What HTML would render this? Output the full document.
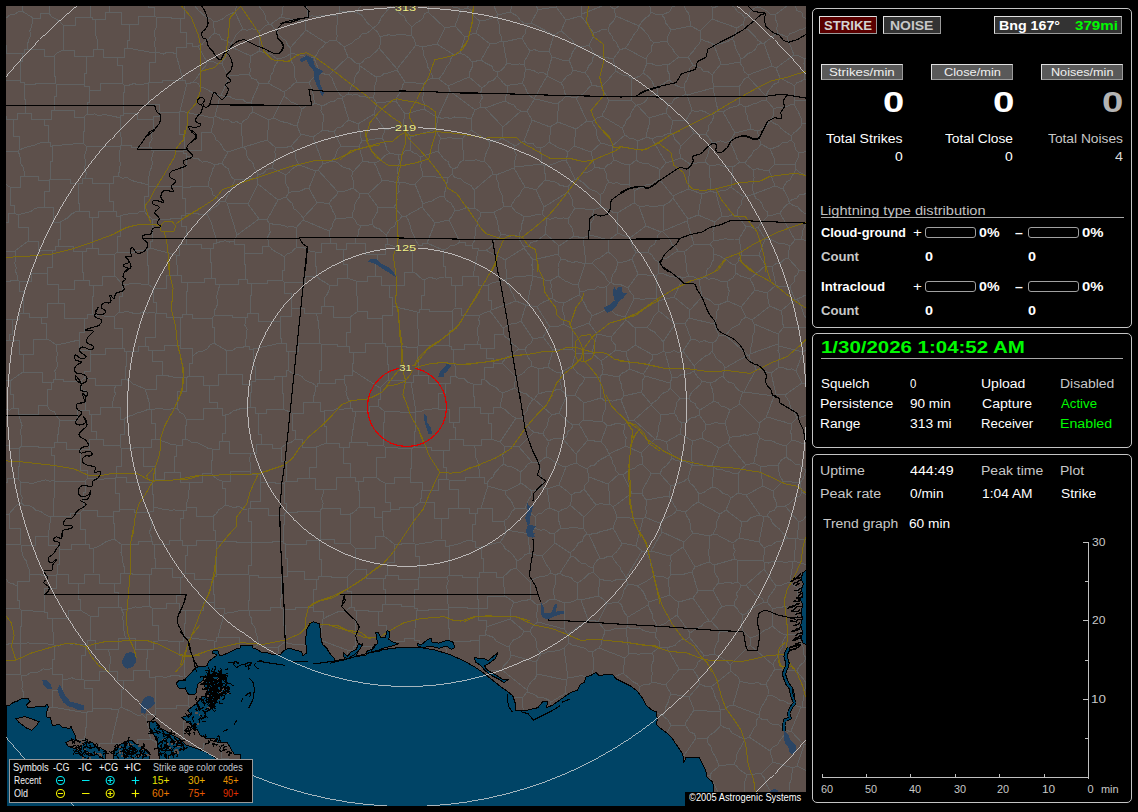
<!DOCTYPE html>
<html>
<head>
<meta charset="utf-8">
<title>Lightning Detector</title>
<style>
html,body{margin:0;padding:0;background:#000;}
body{width:1138px;height:812px;position:relative;overflow:hidden;font-family:"Liberation Sans",sans-serif;color:#fff;}
#map{position:absolute;left:6px;top:6px;width:800px;height:800px;overflow:hidden;background:#5d504b;}
#map svg{position:absolute;left:0;top:0;}
.panel{position:absolute;left:812px;width:318px;border:1px solid #c4c4c4;border-radius:5px;box-sizing:content-box;background:#000;}
.t{position:absolute;white-space:nowrap;line-height:1;font-size:13px;transform-origin:0 0;}
.b{font-weight:bold;}
.g{color:#c8c8c8;}
.gr{color:#00fa00;}
.btn{position:absolute;box-sizing:border-box;border:1px solid;border-color:#e0e0e0 #9a9a9a #9a9a9a #e0e0e0;background:#595959;}
.hr{position:absolute;height:1px;background:#a8a8a8;}
.bar{position:absolute;box-sizing:border-box;border:1px solid #a0a0a0;border-radius:3px;width:51px;height:11px;background:#000;}
#legend{position:absolute;left:3px;top:753px;width:244px;height:44px;box-sizing:border-box;border:1px solid #9a9a9a;background:#000;}
#copy{position:absolute;left:679px;top:786px;width:121px;height:14px;background:#000;}
.s{font-size:11px;}
</style>
</head>
<body>

<div id="map">
<svg width="800" height="800" viewBox="6 6 800 800" shape-rendering="crispEdges">
<rect x="6" y="6" width="800" height="800" fill="#5d504b"/>
<path fill="none" stroke="#616262" stroke-width="1" d="M119 839V828H123V810M151 814H147V806H143M123 810H137V806H143M458 708L450 715M458 708V689H449V676M449 676H437V683H424M424 683V694H424V705M424 705H443V715H450M821 541L817.2 541.5L813.3 540.1L809.3 538.9L805.2 539.3L801.1 540.0L797 538M817 508L814.3 511.0L810.9 514.0L806.3 515.6L803.6 519.7L799 522M797 538L799 522M802 492L806.4 495.0L809.8 498.3L813.8 500.6L818 502M802 492L799.8 496.2L795.5 497.8L792.2 500.8L789.1 503.8L785 506M799 522L785 506M451 739H461V742H481M451 739L450.5 743.6L451.0 747.7L452.3 751.8L452.0 756.1L454.2 760.1L453.4 764.4L455.2 768.5L455 773M481 742L482.4 746.3L482.3 751.2L484.1 755.7L484 761M484 761V769H475V775M455 773H470V775H475M482 709H468V708H458M482 709V719H490V727M490 727V732H481V742M447 736V727H450V715M447 736L451 739M151 814H164V807H183M183 807H187V813H191M26 769V763H29V751M26 769H21V778H11M-6 770L-2.2 773.0L2.7 773.8L6.4 777.1L11 778M29 751H23V736H14M14 736H0V745H-6M52 784H39V769H26M52 784H57V776H63M53 741V757H63V776M53 741H44V751H29M-11 812H-1V804H12M12 804V789H11V778M90 810L94.9 810.2L99.2 807.8L103.8 807.9L108.4 809.0L112.7 807.1L117 807M90 810V785H86V775M117 807V790H114V778M86 775L114 778M143 806V794H147V785M183 807V789H178V779M178 779H170V774H163M163 774H155V785H147M123 810H119V807H117M114 778L125 770M147 785H141V770H125M809 469L806 470M809 469L811.3 464.6L811.4 459.8L813.1 455.5L814.2 451.1L815 447M806 470L802.3 468.4L799.9 464.6L795.3 464.1L792.4 461.1L788.8 459.1L786 457M815 446L810.9 444.4L806.8 443.7L802.6 443.8L798.7 441.9L794.8 440.7L791 441M786 457L786.7 451.1L786 446M786 446L791 441M800 483L802.7 479.3L804.6 474.7L806 470M800 483L802 492M830 476L809 469M821 422L816.7 420.6L814.0 417.2L810 415M813 395L810 415M776 394L774 396M776 394L785 395M774 396L766 418M792 423L787.6 423.4L783.5 421.5L779.2 420.6L775.0 419.5L770.8 417.9L766 418M792 423L797 418M785 395L787.3 398.8L789.7 402.3L790.2 406.9L793.1 410.2L794.9 414.0L797 418M792 423L791.9 427.7L790.5 431.9L792.0 436.4L791 441M797 418L801.5 416.8L805.9 415.6L810 415M776 394L771 373M774 396L744 392M771 373L765.9 371.8L761.2 369.0L756 369M756 369L744 392M740 404L739.9 400.1L741.2 396.1L743 392M740 404L759 423M759 423L766 418M744 392L743 392M828 312L824.8 314.3L821.2 317.0L817.3 319.2L812.3 319.3L809 322M809 322L806.5 318.7L804.0 315.1L802.6 310.9L801.5 306.6L799.4 302.8L797 299M821 290L816.7 291.7L812.3 292.1L808.5 293.9L804.6 295.5L800.8 297.5L797 299M759 423L759.3 427.7L757 433M786 446L781.4 444.8L777.2 443.5L773.2 441.3L768.9 440.3L764.4 440.3L760 438M760 438L757 433M353 813H347V806H344M344 806H335V806H319M319 806V827H317V841M424 743H441V736H447M424 743L423.4 746.8L424.6 750.7L424.8 754.8L425.3 758.8L426.2 762.7L426.3 766.7L428 771M455 773H451V777H446M428 771L432.5 771.4L436.5 775.1L441.2 776.6L446 777M353 813L374 808M374 808H376V814H381M374 808L374.0 804.1L374.0 800.0L374.4 795.9L375.3 791.9L376.1 787.8L376 784M376 784H387V773H393M393 773H404V782H410M410 782V792H413V804M381 814L385.1 812.7L388.9 811.0L392.7 809.3L397.1 809.5L400.8 807.5L404.9 806.9L408.5 804.4L413 804M424 743H420V737H413M393 773L392.4 768.8L392.2 764.4L391.1 760.2L392.0 755.7L391.9 751.3L390 747M410 782H420V771H428M390 747H407V737H413M424 705L421.1 707.8L418.2 710.8L415.4 714.0L412 717M412 717V731H413V737M424 683L413 676M387 703L412 717M387 703V692H393V679M393 679L396.7 678.3L400.9 677.8L404.9 676.4L409.4 678.1L413 676M356 610H368V611H378M356 610V621H355V646M378 611V625H386V641M386 641V644H379V651M379 651H371V646H355M320 640L347 650M320 640L323 619M356 610H354V607H351M323 619L327.2 616.6L331.1 614.9L334.9 613.0L338.9 611.5L343.5 611.5L347.3 609.7L351 607M347 650H353V646H355M482 709L487 699M449 676L450 674M487 699L487.6 695.3L485.5 691.4L485.8 687.4L485.6 683.4L486.6 679.3L485 675M450 674L480 672M485 675H482V672H480M790 582L793 562M790 582L798 589M798 589L801.9 586.6L806.4 584.9L810.7 582.8L816.0 583.0L820 580M794 561L817 568M794 561L793 562M796 539L797 538M796 539L794 561M490 727L494.6 727.0L499.2 727.9L504.0 728.2L508.6 729.6L513 730M484 761L488.5 761.2L492.9 761.3L497.3 761.7L501.6 762.7L506 762M513 730L516.2 733.9L516.1 739.0L519 743M506 762L508.6 758.5L512.1 755.3L513.2 750.5L515.4 746.5L519 743M823 790L793 800M799 819L797.1 815.8L798.0 811.2L795.7 807.5L794.8 803.4L793 800M761 774L756.4 773.8L751.5 774.7L747 775M761 774L773 762M773 762L770 751M770 751L749 737M745 739L749 737M745 739L743.0 743.4L740.8 747.4L738.2 751.3L736.3 755.4L736.0 760.2L734 764M734 764L737.1 766.6L739.8 769.9L743.4 772.3L747 775M793 768L773 762M793 768L792.3 771.6L791.4 775.7L791.0 779.9L789.5 783.9L790.0 788.2L789.4 792.4L789 797M776 798L780.2 798.1L784.4 797.5L789 797M776 798L772.4 794.4L770.1 790.4L767.5 786.6L765.7 782.4L764.2 777.9L761 774M759 717L762.4 719.9L767.1 719.7L770.0 723.3L774.0 724.7L778.6 724.7L782.0 727.3L785.3 730.2L789 731M759 717L756.1 720.8L756.1 725.7L753.3 729.2L751.5 733.2L749 737M789 731L785.8 733.9L782.5 737.2L779.7 740.9L777.2 745.0L772.8 747.2L770 751M733 705L728.3 706.1L724.9 709.3L720 710M733 705L759 715M720 710L720 712M759 715L759 717M721 725L720 712M721 725L724.4 727.7L729.1 728.8L732.1 733.0L736.2 735.1L740.2 737.4L745 739M710 777L693 799M710 777L723 801M723 801L703 819M693 799L700 819M741 805L762 812M741 805L740 805M740 805L729 838M776 798L772.4 801.2L769.0 805.0L766.0 809.0L762 812M747 775L745.4 779.3L744.6 783.6L744.9 788.1L744.1 792.4L743.4 796.7L743.0 801.0L741 805M723 801L727.1 802.5L731.4 803.1L735.9 803.5L740 805M789 797L793 800M671 793L675.2 794.4L679.9 794.6L683.8 797.2L688.5 797.5L693 799M671 793L668.9 796.9L669.0 801.7L666.5 805.6L665.4 809.9L663 814M798 589L797.6 594.5L799 600M799 600L803.0 601.3L807.4 602.6L811.8 603.7L815.3 607.2L820 608M75 -15V-5H90V17M90 17H92V19H95M116 -12V-2H109V12M109 12H105V19H95M383 578V589H385V604M383 578H385V575H387M385 604H401V606H414M414 606V589H418V579M387 575H398V579H418M58 -14V4H49V13M90 17H75V25H63M49 13L51.6 17.0L55.9 18.8L59.6 21.4L63 25M12 804H17V811H23M23 811L23.1 815.8L22.8 820.3L21.7 824.8L20.6 829.3L20.1 833.8L19.3 838.3L20 843M52 784V791H49V807M23 811H38V807H49M625 317L626 320M625 317L634 299M626 320L629.2 322.6L632.3 326.0L636 328M634 299L638.2 298.4L642.7 299.7L647.1 298.5L651.5 298.5L656 299M636 328L647 327M647 327L650.6 323.2L652.5 318.5L655.3 314.5L659 311M659 311L658.6 306.1L658 301M656 299L658 301M656 276L638 274M656 276L656 299M628 288L638 274M628 288L630.0 291.6L632.9 295.0L634 299M663 342L675 324M663 342L660.6 338.3L657.4 335.2L654.4 332.0L650.3 329.9L647 327M675 324L659 311M690 310L689 318M690 310L674 297M675 324L685 323M685 323L689 318M674 297L658 301M809 322L807 327M807 327L807.9 330.6L808.6 334.9L810 339M849 342L844.5 341.0L840.2 340.8L835.8 341.6L831.6 340.5L827.3 341.3L823.1 339.4L818.9 339.2L814.5 340.0L810 339M800 483L783 481M786 457L781.1 460.3L778 465M778 465L778.2 469.4L779.4 473.4L780.5 477.4L783 481M616 350L626 352M616 350L601 361M626 352L626.9 356.4L628.4 360.6L629.3 364.9L629 369M629 369L625.6 371.7L621.7 373.4L619 377M619 377L602 374M601 361L602.3 365.4L603.1 369.5L602 374M611 337L626 320M611 337L612.2 341.2L615.4 345.0L616 350M635 345L626 352M635 345L636 328M656 276L658 274M674 297L683 278M658 274L662.7 273.4L666.7 275.1L670.7 276.5L674.9 277.2L679.3 276.5L683 278M618 263L616.9 266.7L615.6 270.7L613.0 274.3L611.6 278.3L611 282M618 263L615.5 258.4L612.0 254.9L608 252M608 252L603.8 255.0L600.0 257.9L595.5 259.8L592 263M592 263L595.4 266.3L598.3 269.6L601.9 272.3L604.9 275.4L606.9 279.6L610 283M610 283L611 282M628 288L623.7 285.8L619.4 284.3L614.5 284.8L611 282M632 259L638 274M632 259L627.7 260.8L623.1 262.1L618 263M461 10L457.5 7.4L452.9 7.0L450.0 3.1L445.3 2.7L442.0 -0.4L438 -2M461 10L467 8M467 8L469.6 4.2L470.9 0.2L473.3 -3.3L474 -8M438 409V393H445V383M438 409L433.9 408.5L429.6 409.7L425.0 409.5L420.8 411.4L416 412M445 383H428V375H418M418 375H413V382H411M416 412L411 382M585 264L578 285M585 264L580.6 262.7L576.7 261.7L572.4 262.3L568.4 261.6L564.7 259.3L561 259M578 285L573.3 284.6L569.3 282.7L565.3 281.0L561.5 278.6L558 276M558 276L558.0 271.9L558.0 267.5L558.9 263.2L561 259M548 367L553 350M548 367L539 369M525 349L527.4 345.5L531.3 343.0L533 339M525 349L526.6 353.2L528.1 357.4L531.1 361.0L532 366M532 366L539 369M553 350L543 337M533 339L543 337M352 370L380 388M352 370V363H353V352M353 352H365V343H382M388 380L380 388M388 380V364H387V346M387 346H385V343H382M418 375V359H417V347M411 382H404V380H388M387 346H406V347H417M455 376H450V383H445M455 376L455.0 371.1L455.4 366.7L453.3 362.5L453.9 358.1L453.9 353.7L453 349M453 349H451V346H449M449 346L419 345M417 347L419 345M452 311V330H449V346M452 311H429V309H421M421 309H419V312H417M419 345L417 312M452 311L455 308M453 349H464V344H477M477 344L478.2 340.4L478.0 336.1L477.7 331.9L477.8 327.7L479.9 323.7L478.7 319.4L480 315M455 308H461V315H480M475 775V790H486V798M512 788L508.7 790.7L504.8 792.3L501.8 795.3L498.4 797.7L494.2 798.8L491 801M512 788L514 775M506 762L509.4 766.2L511.7 770.8L514 775M486 798H489V801H491M511 655L509.4 659.7L506.6 663.0L503.3 666.1L502 670M511 655L536 662M502 670L527 690M527 690L528.8 685.3L531.5 681.4L535.4 678.2L537 674M536 662L537 674M541 654L544.9 653.1L548.6 651.4L552.7 651.4L556.7 650.6L560.6 649.8L564 648M541 654L536 662M564 648L568 678M568 678L566 680M566 680L537 674M450 674L449.8 670.0L448.8 665.8L448.4 661.6L446.8 657.6L446.6 653.3L446.1 649.1L445 645M413 676L414.6 672.2L415.5 668.1L416.7 664.0L416.7 659.8L416.1 655.4L416.5 651.2L418.6 647.3L419 643M445 645H429V643H419M378 611H382V604H385M386 641H404V638H414M414 606V608H417V610M417 610L414 638M393 679H387V670H383M383 670V664H379V651M414 638V640H419V643M733 705L740 681M768 695L766.3 698.9L764.2 702.8L761.7 706.6L760.0 710.7L759 715M768 695L768.2 689.5L766 684M766 684L761.6 684.7L757.5 682.3L752.9 683.8L748.6 683.1L744.3 682.6L740 681M711 687L713.1 690.4L714.6 694.3L715.4 698.5L718.1 702.0L719.4 706.0L720 710M711 687L731 671M740 681L738.0 676.8L734.4 674.1L731 671M772 626L775.6 628.7L778.9 631.6L782.7 633.9L787 635M772 626L768.5 628.7L764.5 630.1L761.2 632.9L757.7 635.4L753.7 636.6L750 638M750 638L750 645M750 645L773 665M787 635L784.2 638.7L782.5 642.4L782.6 647.0L780.2 650.4L778.5 654.1L777.0 658.0L774.3 661.3L773 665M766 684L775 669M750 645L730 665M731 671L730 665M773 665L775 669M793 768L797 766M797 766L821 778M791 731L804 745M791 731L801 707M814 744L804 745M821 712L802 707M802 707L801 707M789 731L791 731M797 766L804 745M768 695L772.8 695.7L776.6 697.9L780.3 700.6L784.8 701.1L788.5 703.7L793.2 703.7L797.0 706.0L801 707M833 678L828.1 677.8L824.0 680.7L819.5 681.5L814.9 681.6L810.3 681.5L806 683M806 683L802 707M806 683L803.2 678.9L799.9 674.9L797 671M797 671L775 669M671 793L668 784M668 784L687 768M710 777L710 775M687 768L691.7 768.9L695.8 771.8L700.4 772.9L704.8 775.0L710 775M734 764L719 766M719 766L715.6 769.1L712.2 771.7L710 775M721 725L717.6 729.1L713.9 732.4L709.6 735.2L707 739M719 766L717.7 762.1L716.0 758.2L714.1 754.5L711.8 750.9L711.0 746.6L708.1 743.3L707 739M668 784L664.5 782.9L661.5 779.8L657 779M643 782L657 779M643 782L635 803M635 803L639.5 805.0L644.0 806.2L647.6 809.4L652.0 810.9L656.5 812.0L660 815M643 782L639.4 780.8L636.8 777.2L633.2 775.0L630.3 771.9L626.6 769.8L623.8 766.5L620 764M620 764L618.0 768.2L615.1 771.1L612.4 774.2L609.4 777.0L606 779M635 803L628 807M628 807L625.4 802.8L621.0 800.7L618.2 796.9L614.2 794.3L610.7 791.2L607 788M606 779L607 788M323 619V611H313V607M351 607V591H347V577M316 579V589H313V607M316 579H318V576H321M321 576H331V577H347M383 578H366V569H355M355 569L350.6 573.3L347 577M246 -1L257 3M257 3L261.0 0.8L264.8 -1.3L267.5 -4.7L270.5 -7.7L274.5 -9.4L278 -12M223 -10L226.9 -7.8L230.0 -4.1L233.8 -1.1L238 1M238 1L246 -1M95 19L95.2 23.0L95.2 27.4L95.3 31.8L96.1 36.1L97.6 40.5L97.6 44.9L97 49M63 25V40H63V50M63 50H74V56H86M86 56H93V49H97M154 16H138V24H129M154 16L156 17M156 17L156.2 21.5L156.9 26.0L154.8 30.3L154.5 34.7L155.6 39.2L154.1 43.6L155.3 48.0L155 52M129 24V40H127V48M127 48L155 53M155 53L155 52M148 -11V7H154V16M109 12H121V24H129M180 18H171V17H156M180 18H184V5H194M194 5V-3H196V-6M117 57H103V49H97M117 57H124V48H127M194 5L196.7 8.4L199.8 11.5L203.0 14.5L206.3 17.3L210.8 18.7L214 22M238 1L235 12M235 12L230.2 13.9L226.2 16.1L222.5 19.1L218.2 20.9L214 22M180 18V32H186V43M155 52L159.3 52.7L163.4 54.1L167.7 52.0L171.8 52.3L176 54M186 43V47H176V54M214 22L213.9 27.7L215 33M186 43H192V46H198M215 33L211.3 35.8L208.7 39.3L204.8 41.1L202.0 44.4L198 46M22 11L33 18M22 11L18.0 11.8L14.4 14.5L10.1 14.7L6.6 17.7L2.3 18.1L-1.6 19.6L-6 20M33 18L32.6 22.4L31.3 26.8L29.8 31.1L30.6 35.9L28.5 40.1L27.6 44.6L27 49M-5 45H6V53H22M22 53H24V49H27M17 -16V-1H22V11M49 13H40V18H33M63 50L58.1 52.3L54 56M54 56H44V49H27M-11 86H2V80H20M20 80V61H22V53M20 80V82H24V84M54 56V76H55V83M24 84H35V83H55M9 340V334H12V319M9 340L4.0 341.4L-0.1 343.7L-4.6 344.8L-8.7 347.2L-13 348M-10 310H1V319H12M53 811V831H52V846M53 811L88 814M49 807V808H53V811M85 774H73V776H63M85 774L86 775M90 810V813H88V814M635 345L653 355M629 369L643 374M643 374L646.0 370.2L648.1 366.6L649.3 362.5L652.3 359.3L653 355M663 342L664 351M653 355L658.9 353.8L664 351M694 371L694 366M694 371L689.9 373.4L685.4 374.5L680.7 374.8L676.8 377.8L672 378M672 378L665 352M665 352L669.7 352.7L674.0 350.4L678.6 352.6L683 351M694 366L683 351M685 323L691 339M665 352L664 351M683 351L691 339M748 355L725 368M748 355L725 335M725 368L722.9 364.0L719.7 361.2L716.4 358.5L714.3 354.8L712 351M712 351L713 343M713 343L716.7 339.9L719 335M725 335L719 335M749 355L750.3 360.4L754.0 364.1L756 369M749 355L748 355M743 392L739.1 390.5L735.9 387.6L733.7 383.4L729.0 382.4L725.6 379.8L723 376M723 376L725 368M723 376L718.6 378.3L715.0 381.5L710 383M694 371L697.2 376.6L702 381M710 383L702 381M694 366L697.7 362.1L701.3 359.3L704.9 356.3L709.3 354.4L712 351M691 339L695.5 339.4L699.5 342.3L704.3 340.6L708.6 342.1L713 343M714 324L689 318M714 324L719 335M438 409H449V422H453M455 376L459.0 378.5L464.3 378.9L468.1 382.4L473 384M473 384V396H474V407M474 407H459V422H453M443 450H449V439H455M443 450H431V447H414M414 447V431H415V413M416 412L415 413M455 439V427H453V422M801 239L817 244M801 239L802.5 234.9L802.8 230.5L804.7 226.8L805.6 222.7L807.8 219.0L809 215M809 215L814.5 213.1L820 212M797 299L795 299M784 327L807 327M784 327L782.3 322.8L782.8 318.4L781.8 314.5L781 311M795 299L781 311M778 344L778 334M778 344L750 354M778 334L754 324M750 354L750.7 349.7L751.3 345.4L752.7 341.2L752.1 336.7L754.3 332.6L754.4 328.2L754 324M771 373L778 368M749 355L750 354M778 368L778.3 363.3L779.2 359.0L779.8 354.6L777.9 350.2L779 346M779 346L778 344M752 320L770 306M752 320L754 324M784 327L778 334M781 311L770 306M746 317L752 320M746 317L741.7 319.7L739.4 324.1L735.3 326.3L731.2 328.5L728.3 332.2L725 335M825 369L806 384M825 365L806 350M796 371L803 352M796 371L802 383M803 352L806 350M802 383L806 384M813 395L810.5 391.1L808.6 387.0L806 384M810 339L806 350M778 368L783.1 367.6L787.4 369.4L792.1 368.9L796 371M779 346L803 352M785 395L802 383M711 687L705.1 686.3L700 684M694 710L720 712M694 710L689 697M689 697L700 684M560 373L555.5 372.0L551.7 369.5L548 367M560 373L561.0 377.3L559.8 381.5L561.1 385.5L561 390M539 369L538 394M561 390L556.3 389.5L551.9 392.0L546.9 391.6L542.3 392.8L538 394M461 10L455 26M467 8L470.9 10.2L473.1 14.7L476.2 18.2L480 21M476 33L480 21M476 33L472.3 33.7L468.8 35.9L465 37M465 37L455 26M476 33L490 44M498 15L493.8 17.6L489.4 18.9L485.1 20.5L480 21M498 15L497.4 19.7L499.1 23.9L499.1 28.3L499.5 32.6L501.5 36.8L501 41M490 44L495.8 43.8L501 41M576 353L572 349M576 353L592 353M572 349L573 329M592 353L597 334M573 329L589 323M597 334L589 323M572 366L576 353M572 366L560 373M553 350L572 349M585 378L600 377M585 378L581.3 375.3L577.6 373.1L574.8 369.9L572 366M600 377L602 374M601 361L592 353M563 324L568.0 326.7L573 329M563 324L558.9 326.0L554.2 326.8L550 327M550 327L546.1 332.1L543 337M611 337L597 334M580 291L579 295M580 291L584.7 291.4L588.8 289.0L593.7 290.0L597.7 286.6L602.6 288.0L607 286M579 295L581.8 298.1L583.6 301.9L585.6 305.5L587.2 309.5L590.1 312.6L592 316M607 286L606 310M606 310L601.3 311.8L596.5 314.0L592 316M586 263L592 263M586 263L585 264M578 285L580 291M610 283L607 286M564 303L579 295M564 303L562.5 307.4L562.8 311.6L564.2 315.8L564.2 320.0L563 324M589 323L592 316M625 317L620.2 315.7L615.4 314.5L611.5 310.8L606 310M544 166L542 164M544 166L544.5 170.5L545.3 175.2L545 180M542 164L515 167M515 167L514 168M525 187L514 168M525 187L530.4 188.3L536 190M545 180L536 190M544 166L548.3 165.6L552.7 164.0L557.2 162.5L561.6 160.7L566 161M575 179L573.1 175.4L571.2 171.8L570.1 167.8L568.1 164.3L566 161M575 179L571.0 182.4L568 187M545 180L549.0 180.8L553.1 181.5L557.0 182.8L560.3 185.7L564.5 186.1L568 187M503 328L490 311M503 328L507.5 325.5L512.0 323.6L517.1 323.1L521 321M521 321L526 305M491 310L490 311M491 310L516 301M516 301L526 305M486 348H494V334H503M486 348V358H493V363M502 363L493 363M502 363L504.5 359.7L507.8 356.7L512.3 355.1L515.3 351.7L519 349M519 349L515.5 345.9L511.8 343.5L509.4 339.6L505.6 337.3L503 334M477 344H480V348H486M480 315L484.8 312.7L490 311M503 328L503 334M473 384H481V379H484M484 379V367H493V363M484 379L487.8 382.2L491.2 385.4L495.8 387.2L499.0 390.8L503 393M503 393L515 388M516 377L514.9 382.2L515 388M516 377L502 363M525 349L519 349M532 366L527.5 368.1L524.4 372.1L520.5 374.9L516 377M533 339L521 321M421 309V295H424V280M456 285L455 308M456 285H451V277H445M445 277L440.4 277.1L436.5 279.2L432.2 277.9L428.1 277.9L424 280M446 777L446.5 781.4L446.1 785.7L444.1 789.9L445.4 794.3L444.5 798.5L444 803M413 804H416V811H421M421 811H428V803H444M486 798H476V811H456M444 803H450V811H456M484 847V825H493V807M493 807L491 801M456 811V829H457V837M355 548L350 543M355 548V558H355V569M321 576V559H319V540M350 543H334V539H320M319 540L320 539M541 654L538.3 650.6L536.4 646.8L536.3 642.1L534.9 638.0L532.0 634.7L530 631M511 655L509 647M509 647L510.9 643.0L513.9 639.7L518.4 637.9L522.0 635.1L524 631M530 631L524 631M485 675H491V670H502M480 672V660H479V640M509 647L504.2 645.3L500.2 643.2L496.2 641.2L493.2 637.2L488.8 635.8L485 634M479 640V635H485V634M445 645V643H449V641M479 640H470V641H449M417 610H428V609H448M449 641V628H448V609M800 632L815 627M800 632L798 634M798 634L798.5 637.9L800.1 641.8L802.3 645.5L803.9 649.4L803.5 654.0L806 658M806 658L810.1 657.7L814.5 657.5L819.0 657.9L823 656M799 600L793 607M793 607L794.9 610.8L796.6 614.8L795.7 619.4L796.4 623.7L799.0 627.4L800 632M772 608L775.9 608.0L780.2 607.9L784.5 606.2L788.9 607.8L793 607M772 608L772 626M787 635L798 634M797 671L798.5 667.4L801.1 664.3L804.3 661.7L806 658M548 825L535 809M535 809L531.7 812.9L526.9 814.0L523.6 817.4L519 819M512 788L537 800M493 807L496.8 807.8L500.7 809.4L504.1 812.1L508.4 813.0L512.1 815.1L515.5 817.7L519 819M537 800L535 809M544 768L542.1 771.6L542.2 775.8L541.7 779.9L539.6 783.7L540.0 788.0L539.5 792.1L538.9 796.1L537 800M544 768L547.5 771.0L552.3 771.5L555.6 774.7L559.2 777.3L563.9 777.9L567.6 780.5L571 783M537 800L540.9 798.6L545.0 798.8L548.9 798.3L553.0 799.0L557.0 799.9L561.0 799.2L565.0 799.2L569 799M571 783L569 799M514 775L519.0 775.0L522.6 772.0L527.1 772.0L530.7 769.0L534.9 768.0L539.1 766.9L543 766M543 766L544 768M537 800L537 800M657 779L656.5 774.6L656.0 770.4L657.2 766.1L655.6 761.9L657.8 757.5L657.1 753.3L656 749M620 764L620 764M620 764L640 745M656 749L651.9 748.5L647.8 747.5L643.6 747.0L640 745M628 807L627.2 810.8L625.6 814.4L624 818M819 34L817.2 38.5L817.1 43.5L813.2 46.9L813.6 52.0L811 56M828 65L811 56M819 34L816.0 31.3L813.9 27.0L810 24M810 24L806.9 26.9L803.0 29.0L798.6 30.2L794.6 32.2L790.2 33.4L787 37M794 55L787 37M794 55L799.7 56.1L805 59M811 56L805 59M805 59L804.0 63.5L804.2 68.5L804.8 73.6L804 79M804 79L824 85M736 -14L757 1M763 -10L757 1M731 -12L728 2M728 2L730.9 5.2L734.9 7.7L737.6 11.8L741.9 14.1L745 18M745 18L748.8 16.1L750.3 11.5L753.6 9.0L757 7M757 7L757 1M810 23L807.9 19.4L803.2 17.4L801.7 12.4L797.0 10.6L795.3 5.8L791 3M810 23L822 7M791 3L792 -1M810 24L810 23M778 33L787 37M778 33L776.6 28.7L777.6 23.9L775.6 19.7L775 15M775 15L791 3M775 15L770.1 14.4L766.5 10.6L762.1 8.4L757 7M515 -3L510 12M510 12L498 15M498 15L486 -11M498 15L498 15M538 10L542.5 8.8L547.0 8.5L551.4 7.6L556 7M538 10L531 -7M559 -5L559.1 -0.9L556.3 2.8L556 7M549 51L554 35M549 51L543.9 51.8L539.3 51.7L534.7 49.6L530 51M554 35L531 23M530 51L527.0 46.8L524.4 42.4L522 38M522 38L525.0 33.9L526.1 29.0L528 24M528 24L531 23M561 31L566 20M561 31L554 35M566 20L556 7M538 10L531 23M524 65L519.7 63.9L515.4 64.5L511.2 64.1L507 63M524 65L524.9 60.1L527.8 55.6L530 51M507 63L503 42M503 42L522 38M503 42L501 41M510 12L513.6 14.0L517.5 16.1L520.1 20.2L523.6 22.9L528 24M411 449L414 447M411 449L385 447M415 413L384 411M385 447L383 445M383 445V422H384V411M380 388V399H378V406M378 406L384 411M411 449V468H410V477M376 477V457H385V447M376 477L380.0 480.4L385 483M410 477H394V483H385M394 544H401V543H413M394 544L390.7 541.2L387.1 538.3L383 536M413 543L414 507M383 536V530H382V517M414 507H399V509H390M382 517V511H390V509M387 575V562H394V544M418 579L419 577M415 544V556H419V577M415 544L413 543M355 548H375V536H383M500 542L502.8 538.4L505.1 534.3L506 530M500 542L503.1 544.9L505.2 548.8L508.8 551.3L512.2 553.9L514.7 557.4L517 561M517 561L521.4 558.5L524.8 554.9L529 553M529 553L530.1 548.1L528.4 543.2L528.6 538.4L530 534M530 534L506 530M48 142L43.6 142.2L39.3 143.1L35.2 144.9L31.0 146.1L26.7 147.0L22.6 148.6L19 150M48 142V125H44V119M19 150V136H13V119M44 119H31V113H25M13 119H17V113H25M-11 116H6V119H13M-10 154H5V151H18M18 151L19 150M24 84V99H25V113M86 56V73H84V84M55 83L56 84M84 84H76V84H56M44 119H51V110H54M56 84V96H54V110M251 102L253 112M251 102L246.2 102.4L242.4 99.1L237.7 99.9L233.5 98.7L229.5 96.5L224.8 97.1L221 95M221 95L220 96M241 124L243.8 120.7L247.7 118.7L249.6 114.5L253 112M241 124L236.9 121.6L232.0 122.5L228.3 119.3L223.5 120.0L219.5 118.0L215 116M220 96L215 116M230 76L226.2 72.1L223.7 67.6L222 63M230 76L221 95M222 63L217.1 63.5L212.2 61.4L207 62M207 62L205.7 65.8L202.9 68.8L200.6 72.2L198.3 75.6L196.1 79.1L193 82M220 96L216.0 94.2L212.1 92.4L208.4 90.3L204.6 88.3L200.5 87.0L197.7 83.2L193 82M235 12L243 29M215 33L219.4 35.0L222.0 39.6L227.0 40.7L231 44M243 29L238.9 32.1L235.7 35.6L233.7 40.1L231 44M222 63L231 47M198 46L207 62M231 47L231 44M154 150L152.6 154.6L151.5 158.8L152.5 163.4L151.4 167.6L149.6 171.7L149.0 176.0L148.6 180.3L148 185M154 150H175V151H183M183 151V153H186V156M186 156V166H182V186M182 186L148 186M148 186L148 185M227 834V827H228V809M191 813H198V802H212M228 809L224.0 807.5L220.2 804.8L216.0 803.0L212 802M387 703H384V711H376M390 747H385V741H377M377 741V725H376V711M383 670H369V683H353M347 650V667H345V677M353 683H350V677H345M376 711H364V704H356M353 683L356 704M345 677H337V681H323M356 704H351V715H340M340 715H327V707H319M319 707L318.9 702.6L320.8 698.3L321.7 693.9L321.7 689.4L321.7 684.9L323 681M312 647H317V640H320M312 647V664H313V671M313 671V674H323V681M641 392L651 404M641 392L642.8 388.5L642.8 384.3L642.7 380.1L645 376M651 404L654.6 401.7L657.9 399.1L660.4 395.6L663.6 392.9L667.7 391.3L670 388M645 376L670 383M670 388L670 383M619 377L619.6 380.5L621.4 384.2L621.4 388.4L623.9 391.9L624 396M643 374L645 376M624 396L641 392M672 378L670 383M680 398L689 398M680 398L670 388M689 398L690.6 394.2L693.2 390.7L696.6 387.8L699.9 384.9L702 381M699 415L706 424M699 415L700 410M700 410L714 401M706 424L710.6 424.3L715.2 422.4L720.0 423.4L725 423M714 401L718.0 402.7L721.3 406.2L725.8 407.2L730 410M730 410L725 423M674 413L675.8 407.8L676.8 402.6L680 398M674 413L676.7 416.3L678.3 420.5L682 423M682 423L686.7 422.4L689.9 418.2L694.8 417.5L699 415M689 398L691.0 401.6L695.0 403.4L696.7 407.4L700 410M710 383L711.7 387.4L712.9 391.9L713.5 396.5L714 401M740 404L730 410M730 438L734.6 436.1L739.3 436.4L743.8 434.9L748.5 435.2L753.0 433.8L757 433M730 438L727.5 433.1L726.7 427.8L725 423M503 393L500 407M474 407H480V413H488M500 407H493V413H488M474 445H463V439H455M474 445H481V439H491M488 413V423H491V439M714 324L715.6 320.7L716.7 316.9L716.1 312.6L718.3 309.0L718 305M690 310L702 297M718 305L713.8 304.0L710.4 300.5L706.3 298.3L702 297M746 317L741 307M741 307L728 301M718 305L728 301M741 307L755 290M770 306L768.4 302.2L767.9 297.5L767 293M755 290L767 293M671 694L666 685M671 694L689 697M666 685L668.2 681.4L671.6 678.7L673.6 675.0L676.9 672.3L679 669M700 684L698.6 678.7L696.3 674.1L693 670M693 670L679 669M640 687L643.5 684.4L648.5 684.7L652 682M640 687L637.2 683.8L633.0 681.8L629.8 678.7L626.3 675.9L623 673M652 682L651.3 677.6L652.3 673.5L651.2 669.3L651.4 665.2L653.2 661.1L653.7 657.0L652 653M623 673L625 658M625 658L629 654M629 654L633.4 653.6L638.2 654.2L643.0 653.7L647.7 653.3L652 653M666 685L652 682M667 648L679 669M667 648L660 647M660 647L652 653M764 569L746 585M764 569L776 586M746 585L748.9 588.7L752.3 591.0L754.8 594.3L758.0 596.8L762.1 598.4L764 602M776 586L773.8 589.9L771.1 593.8L768.3 597.6L767 602M767 602L764 602M790 582L785.5 583.4L780.9 585.5L776 586M793 562L789.2 561.8L785.1 562.7L780.9 561.1L776.7 561.5L772.5 561.1L768.4 563.1L764 562M764 562L764 569M772 608L767 602M750 638L746.3 634.6L743 631M743 631L741.9 626.8L741.9 622.8L742.2 618.8L743 615M743 615L746.7 613.4L749.3 609.5L753.2 607.9L756.7 605.5L760.6 603.8L764 602M796 539L788 538M764 562L763 560M788 538L784.2 540.0L779.9 541.3L775.5 542.1L771.9 545.1L767.6 546.2L764 548M763 560L764.2 553.9L764 548M629 654L626 628M656 632L655.9 637.3L659.3 641.5L660 647M656 632L651.3 632.5L647.2 631.6L643.2 630.4L639.5 628.0L635.2 628.3L631.0 628.6L627 627M627 627L626 628M743 615L739.2 612.3L737.2 608.4L734 606M746 585L741 585M741 585L739.6 589.3L736.7 593.0L737.3 597.8L734.6 601.6L734 606M516 568L517 561M516 568L530 582M529 553L533.5 554.3L537.9 555.5L542 556M530 582L534.0 579.0L538.1 577.1L542.7 576.7L547.1 575.4L551 573M542 556L544.2 560.5L546.3 564.8L549.5 568.4L551 573M584 489L580.4 492.1L575.4 492.5L571 495M584 489L596 505M596 505L584 517M584 517L570 505M570 505L571.7 500.0L571 495M585 378L582.7 382.7L579.4 386.4L577.3 390.8L575 395M561 390L567 395M575 395L567 395M600 377L601 398M575 395L584 403M601 398L584 403M550 508L559 512M550 508L547 489M559 512L562.1 509.5L566.8 508.4L570 505M571 495L567.2 491.4L563.2 488.2L559 485M547 489L559 485M530 534L535 528M506 530L504 521M504 521L507.7 518.3L510.2 515.0L512.0 511.2L515 509M535 517L535 528M535 517L525 508M525 508L515 509M515 388L517.9 390.8L521.9 392.6L526.2 393.9L529.5 396.7L533 399M538 394L534 399M533 399L534 399M609 455L611.7 458.2L612.4 462.8L614.9 466.4L616.0 470.7L619 474M609 455L604.9 457.3L601.0 459.3L597.5 461.7L594.5 465.1L590.1 466.1L587 469M589 477L587 469M589 477L608 484M608 484L619 474M576 463L579.7 465.2L583.4 467.1L587 469M576 463L571.0 464.7L566 467M584 489L584.9 484.9L588.6 481.7L589 477M566 467L559 485M610 504L605.4 504.6L600.7 503.4L596 505M610 504L609.9 500.4L610.0 496.2L609.3 492.2L608.6 488.1L608 484M659 262L662.3 259.1L666.9 258.2L670.5 255.6L674.0 253.0L678 251M659 262L654.8 259.7L652.1 255.2L648 252M648 252L649.9 247.1L654.3 244.3L656.3 239.9L657.8 235.3L661 232M678 251L675.5 247.4L672.1 244.8L670.6 240.7L668.1 237.4L665.2 234.4L662 231M661 232L662 231M632 259L636 252M658 274L659 262M636 252L648 252M742 255L739.2 257.7L738.2 262.0L735 265M742 255L759 255M750 279L753.2 276.2L756.2 273.3L759.7 270.9L762.7 267.9L766 266M750 279L745.3 277.4L740.4 276.0L736 273M736 273L735 265M759 255L766 266M728 301L727.9 296.0L729.2 291.1L727.6 286.2L728 281M728 281L733.1 277.9L736 273M755 290L752.8 284.0L750 279M728 281L724.2 281.8L720.3 281.0L716.5 279.3L712.6 278.4L708.4 279.3L705 277M735 265L730.8 263.4L727.2 260.1L723.1 257.9L719.0 255.6L714 254M714 254L713.9 258.7L712.0 262.4L710.7 266.3L707.1 269.4L706.5 273.6L705 277M683 278L689 276M678 251L684 252M684 252L685.5 256.9L685.8 261.7L686.4 266.4L686.6 271.2L689 276M702 297L699 280M689 276L694.3 277.0L699 280M705 277L699 280M542 164L541.5 160.0L541.7 155.9L539.9 151.9L541 148M541 148L545.5 145.7L549 142M566 161L568 152M549 142L552.5 144.2L556.2 146.5L560.0 148.7L564.4 149.5L568 152M482 88L485.6 85.2L489.1 81.6L494.0 79.8L497 76M482 88L469 77M469 77L469.8 72.0L472.2 67.0L472 62M498 72L493.6 70.6L491.9 66.2L488.1 64.3L484.4 62.4L481 60M498 72L497 76M472 62L481 60M507 63L504.6 66.8L501.6 70.1L498 72M490 44L481 60M465 37L460 53M460 53L464.9 55.1L468.8 57.8L472 62M607 4L582 14M607 4L603 -8M582 14L579 -12M614 9L607 4M614 9L618.0 6.7L621.6 4.1L625.1 1.3L627.1 -3.2L631.4 -4.9L634 -8M581 16L566 20M581 16L582 14M586 263L583 238M583 238L590 235M608 252L609 240M609 240L590 235M663 231L662 231M663 231L687 221M684 252L694 244M687 221L694 244M714 254L713.5 249.0L710 244M694 244L710 244M739 239L734.5 239.0L730.2 239.5L725.8 238.8L721.5 239.3L717.3 240.4L713 241M739 239L742 255M713 241L710 244M663 206L666.7 203.7L670.4 201.4L673 198M663 206L663 231M687 221L688 219M673 198L688 219M713 241L713.4 236.2L712.9 231.3L714.3 226.5L715 222M715 222L698 215M688 219L698 215M614 9L616 16M581 16L594 33M616 16L613.9 20.6L610.1 24.3L608 29M594 33L598.5 31.6L602.8 29.1L608 29M575 179L576 179M568 187L568 192M600 195L597.0 192.0L593.1 190.3L589.2 188.7L586.3 185.6L583.2 182.7L579.7 180.4L576 179M600 195L601 207M594 210L601 207M594 210L575 208M575 208L572.1 204.7L572.2 199.7L570.3 195.6L568 192M536 190L544 207M568 192L544 207M550 281L545.8 280.3L541.7 278.2L537.3 277.2L533 276M550 281L551.6 285.2L550.8 289.7L552.6 294.0L552 298M533 276L527 305M552 298L548.1 300.3L544.1 301.7L540.5 303.8L537 307M537 307L527 305M564 303L559.3 302.8L555.4 300.9L552 298M558 276L550 281M550 327L537 307M526 305L527 305M427 243L443 250M427 243L435 223M435 223L449 220M449 220L460 242M460 242L456.1 244.9L451.0 245.3L447.3 248.5L443 250M561 259L558 254M533 276L532 275M558 254L533 260M532 275L533.1 269.9L531.9 265.1L533 260M473 276H478V285H488M473 276L478 251M478 251L486 250M486 250L489.8 252.4L493.4 254.4L497.4 255.8L501.1 257.6L505 260M488 285L492.5 282.6L497.2 281.9L501.5 280.3L506 279M505 260L507 278M506 279L507 278M456 285H462V276H473M491 310V300H488V285M445 277V266H443V250M460 242H465V245H472M472 245V248H478V251M516 301L514.1 297.6L512.8 293.8L510.4 290.5L509.7 286.4L506.8 283.3L506 279M524 248L533 260M524 248L505 260M532 275L528.2 275.6L524.0 276.5L519.7 276.3L515.3 276.2L511.3 278.3L507 278M382 343V327H382V318M417 312L392 306M382 318V315H392V306M427 243H422V245H419M435 223L422 207M419 245L416.0 241.1L414.3 237.0L412.5 232.9L410.8 228.8L409.9 224.3L408.4 220.1L406 216M422 207L406 216M449 220L452.6 215.3L455 210M472 245L474.5 240.8L475.0 236.6L475.1 232.4L475.2 228.1L477.7 224.4L477.9 220.2L480.3 216.4L480 212M480 212L475 208M455 210L459.2 210.4L463.0 209.0L466.9 207.5L471.1 208.8L475 208M13 408V394H10V381M13 408L9.6 410.1L4.9 409.1L1.2 411.5L-2.6 413.5L-6.6 414.7L-10.5 416.2L-15 417M10 381L4.8 380.9L0.3 379.7L-4.2 378.1L-9.0 378.2L-13 376M14 736V725H18V711M-11 706H2V711H18M9 340H19V354H23M10 381L23 372M23 354V365H23V372M640 687L636 704M601 683L623 673M601 683L600.4 687.4L601.8 692.1L601 697M601 697L607 704M607 704L611.0 704.8L615.2 703.2L619.4 705.2L623.6 704.5L627.8 703.7L632.0 702.8L636 704M671 694L669.2 698.0L668.0 702.5L665.9 706.7L665.2 711.4L663 716M663 716L658.9 714.0L654.4 713.2L649.5 714.8L645.1 712.9L641 712M636 704L641 712M620 764L616.8 761.0L615.3 756.3L611.8 753.2L608.6 750.0L606 746M606 779L601.6 777.8L596.7 777.8L592.2 776.4L588.1 773.5L583 773M583 773L581.3 769.1L582.3 764.2L580.2 760.0L579.8 755.4L579 751M606 746L579 751M640 745L634 729M634 729L608 728M606 746L608 728M607 704L607.2 708.3L607.1 712.4L604.8 716.3L606.4 720.5L605 724M634 729L636.5 725.4L638.2 721.2L639.1 716.8L641 712M608 728L605 724M487 699L523 697M513 730L523 719M523 719L522.4 714.7L523.7 710.4L522.4 706.0L522.6 701.6L523 697M527 690L527 692M523 697L527 692M421 811V824H421V833M312 647L307.3 645.5L302.8 644.9L298.2 644.5L293.6 644.2L289.1 643.7L285 642M313 607H295V609H283M285 642V625H283V609M448 609L449 607M419 577H426V577H447M449 607L447.8 603.1L448.0 598.7L447.1 594.4L447.1 590.0L446.8 585.6L448.2 581.1L447 577M415 544L419.0 544.0L423.3 543.3L427.7 542.7L432.0 542.0L436.1 540.0L441 540M449 546H445V540H441M449 546V567H449V575M449 575L447 577M683 757L696 738M683 757L679.2 755.6L675.8 753.1L672.5 750.7L668.1 750.4L664.8 747.9L661 747M661 747L661.8 741.9L663.9 737.6L666.5 733.5L669.0 729.4L671 725M696 738L694.3 733.8L689.8 731.9L687.4 728.1L685 725M685 725L671 725M687 768L686.5 764.1L684.7 760.5L683 757M707 739L701.6 738.1L696 738M656 749L661 747M663 716L667.7 719.8L671 725M694 710L691.5 713.8L689.3 717.5L686.6 720.9L685 725M607 788L589 812M611 826L607.4 823.8L603.8 821.4L599.8 819.6L596.2 817.2L592.3 815.3L589 812M728 2L713 8M745 18L743 24M713 8L712.4 13.9L712 19M712 19L737 28M743 24L737 28M662 15L664.6 18.4L665.7 23.0L668.4 26.4L671 30M662 15L665.5 13.4L669.7 11.6L672.0 7.0L676.2 5.3L679.7 2.6L684 1M671 30L691 26M684 1L684.6 5.2L685.3 9.5L688.5 13.0L689.6 17.2L690.1 21.5L691 26M679 57L688 57M679 57L675.1 53.4L672.7 49.0L669.3 45.3L667 41M688 57L690.9 53.7L693.9 50.4L696.3 46.5L699.7 43.5L701 39M667 41L667.7 36.7L669.6 33.2L671 30M701 39L700 31M700 31L691 26M681 -10L682.9 -4.7L684 1M684 1L707 1M710 -15L708.1 -10.8L707.5 -6.8L708.9 -2.4L707 1M651 12L656.2 14.5L662 15M651 12L648 -3M684 1L684 1M700 31L712 19M713 8L707 1M280 321H258V313H250M280 321V338H281V343M246 346L245.6 341.6L246.4 337.5L246.3 333.4L247.1 329.3L244.9 325.2L245.4 321.1L246 317M246 346H249V349H253M250 313H247V317H246M281 343L253 349M350 543L350 514M382 517H374V507H359M359 507L356.5 509.9L353.5 512.6L350 514M376 477H363V481H358M385 483V502H390V509M359 507V490H358V481M481 547L500 542M481 547H475V541H472M472 541V524H475V513M504 521H492V508H481M481 508H477V513H475M348 94L352.4 95.1L356.8 94.5L360.7 96.6L365.0 96.7L369.2 97.6L373 98M348 94L349.8 90.3L351.3 86.3L354.0 82.7L354.6 78.2L356.5 74.3L359.2 70.8L360 66M373 98L374.2 94.0L374.4 89.8L374.8 85.6L376.2 81.5L376 77M360 66L376 77M343 97L342 98M343 97L348 94M358 124L374 114M358 124L349 120M349 120L342 98M373 98L377 103M377 103L374 114M117 57V65H122V83M84 84V86H89V90M122 83H100V90H89M155 53V62H149V82M122 83L124 85M124 85L128.7 85.3L133.4 83.7L138.2 84.4L143.0 84.3L148 83M149 82L148 83M176 54L183 80M149 82H162V80H183M193 82H190V83H187M183 80H185V83H187M230 76L249 74M231 47L251 56M251 56L250.7 60.7L249.2 65.2L250.8 70.0L249 74M251 102L259 84M249 74L251.8 78.3L256.5 80.0L259 84M253 112L269 120M273 118L269 120M273 118L284 96M284 96L284 92M284 92L268 83M259 84L268 83M284 96L287.5 98.8L290.8 101.9L295.2 103.4L299.1 105.7L302 109M284 92L287.0 89.8L290.5 87.3L293.4 84.0L297 82M309 83L297 82M309 83L311.1 86.9L312.3 91.0L313.3 95.1L313.8 99.4L315 103M315 103L311.1 105.5L306.3 106.0L302 109M273 118L277.0 119.2L280.6 121.6L284.9 122.2L288.9 123.4L292.9 124.9L297 126M302 109L297 126M291 146L301 135M291 146L286.5 147.3L281.4 147.4L276 148M269 120L267 140M276 148L267 140M297 126L301 135M306 -0L305.8 4.1L307.2 8.3L307.8 12.5L308 17M308 17L311.7 15.7L316.1 17.0L320.3 15.7L324.6 15.8L328.8 15.0L333.1 16.1L337 15M334 -8L335.2 -4.0L335.3 0.2L338.1 3.7L339.6 7.5L340 12M340 12L337 15M357 13L358.8 8.6L361.1 5.2L363.2 1.6L366.9 -1.0L368 -5M357 13L353.0 11.5L348.5 12.7L344.2 11.0L340 12M251 283H247V279H245M251 283V295H250V313M215 315H232V317H246M215 315L214.4 310.6L216.8 306.4L217.9 301.9L216.6 297.1L217.6 292.6L218.8 288.2L220 284M245 279H238V284H220M244 253V244H234V241M244 253V264H245V279M234 241L229.9 242.1L225.6 240.9L221.3 241.3L217 243M211 278V262H210V248M211 278H215V284H220M217 243H213V248H210M182 187H190V186H208M182 187V198H185V213M207 214H198V213H185M207 214L210.3 210.3L213.7 207.6L217.7 205.4L220 202M208 186L211.6 189.2L212.8 194.7L217.3 197.5L220 202M182 187L182 186M186 156L190.0 156.3L193.9 158.7L198.5 158.9L202.1 162.2L207.0 161.5L211.2 163.1L215 165M208 186L208.7 181.8L209.9 177.6L211.6 173.4L212.7 169.1L215 165M227 203L237 235M227 203L225 201M237 235L234 241M207 214L208.7 217.7L210.9 221.5L212.3 225.7L213.2 230.0L214.7 234.1L216.0 238.3L217 243M225 201L220 202M184 150H201V132H211M184 150V134H179V112M179 112L180 111M180 111L213 118M213 118L213.8 123.1L212.1 127.6L211 132M148 83V104H159V112M187 83L180 111M159 112H171V112H179M215 116L213 118M51 382H53V379H56M51 382H42V372H23M56 379L55.6 375.2L54.7 370.9L57.2 366.7L57.1 362.4L56.3 358.1L57.5 353.9L56.2 349.6L57 345M23 354H33V339H46M46 339L49.9 340.4L53.2 342.8L57 345M12 319H19V313H23M23 313H29V317H41M46 339V323H41V317M-9 180L-3.9 181.5L0.4 183.8L5.5 184.3L10 187M-6 222H8V213H14M10 187V205H14V213M18 151L19.6 155.0L20.6 159.1L20.7 163.4L23.1 167.2L24.0 171.3L24 176M10 187H20V176H24M117 252L115 254M117 252V236H120V216M115 254H98V248H92M92 248V229H92V217M92 217H98V211H113M113 211H116V216H120M82 251V272H83V280M82 251H86V248H92M115 276L114.3 271.9L114.3 267.3L114.8 262.7L114.2 258.1L115 254M115 276H102V285H93M93 285H89V280H83M178 779H185V771H191M212 802V787H211V781M211 781H206V771H191M228 809H236V799H248M211 781L228 769M228 769H240V778H248M248 778V788H248V799M256 842V817H257V807M257 807H253V799H248M314 775V763H323V749M314 775H326V778H346M323 749H338V742H343M354 771V763H354V749M354 771H352V778H346M354 749L343 742M376 784L354 771M377 741L373.6 742.9L369.3 743.0L365.8 745.6L361.7 746.2L357.7 747.6L354 749M344 806V793H346V778M340 715V724H343V742M319 707H315V711H311M323 749H319V743H315M315 743V722H311V711M228 769V758H221V745M191 771L192.5 766.7L193.0 761.9L194.6 757.3L193.4 752.3L195 748M195 748H203V743H218M221 745L218 743M790 288L785.4 286.1L780.3 287.0L776 285M790 288L791.3 284.5L794.3 281.5L794.4 277.1L797.7 274.2L799 270M776 285L772 267M772 267L775.6 263.9L780.4 263.1L783.7 259.6L788 258M788 258L799 270M795 299L790 288M767 293L776 285M818 272L812.9 272.0L808.2 271.9L803.5 270.7L799 270M766 266L772 267M765 239L769.1 239.4L773.3 240.4L777.0 242.9L781.3 243.7L785.6 244.1L790 246M765 239L759 255M790 246L788.5 251.9L788 258M795 240L790 246M795 240L801 239M720 631L711 621M720 631L718.1 635.7L718.6 640.7L716.0 644.9L714.7 649.4L714 654M709 621L704.5 622.4L701.6 626.0L697.4 627.6L693.9 630.3L690 633M709 621L711 621M714 654L708.9 655.0L704 655M704 655L689 637M690 633L689 637M743 631L720 631M722 607L727.9 605.3L734 606M722 607L718.6 609.5L716.8 613.7L714.1 617.3L711 621M730 665L726.6 660.9L722.5 658.5L718.4 656.0L714 654M693 598L679 602M693 598L709 621M677 615L679 602M677 615L690 633M698 591L713 590M698 591L693 598M713 590L722 607M693 670L696.6 666.5L697.9 661.9L702.1 659.4L704 655M667 648L670.7 646.5L674.9 645.6L677.8 642.2L681.3 639.8L686.0 640.0L689 637M656 632L657 627M677 615L673.4 617.7L669.4 620.0L665.9 623.2L661.6 624.8L657 627M785 506L777 506M783 481L773 491M773 491L773.4 496.4L775.8 500.9L777 506M788 538L784.4 535.5L781.8 532.0L779.1 528.6L775.5 526.0L772.3 523.0L770.7 518.6L767 516M777 506L774.6 510.0L769.6 511.7L767 516M764 548L759 542M759 542L764 517M767 516L764 517M628 617L625.0 613.4L622.9 609.6L621.6 605.1L618 602M628 617L648 605M618 602L620.9 598.9L622.8 595.2L623.4 590.8L625.7 587.4L628 584M648 605L649 602M649 602L646.4 599.5L645.0 595.5L643.2 591.9L640.7 588.7L637 586M628 584L632.6 584.4L637 586M627 627L628 617M657 627L655.4 622.6L652.8 618.6L652.2 613.8L650.1 609.7L648 605M670 595L649 602M670 595L674.1 599.3L679 602M587 534L584 529M587 534L583.7 536.5L582.5 541.1L578.3 543.0L576.3 546.8L573.5 550.0L570 553M584 529L579.1 528.1L574.4 527.5L569.8 527.8L565.1 528.9L561 528M570 553L555 543M561 528L554 534M555 543L554 534M584 517L583.9 522.8L584 529M559 512L558.2 517.5L559.2 522.5L561 528M535 517L537.8 514.0L542.3 512.9L545.4 509.6L550 508M535 528L539.9 530.1L545.2 529.9L549.4 533.0L554 534M542 556L555 543M547 489L543 487M566 467L561.5 465.9L557.7 463.4L553.6 461.5L550.1 458.4L546 457M546 457L539 462M543 487L539 462M525 508L527.0 503.8L528.8 499.5L531.2 495.4L532 491M543 487L537.7 489.4L532 491M674 413L669.7 413.9L665.2 414.5L660 414M651 404L651 405M660 414L651 405M568 152L574 146M576 179L579.6 176.5L582.8 173.1L587.4 172.1L591.6 170.4L595 167M595 167L593.2 162.2L592.3 157.2L591 152M574 146L591 152M524 65L526 69M526 69L524.3 74.1L523.9 79.0L522 83M497 76L500.5 79.5L503.4 83.3L507 86M522 83L516.9 84.4L511.9 84.3L507 86M481 107L485 108M481 107L479.8 102.1L482.5 97.7L480.6 93.0L482 88M485 108L505 101M507 86L507.5 91.0L506.1 95.8L505 101M549 142L549.8 136.8L550.3 131.9L550 127M574 146L576 129M576 129L558 122M550 127L558 122M591 152L601 143M601 143L598.2 139.3L596.5 135.0L596.6 129.8L594.2 125.7L592 122M576 129L587 121M587 121L592 122M549 51L552 57M526 69L530.1 69.9L534.3 70.9L538.2 73.2L542.9 72.3L547 75M552 57L547 75M609 182L606.3 178.3L606.1 173.5L604 169M609 182L613.1 183.5L617.4 182.5L621.2 184.7L625.4 184.7L629 185M629 185L630 165M630 165L625.8 164.6L621.7 163.5L618.0 161.5L614 160M614 160L611.1 163.3L606.8 165.4L604 169M600 195L603.0 192.8L605.0 189.2L606.2 184.9L609 182M595 167L604 169M612 146L601 143M612 146L612.7 150.7L612.6 155.3L614 160M617 213L618 233M617 213L634 203M639 206L634 203M639 206L646 226M646 226L630 238M630 238L626.0 236.2L621.9 235.1L618 233M594 210L592.4 214.3L593.7 218.8L590.9 222.5L590.9 226.7L589.8 230.7L590 235M601 207L604.7 208.5L609.0 209.5L612.7 212.1L617 213M609 240L618 233M635 191L634.5 196.9L634 203M635 191L629 185M663 206L659.2 205.7L655.0 206.5L650.9 206.2L646.8 205.8L642.6 206.3L639 206M661 232L646 226M636 252L633.1 247.9L631.4 243.1L630 238M765 239L758 227M739 239L746 227M758 227L754.3 228.7L750.1 226.3L746 227M715 222L722 216M722 216L727.0 217.1L731.9 214.8L737 216M746 227L743.4 223.2L740.4 219.4L737 216M822 200L811 189M811 189L812 179M820 175L812 179M654 43L650.4 39.8L648.5 35.5L645.4 32.3L642.6 28.9L639 26M654 43L651.2 46.7L651.1 51.6L648.1 55.1L646 59M646 59L625 48M625 48L627.9 44.8L630.0 40.9L632.5 37.3L634.6 33.4L637.7 30.2L639 26M639 26L639 26M667 41L654 43M651 12L648.7 16.0L644.8 18.5L641.8 21.8L639 26M679 57L668 65M668 65L664.4 64.3L659.9 65.5L655.7 65.2L651.6 63.7L647 63M647 63L646 59M616 16L639 26M608 29L609.2 32.8L612.1 35.9L613.4 39.8L616.6 42.6L618.0 46.6L620 50M620 50L625 48M561 31L565.0 34.0L568.0 37.2L571.8 39.6L574.2 43.4L577 46M594 33L593.1 37.4L590.8 41.2L589 45M577 46L583.3 47.0L589 45M552 57L556.2 58.0L560.2 59.6L564.4 60.6L569 60M577 46L574.5 49.3L572.2 52.6L571.3 56.9L569 60M494 212L495.5 216.5L497.5 220.7L498.1 225.3L498.7 229.9L501 234M494 212L497.5 210.3L501.3 208.7L504 206M504 206L511 206M511 206L513.6 209.2L516.5 212.4L520.5 214.2L524 217M524 217L522.9 221.0L521.5 224.9L521.7 229.1L519.6 232.7L519 237M519 237L514.4 235.1L509.8 236.4L505.7 234.8L501 234M480 212L494 212M486 250L489.9 247.7L492.8 244.2L495.0 240.1L499.3 237.9L501 234M496 175L496.2 178.6L498.2 182.3L498.7 186.4L499.4 190.4L501.9 193.9L502.4 198.0L502.9 202.1L504 206M496 175L493 174M493 174L474 190M475 208L474 190M525 187L521.5 190.8L519.6 195.2L515.6 198.1L513.2 202.1L511 206M496 175L514 168M542 214L544 207M542 214L537.5 214.1L533.0 215.7L528.3 216.4L524 217M524 247L524 248M524 247L522.0 243.9L520.0 240.4L519 237M568 219L563.6 217.9L559.2 218.4L554.8 217.6L550.2 219.5L546 218M568 219L568.9 223.8L571.8 227.4L572.9 231.7L574 236M574 236L559 246M559 246L546 234M546 218L546.6 222.2L546.0 226.3L545.1 230.4L546 234M575 208L568 219M542 214L546 218M583 238L574 236M558 254L559 246M524 247L528.5 246.1L531.1 242.4L535.6 241.6L539.0 239.1L542.5 236.6L546 234M358 124L358.3 128.4L360.6 132.3L360.5 136.8L362 141M374 114L385 130M385 130L382 138M362 141L382 138M386 235L388.6 232.0L390.5 228.1L394.6 226.1L396.2 221.9L399.8 219.5L402 216M386 235L382.8 232.0L379.5 229.0L374.9 227.5L372 224M372 224L373.0 219.3L375.5 215.4L377.6 211.3L378 207M378 207L394 207M394 207L402 216M359 193L368 194M359 193L359.1 197.5L356.3 201.0L354.8 204.9L354.3 209.1L352.5 212.9L352 217M368 194L378 207M352 217L355.0 219.8L357.0 223.9L361 226M361 226L366.5 225.7L372 224M424 280L419.7 277.4L416.3 273.6L412 272M392 306V297H389V285M389 285H404V272H412M419 245L412 252M406 216L402 216M386 235V238H387V244M387 244L412 252M412 272V266H412V252M423 204L415 184M423 204L427.4 202.1L431.8 201.1L435.7 198.5L439.8 196.7L444 196M448 178L444 196M448 178L423 176M423 176L415 184M422 207L423 204M394 207L396.4 203.6L397.2 199.5L396.2 195.0L399.1 191.4L398.2 186.9L400 183M400 183L405.0 182.8L409.9 184.2L415 184M455 210L453.0 206.4L450.6 202.7L446.3 200.4L444 196M474 190L471.5 186.0L467.6 183.7L463.5 181.6L460.2 178.4L455.2 177.8L452 174M452 174L448 178M452 174L453 169M438 151L440.9 155.1L443.7 158.9L448.0 161.5L449.6 166.3L453 169M438 151L420 157M420 157L421.3 161.7L420.6 166.6L422.2 171.2L423 176M246 346L241.7 347.7L236.7 347.7L232.4 350.2L227 351M227 351L226.5 355.3L226.9 359.9L226.5 364.5L226.5 369.1L226 374M253 349V366H255V379M255 379V381H251V384M226 374H242V384H251M215 315L212 318M227 351L214 343M212 318V327H214V343M187 282H204V278H211M187 282V291H186V314M212 318H192V314H186M115 276L122 284M147 250V265H148V284M147 250H134V252H117M122 284L125.9 285.1L130.3 283.5L134.6 283.6L139.0 283.2L143.4 284.7L148 284M13 408H18V414H20M51 382V389H47V405M47 405H38V414H20M-11 445H9V448H19M19 448L22 446M20 414L19.8 417.7L20.7 421.7L22.1 425.7L20.7 429.7L20.8 433.7L21.7 437.7L21.0 441.8L22 446M57 442L60 420M57 442H66V449H80M60 420H77V410H85M80 449H89V439H96M96 439V431H91V414M85 410H89V414H91M51 447H38V446H22M51 447H54V442H57M47 405L49.4 409.8L54.4 411.9L56.7 416.3L60 420M81 381H63V379H56M81 381V390H85V410M81 381L84 378M84 378H95V385H116M91 414H100V407H112M112 407L112.8 402.7L113.4 398.4L115.5 394.3L114.2 389.6L116 385M605 724L574 728M579 751L576 747M576 747L574 728M543 766L544 759M583 773L571 783M576 747L571.4 748.1L567.4 749.3L564.0 752.5L560.1 754.0L555.8 754.4L551.5 755.0L548.0 757.9L544 759M519 743L522.3 744.9L525.7 747.6L529.8 748.7L533.0 751.6L537.7 751.5L541 754M544 759L541 754M523 719L549 725M541 754L549 725M578 705L574 728M578 705L566 693M566 693L551 702M551 702L549.9 706.5L550.1 710.8L552.2 715.0L552.2 719.2L552 724M574 728L552 724M601 697L597.4 699.0L593.2 699.5L588.9 700.0L585.7 703.1L581.7 704.1L578 705M574 728L574 728M568 678L571.7 677.2L575.9 676.8L579.9 675.8L584.3 676.1L588.5 676.3L592 674M566 680L566.4 684.6L565.0 688.8L566 693M592 674L601 683M527 692L531.1 693.3L535.1 694.9L538.5 697.9L543.3 697.8L547.4 699.3L551 702M549 725L552 724M530 582L530 599M530 599L537 605M537 605L541.8 604.6L546.0 602.4L549.8 599.2L555 599M551 573L555 575M555 575L555.7 579.5L555.2 584.2L553.6 589.0L553.7 593.8L555 599M537 605L537.5 609.5L536.6 613.8L537.0 618.1L538 622M538 622L564 629M555 599L559.5 601.0L564 603M564 603L564 629M626 580L621.3 579.3L617.0 579.4L612.7 581.1L608.4 580.8L604.2 580.2L600 579M626 580L628 584M600 579L598 596M618 602L607 604M607 604L603.6 599.2L598 596M214 602V608H224V614M214 602H203V610H185M214 641L184 637M214 641H216V637H218M185 610V623H184V637M224 614L218 637M285 642L278 647M278 647H264V644H259M283 609L280 607M259 644L257.7 639.8L256.9 635.4L255.5 631.2L254.8 626.8L251.6 623.2L251.8 618.5L249.1 614.7L249 610M280 607H270V610H249M224 614L228.1 612.6L232.2 612.7L236.0 611.1L240.1 610.9L244.0 610.0L248 610M218 637H239V651H248M248 651L259 644M248 610L249 610M53 741L54 738M18 711L24 707M24 707H31V711H47M47 711V727H54V738M85 774L86.7 770.3L86.6 766.1L88.7 762.4L87.8 758.1L89.1 754.2L88.7 750.0L91 746M91 746L84 739M54 738H65V739H84M524 631L510 619M485 634V630H486V627M486 627L510 619M530 599L525.8 600.7L521.7 600.8L517.8 602.2L514 602M538 622L533.1 625.7L530 631M514 602L512.3 606.1L510.5 610.2L510.3 614.6L510 619M572 805L586 812M572 805L568.8 807.7L567.2 812.1L563.0 814.3L560.6 818.1L557.8 821.5L556 825M569 799L572 805M589 812L586 812M804 79L801.0 81.3L796.9 82.7L794 86M819 100L795 101M795 101L794 86M794 55L776 68M776 68L780 78M794 86L791.2 83.4L787.4 82.0L783.9 79.9L780 78M778 33L774.2 35.2L771.0 38.3L767.3 40.6L764 43M776 68L772 66M772 66L764 43M743 24L744.9 28.3L749.1 30.3L752.0 33.7L755.3 36.7L757.9 40.3L762 43M764 43L762 43M631 100L636 105M631 100L609 101M609 101L607.1 104.5L605.9 108.7L603.4 112.3L602 116M602 116L622 128M636 105L633.4 108.7L631.2 112.5L629.9 116.9L626.5 120.0L625.0 124.2L622 128M612 146L625 135M602 116L596.7 118.3L592 122M622 128L625 135M636 160L638 141M636 160L630 165M625 135L629.1 138.0L633.8 138.8L638 141M350 514H340V508H322M358 481H355V477H350M350 477H336V489H323M323 489L323.3 493.6L321.6 498.4L323.1 503.3L322 508M320 539V528H320V511M320 511L322 508M286 512V503H284V483M286 512H297V511H320M309 478H315V489H323M309 478H297V481H286M286 481L284 483M309 478V467H316V447M281 448V461H286V481M281 448L284.2 445.6L287.9 443.4L292.0 441.8L295 439M316 447H302V439H295M442 518H448V508H458M442 518H434V502H420M458 508V489H449V480M422 490L421.8 495.9L420 502M422 490H438V479H446M446 479L449 480M472 541L467.0 540.8L462.6 542.2L458.3 544.0L453.9 545.0L449 546M441 540L442 518M475 513H469V508H458M414 507L420 502M410 477V482H422V490M443 450V467H446V479M474 445L475.3 449.2L475.1 453.3L475.7 457.3L477.7 461.1L478.4 465.0L479.0 469.0L479.5 473.0L479 477M479 477H465V480H449M291 146L293.7 149.5L295.5 153.3L295.5 157.9L297.5 161.7L299 165M272 168L273.2 164.1L274.5 160.2L275.3 156.2L274.9 151.8L276 148M272 168L286 175M299 165L295.4 166.9L291.9 169.1L289.1 172.3L286 175M349 120L345.2 122.6L342.2 126.8L336.9 127.9L334 132M342 98L337.8 98.5L334.2 101.3L329.7 102.0L325.9 104.4L322 106M322 106L320.8 110.8L323.6 115.3L323.7 120.1L321.9 124.9L323 130M334 132L323 130M322 106L315 103M301 135L304.7 134.9L308.6 136.0L313 137M313 137L323 130M412 27L409.0 24.2L406.1 20.7L404.3 16.3L400.3 13.8L397.3 10.4L394.2 7.2L392 3M412 27L415.0 23.8L419.0 21.3L422.7 18.7L424.3 13.8L428 12M428 12L429 6M429 6L425.5 4.9L422.3 2.3L419.8 -1.2L416.2 -3.1L412.8 -5.2L409 -6M409 -6L392 1M392 1L392 3M438 -2L429 6M445 28L449.6 27.0L455 26M445 28L428 12M385 -5L392 1M357 13L361.4 14.8L364.2 18.2L366.6 22.0L369.8 25.1L373 28M392 3L389.8 7.6L386.8 10.9L384.0 14.2L381.2 17.6L379.5 21.8L376.8 25.3L373 28M373 28L373 28M445 28L437 44M460 53L454 55M454 55L437 44M438 151L438.9 146.9L439.1 142.1L441 138M441 138L437.6 133.6L436 129M410 150L412.8 152.4L416.9 154.0L420 157M410 150L411 137M436 129L411 137M54 110H74V117H84M89 90V102H87V114M84 117L87 114M48 142H50V146H52M52 146L83 143M84 117V131H83V143M251 56L259 51M268 83L270.5 79.2L271.1 74.7L273.7 71.1L274.2 66.5L276.9 63.0L278 59M259 51L262.9 52.3L267.2 53.1L271.2 54.5L274.6 57.2L278 59M243 29L246.9 30.4L251.6 28.7L255.9 29.7L260 31M259 51L260 31M257 3L259.8 7.2L262.9 11.0L265.2 15.2L266.1 20.1L269 24M269 24L264.1 26.7L260 31M297 82L295.0 77.9L294.4 73.8L294.5 69.6L294.0 65.6L291.7 62.0L290.9 58.1L290 54M278 59L282.4 57.9L286.3 56.7L290 54M343 97L339.4 93.9L337.0 90.2L335.2 86.1L333.3 82.1L331.9 77.8L329 75M309 83L312.2 78.7L316.4 76.0L320 73M329 75L320 73M360 66L359 64M359 64L355.0 62.7L351.9 59.2L348 57M329 75L348 57M337 15L337.5 19.3L337.6 23.4L336.4 27.5L336.2 31.7L337.4 36.0L336 40M373 28L369.9 31.2L366.2 33.4L361.6 34.0L359.1 38.1L355.2 39.9L352.1 43.0L348.3 45.0L344 47M336 40L344 47M258 184L278 200M258 184L248 204M248 204L259 219M278 200L267 220M267 220L259 219M227 203L248 204M237 235L259 219M269 223L269.2 227.6L270.2 232.2L267.8 236.8L268.1 241.5L269 246M269 223L267 220M269 246H262V253H244M150 248L176 255M150 248V241H152V219M152 219H170V218H181M181 218V226H186V244M176 255H179V244H186M178 275L176 255M178 275H166V288H153M147 250L150 248M153 288L148 284M144 211L140.3 211.4L136.6 213.7L132.4 213.6L128.3 214.0L124.2 214.5L120 216M144 211L147.5 215.3L152 219M144 211V196H148V186M185 213V215H181V218M210 248H201V244H186M187 282H181V275H178M228 152L222 163M228 152L243 147M222 163L224.3 166.3L228.2 168.8L229.7 173.0L231.5 177.0L235 180M243 147L244 147M244 147L246.6 151.0L246.9 155.8L249.1 159.7L252.8 162.7L254.0 167.1L256.4 170.8L258 175M235 180L239.2 179.7L243.6 179.7L247.9 178.8L252.2 178.4L257 179M257 179L258 175M183 151L184 150M215 165L222 163M211 132L214.4 135.3L215.9 139.7L219.6 142.2L221.9 145.9L224.1 149.7L228 152M241 124L243 147M225 201L226.7 197.1L229.5 193.2L231.3 188.8L232.8 184.2L235 180M267 140L244 147M272 168L266.8 169.3L263.3 173.4L258 175M258 184L257 179M286 197L289 193M286 197L278 200M286 175L285.7 179.3L285.9 184.0L288.5 188.2L289 193M50 179H70V183H78M50 179L49 180M49 180V191H44V207M78 183V203H79V211M44 207H53V222H60M79 211L75.1 212.1L71.2 214.2L68.1 217.7L64.1 219.8L60 222M52 146V161H50V179M24 176H38V180H49M14 213L18 215M18 215L22.3 213.7L26.8 212.6L31.1 211.3L35.0 208.5L39.5 207.4L44 207M58 246V239H60V222M58 246H73V251H82M92 217H89V211H79M248 778L252.7 774.3L257 770M254 737H244V745H221M254 737H256V744H262M257 770V760H262V744M315 743H295V744H288M291 710H300V711H311M291 710V727H282V740M282 740H284V744H288M313 776L294 769M313 776V786H312V799M312 799H293V808H285M294 769H290V777H280M280 777V797H283V806M285 808L283 806M314 775L313 776M288 744V761H294V769M319 806H316V799H312M288 835V815H285V808M257 770H271V777H280M262 744H268V740H282M257 807H271V806H283M254 737V719H250V713M218 713L222 709M218 713V723H218V743M250 713H238V709H222M214 641V660H212V671M212 671L215.5 675.0L219.5 677.4L224 679M248 651V668H244V675M244 675H229V679H224M718 583L723.2 583.2L728.1 582.1L733.0 583.4L738 582M718 583L718.3 578.1L715.2 574.2L714.6 569.5L714 565M714 565L735 559M738 582L737 560M737 560L735 559M741 585L738 582M713 590L718 583M763 560L737 560M759 542L739 538M739 538L733 543M733 543L733.1 546.8L735.2 550.6L733.4 554.8L735 559M778 465L773.2 465.5L768.7 465.7L764.1 466.7L760 466M773 491L763 486M763 486L760 466M730 438L728 443M760 438L758.3 442.0L757.3 446.1L756.6 450.3L756.5 454.7L754.1 458.5L754 463M728 443L746 465M746 465L754 463M754 463L760 466M719 448L712 465M719 448L714.6 445.3L710.7 442.2L705.9 440.6L702 438M702 438L693 441M693 441L691.7 446.1L691.8 450.7L692.0 455.4L691.7 460.1L693 465M712 465L693 465M728 443L723.2 445.5L719 448M738 474L740.2 470.8L742.9 467.6L746 465M738 474L733.4 473.6L729.7 471.7L725.5 471.4L721.8 469.3L717.5 469.7L714 467M714 467L712 465M706 424L705.7 429.0L702.3 432.8L702 438M682 423L680 434M680 434L693 441M626 578L624.2 574.2L621.3 570.8L619.7 566.6L616.6 563.3L614.1 559.8L612 556M626 578L642 551M612 556L616.2 552.2L619.3 548.1L622 544M642 551L636 546M622 544L626.9 543.9L631.6 545.0L636 546M600 558L604.1 558.2L608.1 556.3L612 556M600 558L589 535M589 535L592.7 533.5L597.0 533.3L600.9 531.3L605.1 530.6L609.2 529.6L613 528M622 544L613 528M563 439L566.8 436.0L567.9 431.5L571.6 428.6L573 425M563 439L558.2 438.5L553.1 438.9L548 441M548 441L543 434M543 434L544.2 430.1L546.8 426.7L547.9 422.5L548.7 418.3L552 415M573 425L569.2 422.6L565.9 419.4L562.5 416.5L559 413M559 413L552 415M576 463L576 454M576 454L563 439M546 457L546.9 453.0L546.2 448.8L548.1 444.9L548 441M567 395L559 413M534 399L552 415M534 432L519 447M534 432L530.1 429.4L527.7 425.1L523.8 422.0L522 418M516 418L500 442M516 418L522 418M519 447L514.1 446.0L509.0 447.0L504 446M504 446L500 442M532 462L539 462M532 462L519 447M543 434L534 432M533 399L530.5 402.6L528.3 406.3L527.1 410.7L524.4 414.1L522 418M500 407L504.6 409.3L508.3 412.7L512.0 415.9L516 418M491 439L500 442M520 472L520.4 477.2L521 483M520 472L516.3 469.0L512.3 467.0L507.6 466.6L504 464M521 483L517.2 485.7L513.0 487.3L509.1 489.5L505 491M504 464L500.2 466.6L497.7 470.0L494.7 472.9L492.9 476.9L489.5 479.4L487 483M505 491L488 486M487 483L488 486M532 491L528.0 488.2L524.5 485.3L521 483M532 462L527.3 464.4L524.4 468.9L520 472M504 446L504.6 450.7L502.7 455.2L503.5 459.7L504 464M515 509L513.1 505.4L511.6 501.4L508.6 498.2L506.0 494.9L505 491M479 477H484V483H487M481 508L488 486M624 396L621 400M634 420L651 405M634 420L629 420M621 400L629 420M601 398L605 401M621 400L617.2 399.8L613.0 401.1L608.8 400.5L605 401M583 420L603 422M583 420L579 424M579 424L588 440M603 422L607 425M607 425L601 442M588 440L592.3 440.2L596.6 441.8L601 442M584 403L583 420M605 401L605.1 405.4L605.3 409.5L603.3 413.5L602.7 417.6L603 422M573 425L579 424M576 454L588 440M629 420L624 425M624 425L619.8 423.6L615.4 423.7L611.0 425.2L607 425M609 454L626 446M609 454L607.1 449.7L604.6 445.5L601 442M626 446L625.8 442.1L626.1 437.7L623.6 433.5L624.2 429.1L624 425M609 455L609 454M521 111L527 111M521 111L503 127M527 111L532 120M532 120L524 141M515 146L524 141M515 146L502 138M502 138L503 127M485 108L503 127M505 101L509.3 103.4L513.9 105.1L517.0 108.9L521 111M541 148L536.2 147.3L532.9 143.4L527.9 143.9L524 141M550 127L532 120M515 167L513.9 162.9L515.6 158.7L516.2 154.4L514.4 150.2L515 146M547 76L561 83M547 76L534 99M534 99L534 100M534 100L538.8 99.8L543.4 100.9L548.1 102.0L552.8 103.3L558 103M561 83L563.7 87.2L564.3 91.7L566 96M566 96L562.3 100.1L558 103M547 75L547 76M569 60L573 70M573 70L571.4 73.8L566.9 76.0L564.1 79.5L561 83M522 83L525.2 87.0L526.8 92.0L530.0 95.8L534 99M527 111L534 100M558 122L557.7 117.5L557.6 112.6L558.8 107.7L558 103M576 98L587 121M576 98L566 96M490 142L471 130M490 142L488.9 147.3L486.5 151.6L485.3 156.3L484 161M484 161L479.9 161.0L475.9 159.7L471.8 160.9L467.8 160.1L464 160M464 160L462 139M471 130L468.0 132.9L464.7 135.8L462 139M475 110L471 119M475 110L481 107M471 119L471 130M502 138L498.6 140.5L493.8 140.6L490 142M493 174L491.1 168.9L487.7 164.8L484 161M453 169L457.6 167.2L459.7 162.4L464 160M441 138L445.2 138.6L449.6 137.3L453.9 138.4L458.2 138.2L462 139M698 215L702 194M722 216L716 193M716 193L711 191M711 191L702 194M809 215L804.6 213.5L800.9 210.4L797.5 206.7L792.9 205.2L789 203M811 189L807.7 191.8L804.2 194.3L799.4 194.7L796.6 198.4L792.3 199.5L789 202M789 203L789 202M795 240L780 213M789 203L785.6 205.8L782.6 209.3L780 213M758 227L761.2 223.1L764.5 219.3L768 216M780 213L776.3 213.8L772.4 215.1L768 216M716 193L720.6 190.6L726.0 190.0L731 187M709 165L711 191M709 165L712.8 165.4L717.0 164.8L721.1 165.1L725.1 167.0L729.3 166.2L733 167M733 167L731 187M737 216L737.2 212.0L738.4 208.0L741.5 204.7L741.6 200.3L744 197M731 187L744 197M812 179L807.7 177.0L803.8 174.3L799.4 172.4L796 169M789 202L787.8 197.5L785.8 193.2L783 189M796 169L794.4 172.8L791.9 176.0L790.3 179.8L786.4 182.1L784.3 185.6L783 189M595 55L592.7 58.0L592.0 62.3L589.0 65.4L587.3 69.2L585 73M595 55L613 59M616 71L613 59M616 71L613.1 74.1L610.1 77.3L607.5 80.8L604.4 83.8L601 87M585 73L588.1 76.4L590.2 80.5L592 85M601 87L592 85M589 45L595 55M573 70L585 73M620 50L613 59M632 79L636.1 77.6L639.9 76.1L643 73M632 79L628.3 76.0L623.6 75.1L619.4 73.5L616 71M647 63L643 73M631 100L632 79M609 101L606.3 95.8L603.6 91.3L601 87M576 98L579.5 95.6L583.3 93.7L586.2 90.7L588.8 87.5L592 85M389 285H381V276H375M387 244H385V254H377M377 254L377.9 258.4L375.6 262.7L375.5 267.3L375.5 271.9L375 276M361 226L358.5 230.3L358.2 234.9L355.7 238.8L355 243M377 254H365V243H355M382 318H367V311H358M375 276H367V281H356M358 311L356 281M353 352H349V346H346M346 346V332H350V317M358 311L354.3 313.9L350 317M355 243H346V249H343M343 249V264H347V278M356 281L347 278M352 217L346.4 218.0L341.1 219.0L336 218M336 218L333.1 222.2L332.1 227.0L329 231M343 249H336V243H331M329 231L331 243M286 197L289.0 200.6L292.4 203.6L293.5 208.5L297.4 211.1L300.4 214.5L303 218M269 223L273.8 224.4L278.4 224.7L283.0 225.3L287.4 227.1L292.2 226.2L296 228M303 218L303 220M296 228L303 220M374 163L378.7 161.5L382.2 158.4L385.5 155.1L390 153M374 163L377.0 167.6L378.3 172.2L380.5 176.5L382 181M382 181L386.1 180.7L390.1 181.1L394.2 182.0L398 182M398 182L399.1 177.2L397.8 172.8L397.7 168.4L399.0 163.9L399.0 159.5L398 155M390 153L398 155M368 194L382 181M400 183L398 182M410 150L405.4 150.3L402.6 154.1L398 155M385 130L403 125M382 138L384.3 141.6L385.8 145.5L386.7 149.7L390 153M411 137L403 125M214 343L210.3 344.9L207.4 348.6L203.5 350.9L198.6 351.5L194.9 354.0L192 357M192 357V348H180V345M186 314H182V317H180M180 345V327H180V317M153 288V302H156V313M180 317H166V313H156M122 284V296H119V312M119 312L122.7 312.4L126.8 311.4L130.8 312.4L134.8 313.8L138.8 313.8L143.0 311.7L147.0 313.1L151.0 312.7L155 313M156 313L155 313M79 340V332H84V318M79 340V350H90V354M90 354H105V348H122M92 314H87V318H84M92 314L96.0 316.1L100.7 314.4L104.9 316.5L109.3 316.3L114 317M114 317V328H122V348M57 345L79 340M41 317H47V303H58M58 303H64V318H84M84 378V371H90V354M58 289H74V280H83M58 289V298H58V303M93 285V296H92V314M119 312L114 317M116 385H121V379H125M122 348H124V351H126M125 379V366H126V351M155 313V337H145V346M126 351H138V346H145M180 345H164V350H152M152 350H148V346H145M571 556L560 573M571 556L574.9 557.5L578.0 560.5L581.3 563.0L585.7 563.7L588.7 566.7L593 568M560 573L563.2 575.6L567.5 576.4L571.4 577.7L574.1 581.2L578 583M578 583L581.7 580.1L585.3 577.3L588.5 573.9L593 572M593 568L593 572M570 553L571 556M555 575L560 573M600 558L596.7 560.7L594.3 564.2L593 568M589 535L587 534M564 603L569.2 602.7L573.7 601.2L578 599M578 599L577.7 593.3L577.4 588.0L578 583M600 579L593 572M578 599L581 600M598 596L581 600M626 580L626 578M588 620L593.5 620.2L598 622M588 620L568 634M605 630L598 622M605 630L603.9 635.0L601.9 639.1L601.6 643.8L599 648M592 652L599 648M592 652L588.3 651.1L584.8 648.3L580.6 647.3L576.5 645.9L572.2 645.2L569 643M569 643L568 634M607 604L598 622M581 600L588 620M564 629L568 634M626 628L621.7 628.0L617.4 628.3L613.2 629.3L609.0 630.7L605 630M625 658L599 648M592 674L593.0 669.9L593.3 665.5L593.6 661.1L592.9 656.7L592 652M564 648L569 643M152 482V494H153V508M152 482H126V477H116M119 509H134V512H150M119 509V493H115V478M150 512V511H153V508M116 477L115 478M180 540H169V544H154M180 540V518H183V510M183 510L178.7 510.5L174.5 509.9L170.3 510.3L166.1 509.6L161.9 509.0L157.7 507.8L153 508M151 541L151.0 536.5L149.2 532.4L151.0 528.2L151.6 524.1L150.8 520.0L149.7 515.8L150 512M151 541H152V544H154M213 579V576H216V575M213 579V594H214V602M216 575L248 574M248 610V600H249V575M248 574L249 575M280 607V598H281V577M249 575H258V577H281M316 579H304V571H287M287 571V576H281V577M319 540H306V544H285M287 571V558H285V544M286 512L284 515M284 515V524H283V541M285 544V543H283V541M195 748L190.7 745.6L187.8 740.9L183 738M218 713H203V708H190M183 738V721H190V708M163 774L163.5 770.3L161.1 766.7L161.2 762.5L160.4 758.6L159.3 754.6L158.8 750.6L156.9 746.9L157 743M183 738H171V743H157M478 608V599H477V577M478 608L478 608M478 608H487V596H505M505 596L503 577M503 577H496V572H483M483 572H479V577H477M449 607H467V608H478M449 575H462V577H477M486 627V620H478V608M514 602L509.1 598.7L505 596M516 568L510.8 569.9L507.0 573.5L503 577M481 547V558H483V572M794 104L790.1 104.9L786.2 106.9L782.0 107.3L777.6 107.2L774 109M794 104L795.6 107.6L798.0 111.2L799.7 115.1L801.4 119.1L802 123M802 123L800.5 127.2L797.5 130.2L794.0 132.7L791 136M791 136L787.5 133.3L784.1 131.0L780.9 128.3L778.2 125.1L774.2 123.5L771 121M771 121L773.4 114.9L774 109M795 101L794 104M780 78L778.2 82.4L773.5 84.4L770.7 88.1L767.8 91.7L766 96M766 100L766 96M766 100L770.0 104.3L774 109M817 125L812.4 123.5L807.3 124.3L802 123M737 28L735.5 33.5L732 39M762 43L757.6 44.8L755.5 49.2L752.0 51.9L747.8 53.7L744.7 56.9L741 59M741 59L739.4 55.2L737.2 51.3L735.2 47.2L734.7 42.5L732 39M701 39L705.5 41.3L710.1 42.4L714 45M714 45L718.8 44.2L723.4 42.7L728.1 41.3L732 39M739 87L741.7 83.4L743.8 79.4L748 77M739 87L714 86M740 63L735.4 62.7L730.8 63.6L726.1 64.9L721 64M740 63L742.9 66.9L744.3 71.7L748 75M748 75L748 77M721 64L712 75M712 75L712.3 80.6L714 86M741 59L740 63M714 45L721 64M772 66L748 75M766 96L748 77M688 57L693 65M693 65L696.7 66.4L700.8 67.9L703.8 71.8L708.6 72.0L712 75M713 88L714 86M713 88L718 111M718 111L723 112M739 87L740 104M723 112L726.8 109.6L730.9 107.1L736.0 106.9L740 104M766 100L761.6 100.5L757.6 102.8L753.3 103.9L749.3 105.8L745 107M745 107L740 104M636 105L637 105M638 141L647 137M647 137L646.9 132.3L648.3 127.6L649.8 122.9L649 118M637 105L649 118M281 448H272V444H261M284 483H275V482H260M251 453L249.9 457.2L250.0 461.8L250.3 466.4L250 471M251 453H256V444H261M250 471V474H260V482M284 515H268V508H250M260 482V501H250V508M258 413H266V409H283M258 413V434H261V444M295 439V430H292V413M283 409L292 413M255 379H274V376H282M258 413H255V407H250M251 384V392H250V407M283 409V393H282V376M281 343H286V351H288M288 351V363H288V370M282 376H286V370H288M350 477V463H343V447M316 447L321.1 445.1L326 443M326 443H339V447H343M383 445H367V442H351M378 406H369V411H356M351 442L356 411M351 442H349V447H343M318 170L338 192M318 170L316 171M316 171L309 188M309 188L317 203M317 203L321.0 202.3L325.1 203.2L329 203M338 192L335.7 196.1L331.9 199.3L329 203M299 165L316 171M323 164L313 137M323 164L318 170M289 193L292.6 191.5L296.9 192.0L300.8 190.8L304.6 188.9L309 188M303 218L317 203M336 218L334.8 214.3L332.6 210.8L331.3 206.9L329 203M329 231L303 220M359 193L353 188M353 188L348.1 190.0L343.1 191.5L338 192M341 146L337.7 149.1L336.3 153.3L334.9 157.6L332 161M341 146L359 146M332 161L336.7 162.1L340.4 165.3L344.5 167.7L349.3 168.7L353 172M359 146L363 161M353 172L363 161M323 164L332 161M334 132L341 146M362 141L359 146M353 188L353.9 184.0L353.0 180.0L351.8 175.9L353 172M374 163L363 161M380 37L380.7 42.6L379 48M380 37L384.7 35.4L389.0 34.8L393.4 35.9L397.6 34.4L402.0 34.9L406.3 35.0L411 35M379 48L397 69M397 69L416 45M411 35L414.2 39.1L416 45M359 64L362.6 62.0L365.3 58.4L369.9 57.3L372.9 54.2L376.2 51.4L379 48M373 28L377.5 31.9L380 37M348 57L344 47M412 27L411 35M376 77L380.2 76.9L383.9 73.8L388.3 73.0L392.4 71.4L397 70M397 70L397 69M437 44L422 47M422 47L416 45M471 119L466.5 118.0L462.5 117.6L458.4 117.8L454.4 117.0L450.2 118.7L446.2 117.0L442.1 118.7L438 117M436 129L437.0 123.2L438 118M438 117L438 118M475 110L450 91M438 117L450 91M469 77L448 86M448 86L450 91M454 55L450.9 58.5L449.8 63.2L446.6 66.7L444.6 71.0L442.0 74.9L439 79M448 86L439 79M422 47L423.3 50.9L423.5 55.3L425.7 58.9L426.9 62.9L427.7 67.0L430.0 70.5L431.6 74.3L433 78M439 79L433 78M120 146L86 146M120 146L120.0 149.9L119.9 154.3L119.1 158.7L120.3 163.1L119.8 167.5L119.2 171.8L118 176M86 146L86.8 149.5L85.1 153.5L84.5 157.5L85.9 161.6L85.1 165.6L84.5 169.6L86.5 173.6L85 178M85 178H92V183H109M109 183H113V176H118M83 143L86 146M78 183H82V178H85M113 211V201H109V183M148 185L143.4 183.5L139.2 182.4L134.9 181.6L130.9 179.9L127.0 177.6L122.3 178.2L118 176M121 145L121.7 140.5L120.8 135.9L119.8 131.3L120.8 126.7L121.0 122.1L120 118M121 145H131V147H150M150 147L149.9 142.7L152.2 138.8L151.2 134.6L153.3 130.8L153.0 126.7L153.4 122.6L153 119M153 119H137V113H123M123 113V115H120V118M87 114L90.7 114.9L95.0 113.8L99.0 116.1L103.4 114.6L107.5 115.1L111.6 116.0L115.8 116.8L120 118M120 146L121 145M154 150H151V147H150M159 112V116H153V119M124 85V92H123V113M286 -7L285.0 -3.3L285.4 1.1L283.8 5.0L282.4 9.0L282.5 13.3L281 17M269 24L271 24M281 17L276.0 20.5L271 24M308 17L305 20M281 17L284.9 17.9L288.9 18.9L293.0 19.4L297.0 19.8L301.0 20.8L305 20M28 241L15 251M28 241H38V250H52M15 251L15.5 254.9L15.9 259.0L14.7 263.2L16.2 267.3L15.6 271.5L17.4 275.5L17 280M52 250V267H47V273M47 273H31V281H19M19 281L17 280M18 215V227H28V241M-7 246H4V251H15M58 246H55V250H52M-2 281H10V280H17M58 289V284H47V273M23 313V291H19V281M251 711L252.3 706.8L252.8 702.5L251.0 698.2L251.7 694.0L253.2 689.8L252.2 685.5L252 681M251 711H276V706H287M252 681H268V679H277M287 706V700H284V685M277 679H281V685H284M250 713L251 711M222 709V702H224V679M244 675L248.3 677.8L252 681M291 710V707H287V706M278 647V668H277V679M313 671L284 685M764 517L760 515M763 486L746 495M760 515L746 495M739 538L742 522M760 515L755.0 516.4L750.6 517.8L747.0 521.5L742 522M738 474L738 493M738 493L746 495M637 586L641.7 583.6L646.2 581.4L650.4 578.7L654 575M642 551L646 552M646 552L648.3 556.5L650.3 560.9L651.0 565.7L652.7 570.1L654 575M670 595L668 579M654 575L658.2 576.9L663.3 576.8L668 579M698 591L692 572M692 572L688.0 572.9L683.9 574.2L679.6 574.4L675.3 574.1L671 575M668 579L671 575M634 420L655 439M626 446L641 453M641 453L655 439M680 434L666 442M660 414L660.2 418.5L660.0 422.7L658.4 426.6L658.1 430.8L657.7 435.0L656 439M666 442L661.1 439.9L656 439M656 439L655 439M636 546L643 519M613 528L615.1 522.1L617 517M643 519L617 517M610 504L613 507M613 507L615.2 511.6L617 517M681 158L690 164M681 158L666 163M690 164L688 189M666 163L660 170M659 179L673 196M659 179L660 170M673 196L688 189M706 134L712 142M706 134L702.3 134.4L698.1 134.3L694 133M712 142L710.3 146.0L709.1 149.9L708.1 153.9L706.6 157.7L705 162M694 133L681 146M681 146L679.9 149.7L679.9 154.0L681 158M705 162L690 164M652 139L656.4 137.0L661.2 136.8L665.4 134.5L670 133M652 139L666 163M670 133L673.5 135.0L674.9 139.6L678.2 142.5L681 146M709 165L705 162M702 194L688 189M636 160L639.8 162.7L644.2 163.4L648.7 163.9L652.4 166.5L656.8 167.3L660 170M652 139L647 137M635 191L638.2 188.3L642.9 187.5L646.5 184.4L651.5 184.2L655.2 181.3L659 179M673 198L673 196M770 149L774.5 147.7L778.6 146.0L782.2 142.9L786.9 142.5L791 140M770 149L772.1 153.6L774.1 158.4L775 164M775 164L795 165M791 140L794.6 143.8L795.3 149.3L799 153M799 153L798.5 157.1L796.3 160.9L795 165M820 149L799 153M791 136L791 140M796 169L795 165M775 186L769 170M775 186L754 194M754 194L754 194M754 194L752.7 189.8L752.8 185.8L753.3 181.7L754.1 177.7L753.3 173.7L753 170M753 170L757.0 168.6L761.0 169.7L765.1 170.4L769 170M783 189L775 186M775 164L769 170M768 216L767.1 211.7L763.5 208.8L762.2 204.5L760.0 200.7L755.7 198.3L754 194M744 197L754 194M350 317H333V306H324M347 278H337V285H329M329 285L329.0 289.8L327.5 293.9L324.7 297.6L324.6 302.1L324 306M280 321V316H291V308M288 351H298V343H320M320 343L319.3 339.0L319.9 334.5L319.3 330.2L318.1 325.9L318.2 321.4L317.3 317.1L316 313M291 308H304V313H316M346 346H337V344H321M321 344L320 343M316 313H321V306H324M226 374H218V385H209M192 357V363H189V376M209 385H203V376H189M96 439H103V445H120M112 407H120V419H124M124 419V434H120V445M87 479L92.0 478.3L96.7 478.9L101.4 479.5L106.0 478.6L110.7 478.0L115 478M87 479V470H80V449M116 477V466H121V448M121 448L120 445M152 482V480H155V479M155 479V466H143V447M121 448H133V447H143M176 445L171.4 444.8L167.5 442.5L163.2 441.6L159.3 439.4L155 439M176 445V456H174V472M174 472H164V479H155M143 447H151V439H155M47 711H49V707H52M84 739L85.7 734.4L85.0 729.9L86.8 725.7L86.9 721.4L86.9 717.0L87 713M87 713L52 707M125 770V764H127V753M157 743L151 739M151 739H137V753H127M91 746H99V743H111M127 753H122V743H111M188 705H176V708H155M188 705L188 679M184 676H186V679H188M184 676L180.1 676.1L175.9 675.4L171.7 675.6L167.5 677.0L163.3 677.1L159.1 676.4L155 677M155 677V699H155V708M190 708L188 705M151 739L149.5 735.1L150.0 730.4L148.1 726.3L147.3 722.0L146 718M146 718V714H155V708M212 671L208.2 672.2L204.0 673.1L200.7 676.5L196.0 676.1L192.3 678.5L188 679M179 641H183V637H184M179 641V655H184V676M151 541H138V544H121M119 509V511H113V516M113 516V523H114V539M121 544L114 539M87 479L85 481M113 516H97V510H83M85 481V492H83V510M179 641L175.0 641.5L170.8 641.4L166.6 640.8L162.4 640.1L158 641M146 670V658H147V649M146 670H149V677H155M158 641H153V649H147M176 603H166V608H152M176 603V595H180V577M180 577H172V568H155M152 608L149 606M149 606V590H149V574M155 568H151V574H149M185 610H179V603H176M158 641V625H152V608M213 579H194V573H185M185 573H182V577H180M185 573V555H187V545M187 545H182V540H180M154 544V558H155V568M122 610L126.5 609.5L131.0 608.3L135.4 606.9L140.1 607.6L144.5 606.4L149 606M122 610L123.4 613.6L122.8 617.9L123.2 622.0L124.0 626.1L123.9 630.3L124.5 634.4L126 638M126 638H135V649H147M118 607V592H114V583M118 607H121V610H122M124 573H120V583H114M124 573H132V574H149M124 573L125.1 569.0L123.3 564.9L122.7 560.7L122.3 556.5L121.0 552.4L122.1 548.0L121 544M24 707L23.4 702.5L23.1 698.0L23.9 693.5L21.9 689.1L22.5 684.6L21.9 680.1L22 676M-9 672H3V674H20M22 676L20 674M52 707V690H62V679M62 679V674H52V668M22 676L26.3 675.5L30.2 672.7L34.9 672.8L39.3 671.8L43.2 668.8L48.1 669.9L52 668M730 141L735 133M730 141L731.9 145.5L733.6 149.8L735.7 154.0L736.9 158.5L740 162M735 133L751 129M740 162L745 163M745 163L748.1 158.6L751.3 155.1L753.8 150.9L758.0 148.2L761 144M761 144L757 131M757 131L751 129M706 134L708.1 130.3L708.3 125.9L711.3 122.3L713.1 118.4L713 114M712 142L716.2 142.3L720.8 140.8L725.4 142.5L730 141M713 114L718 111M723 112L735 133M733 167L740 162M745 107L745.4 111.5L747.5 115.6L748.0 120.1L750.3 124.2L751 129M753 170L745 163M770 149L761 144M771 121L767.9 123.4L765.1 126.8L761.6 129.4L757 131M670 133L673 121M694 133L686 120M673 121L677.3 120.8L681.6 120.6L686 120M649 118L666 113M673 121L666 113M713 114L709.0 114.0L704.9 111.7L700.7 110.5L696.0 111.7L692 110M686 120L689.2 114.9L692 110M713 88L687 95M692 110L687 95M283 541H272V542H251M250 508L248 509M248 509V521H251V542M187 545H196V540H215M216 575V566H216V541M215 540L216 541M248 574V565H251V542M216 541H236V542H251M251 542L251 542M187 507L186.8 502.8L188.1 498.7L188.8 494.5L189.0 490.3L189.5 486.1L189 482M187 507H196V516H213M213 516L216.4 513.6L218.5 509.9L222.4 507.9L225 505M225 505V488H222V481M189 482H202V473H211M211 473L213.7 476.3L217.5 479.3L222 481M183 510H186V507H187M174 472H180V482H189M215 540V530H213V516M248 509L243.1 509.1L239.0 506.4L234.1 507.6L229.7 506.3L225 505M250 471H230V481H222M319 383H317V386H316M319 383H335V379H344M316 386L315.2 389.8L314.8 393.9L313.0 397.8L314 402M344 379L344.6 383.3L346.5 387.2L345.9 391.6L346.9 395.6L348.4 399.5L350.8 403.3L351 408M351 408L346.2 408.2L342.0 409.9L337.4 408.5L333.2 410.6L328.7 410.0L324 411M314 402H320V411H324M321 344V370H319V383M288 370L290.9 372.3L294.1 374.7L298.6 375.0L302.2 376.7L305.0 380.1L308.6 381.8L312.5 383.1L316 386M352 370V375H344V379M292 413H303V402H314M356 411H352V408H351M326 443V426H324V411M424 109L425.0 104.8L422.8 100.6L422.8 96.4L424.0 92.1L423.5 87.9L423 84M424 109L405 114M396 101L405 114M396 101L397.1 96.7L399.6 93.3L401.7 89.8L402.3 85.5L405 82M405 82L409.5 82.4L414.1 82.5L418.7 83.8L423 84M438 118L424 109M433 78L427.7 79.9L423 84M403 125L405 114M377 103L396 101M397 70L405 82M306 30L290 48M306 30L326 43M326 43L322.8 46.7L319.1 49.9L316.8 54.3L314 58M314 58L290 53M290 53L290 48M271 24L273.5 27.9L277.2 30.6L278.9 34.9L281.9 38.1L285.8 40.6L287.6 44.8L290 48M305 20L306 30M336 40L330.5 40.3L326 43M320 73L314 58M290 54L290 53M714 565L709 562M692 572L695 567M709 562L695 567M714 467L712 487M738 493L731 498M712 487L716.4 488.0L719.9 490.6L723.1 493.7L727.6 494.5L731 498M742 522L726 510M731 498L726 510M670 556L651 551M670 556L683 547M683 547L684 542M684 542L662 532M651 551L662 532M646 552L651 551M671 575L670.1 570.2L670.0 565.6L671.4 561.0L670 556M695 567L683 547M709 562L709.4 557.8L708.2 553.3L709.1 548.9L709.8 544.5L709.8 540.1L710 536M684 542L693 533M693 533L710 536M733 543L728.9 541.2L725.1 539.0L721.1 537.3L717.4 534.8L713 534M726 510L720 514M720 514L718.4 518.2L716.7 522.1L716.7 526.5L715.0 530.4L713 534M713 534L710 536M642 464L651 473M642 464L637.9 465.3L634.6 468.5L630.0 469.5L626.4 472.2L623 475M651 473L649.6 477.3L647.3 481.4L644.7 485.4L642.6 489.5L642 494M623 475L632 493M632 493L642 494M619 474L623 475M641 453L642.6 458.4L642 464M613 507L632 493M666 442L667.6 445.6L668.0 450.0L671.2 453.3L672 458M651 473L660 474M660 474L662.1 468.9L666.3 465.8L669.4 462.0L672 458M693 465L692 465M692 465L688.4 463.0L684.4 461.2L679.7 461.3L675.4 460.1L672 458M643 519L645 517M642 494L646 500M645 517L646.5 513.0L645.7 508.6L646.3 504.3L646 500M662 532L660 523M645 517L650.1 519.3L654.9 521.2L660 523M316 276H305V282H284M316 276V266H315V252M297 247L302.2 247.0L306.5 248.9L310.6 251.5L315 252M297 247L294.1 249.3L291.2 252.7L286.8 254.1L284 257M284 257V270H282V280M282 280L284 282M329 285L324.9 282.3L320.3 279.7L316 276M291 308V293H284V282M331 243H321V252H315M296 228L297 247M269 246L272.0 249.4L276.0 251.9L280.2 254.1L284 257M251 283H267V280H282M225 415H222V408H217M225 415V433H222V441M217 408H203V419H186M212 449H219V441H222M212 449L207.6 448.1L204.0 446.0L200.3 444.1L196.6 442.4L192.1 442.5L188.6 440.3L185 439M185 439V425H186V419M250 407L245.8 408.3L241.3 408.4L237.2 409.8L233.1 411.1L229.4 413.9L225 415M209 385V402H217V408M251 453H229V441H222M211 473V460H212V449M176 445H182V439H185M162 375H156V389H145M162 375L167.0 375.6L171.6 376.8L176.2 377.7L180.9 377.8L186 378M186 378V391H177V408M177 408L172.3 408.4L168.1 410.0L163.7 409.1L159.3 408.7L155.0 409.0L151 410M145 389L146.4 393.2L147.5 397.0L148.8 400.8L149.7 404.8L149 409M149 409L151 410M125 379L129.5 380.8L132.9 383.9L137.1 385.4L141.0 387.3L145 389M152 350V361H162V375M189 376L186 378M186 419L183.6 414.6L179.5 412.0L177 408M155 439V423H151V410M124 419L128.2 416.3L132.7 415.3L136.6 413.1L141.0 411.9L145.2 410.5L149 409M118 607H98V616H90M90 616V634H90V640M126 638H118V649H108M108 649H95V640H90M62 679L67.0 679.4L71.7 677.6L76.5 679.8L81 679M52 668V659H54V645M54 645L58.3 646.1L62.6 644.2L67.0 643.7L71.4 644.1L75.7 643.8L80.1 644.6L85 644M85 644V655H81V679M114 583H99V574H93M114 539L109.6 540.5L105.5 542.0L101.9 544.4L98.1 546.5L94 548M93 574L94 548M668 104L671.9 103.2L674.3 98.9L678.2 97.3L682.3 96.0L686 94M668 104L663.8 100.6L659.4 97.5L657 93M657 88L669 80M657 88L657 93M669 80L672.6 82.4L675.7 85.3L679.7 86.8L684 88M684 88L686 94M666 113L668 104M687 95L686 94M637 105L641.9 103.8L645.6 101.1L648.3 96.9L652.5 94.9L657 93M668 65L667.5 70.5L670.0 75.3L669 80M643 73L646.6 75.3L649.6 78.2L652.3 81.2L653.7 85.6L657 88M693 65L690.0 68.3L689.5 72.5L688.3 76.5L686.9 80.4L684.2 83.9L684 88M699 494L698 502M699 494L696.4 490.2L693.7 486.1L689.9 482.8L688 478M698 502L694.6 504.4L691.1 506.6L688.3 509.8L685 512M688 478L684.1 481.3L679.8 482.9L675.6 484.7L671 486M685 512L677 510M677 510L669 496M671 486L669 496M712 487L708.0 489.5L703.9 492.4L699 494M720 514L698 502M692 465L688 478M693 533L690.6 529.3L690.5 524.4L689.2 519.9L686.7 515.9L685 512M660 474L671 486M660 523L663.5 520.4L666.8 517.4L671.0 515.7L674.5 513.1L677 510M646 500L669 496M92 708V688H84V680M92 708H111V709H119M84 680H99V671H110M119 709L121 707M121 707V689H123V680M123 680H117V671H110M87 713V711H92V708M81 679L84 680M111 743L119 709M108 649L109.5 653.7L110.5 658.1L110.2 662.6L109.4 667.1L110 671M90 640H87V644H85M146 718L142.7 714.9L137.7 715.3L133.6 713.3L129.8 710.7L125.5 709.4L121 707M146 670H133V680H123M90 616L80 610M93 574H84V583H78M80 610V599H78V583M51 447V455H54V480M85 481L55 481M54 480L55 481M21 610V626H20V643M21 610L44 612M54 645L49.4 644.3L45.2 643.6L41.0 643.5L36.8 643.1L32.5 643.9L28.4 642.9L24.1 643.2L20 644M54 645L52 618M20 644L20 643M52 618H47V612H44M20 674V660H20V644M54 645L54 645M80 610H68V618H52M20 643H8V644H-13M83 510L80 513M55 481L53 516M53 516H70V513H80M94 548H89V544H85M80 513V529H85V544M19 448V466H18V478M54 480L50.0 481.3L45.8 479.9L41.8 480.8L37.7 481.6L33.8 483.1L29.7 483.2L25.5 482.3L21 483M18 478L21 483M-7 573L-2.8 575.4L0.9 578.0L5.8 578.4L8.5 582.7L13.0 583.7L17 586M-7 614H3V608H19M19 608V600H17V586M21 610L19 608M44 612V588H56V575M17 586V581H29V574M29 574H41V575H56M78 583H68V574H57M57 574L56 575M85 544H71V549H59M57 574V564H59V549M18 478H7V482H-9M53 516L51 517M59 549V545H48V536M51 517L48 536M21 483L20.5 488.1L20.3 493.1L22.4 498.1L21 503M51 517L47.4 515.9L43.7 513.8L40.4 511.2L36.1 510.5L32.9 507.5L29.2 505.7L24.6 505.7L21 503M29 574L29.0 569.2L27.2 565.3L26.5 561.0L23.3 557.4L22.3 553.2L21.4 549.0L21 545M48 536H35V545H21M9 514V528H20V544M9 514H3V513H-15M-3 553H5V544H20M21 503L17.4 504.9L14.5 507.8L11.7 510.7L9 514M21 545L20 544"/>
<g fill="#2b4564" stroke="none">
<path d="M299.3 59.8L306.4 55.4L312.5 58L315.1 66.8L323.1 71.2L318.7 75.6L320.4 84.4L323.9 93.1L322.2 96.7L317.8 87.9L314.3 79.1L313.4 70.3L309 65L306.4 59.8L302 62.4Z"/>
<path d="M123 658.3L126.5 653L131.8 652.1L136.2 655.7L136.2 661.8L132.7 667.1L127.4 668.8L123 666.2L122.1 661.8Z"/>
<path d="M604.1 307.5L609.4 304.8L614.7 300.4L612.9 293.4L613.8 286.4L616.4 289.9L619.1 286.4L621.7 287.2L622.6 292.5L627 293.4L623.4 297.8L619.1 301.3L616.4 306.6L611.1 311L607.6 312.7L605 311Z"/>
<path d="M526.8 502.2L530.3 507.5L533.8 504L530.3 516.3L529.4 525.1L536.4 525.9L532.9 530.3L534.7 537L527.7 537L525.9 530.3L527.7 525.1L525 518L527.7 511Z"/>
<path d="M525.9 530L530.3 530L534.7 533.5L532.9 538.8L529.4 535.3Z"/>
<path d="M540.8 602.1L543.5 607.3L544.4 612.6L551.4 612.6L554.9 603.8L557.5 603.8L555.8 611.7L563.7 610.8L563.7 613.5L554.9 616.1L547.9 619.6L541.7 617L541.2 610.8Z"/>
<path d="M438.1 377.3L439.8 372.1L444.2 367.7L446.9 363.3L451.3 365.9L447.8 370.3L444.2 373.8L443.4 377.3Z"/>
<path d="M424 413.4L426.7 416L427.5 423L431.1 428.3L431.9 433.6L428.4 433.6L425.8 426.5L424 419.5Z"/>
<path d="M367.9 261.4L371.4 258.7L375.8 258.7L381.9 264L389 267.5L394.2 272.8L396 277.2L389 272.8L381.9 268.4L375.8 264L370.5 262.2Z"/>
</g>
<g fill="none" stroke="#7f6c0e" stroke-width="1" stroke-linejoin="round">
<path d="M181.7 6.2L191.4 17.6L198.4 35.1L200.2 43.9L200.2 70.3L200.2 91.4L195.8 103.7L187.9 112.5L187 126.5L182.6 142M240.6 6.2L230.1 17.6L228.3 35.1L225.7 56.2L214.2 67.7L201.1 71.2M240.6 6.2L248.5 17.6L259.1 33.4L263.4 51L272.2 59.8L288 61.5L295.1 56.2L300 54.5M280 60.6L288.8 61.5L297.6 54.5L306.4 52.7L315.1 57.1L325.7 65L339.8 75.6L353.8 86.1L367.9 96.7L370.5 99.3M473.3 6.2L472.4 22.8L468 40.4L462.8 49.2L454 55.4L434.7 59.8L428.5 77.3L420.6 91.4L417.1 99.3M588.3 6.2L586.5 21.1L593.6 36.9L603.2 43.9L604.1 59.8L599.7 77.3L604.1 94.9L590.9 110.7L596.2 123L609.4 138.8M473.2 6.2L472.3 21.1L467.9 40.4L460 51M658.7 142L672.7 133.6L690.3 124.8L711.4 114.2L729 103.7L743 95.8L758.8 87L771.1 80.8L787 77.3L806.3 71.2M6.2 257.4L35.1 255.7L52.7 253.9L70.3 249.5L91.4 242.5L112.5 234.6L126.5 227.5L137.1 224.9L151.1 224L160.8 225.8M184.5 130L183.7 138.8L175.7 149.3L174.9 156.4L163.4 175.7L154.7 189.8L149.4 200.3L145 205.6L147.6 214.4L151.1 223.1M175.7 224L186.3 216.1L200 208.2M160.8 225.8L160.8 231.1L174 231.1L175.7 225.8L172.2 221.4L164.3 221.4L160.8 225.8M164.3 231.1L167 244.2L168.7 258.3L169.6 272M167.8 260L169.6 274.1L173.1 288.1L171.4 309.2L175.7 326.8L177.5 344.4L181.9 361.9L183.7 379.5L181.9 391.8L177.5 402M6.2 460.9L21.1 461.8L52.7 465.3L73.8 468.8L89.6 475.8L100.2 475.8L112.5 473.2L130.1 473.2L138.8 474.1L147.6 479.4L152.9 481.1L168.7 480.2L186.3 479.4L200 475.8M180.1 395L174 409.1L165.2 424.9L160.8 437.2L159.9 453L154.7 468.8L152.9 481.1L145.9 493.4L138.8 504L135.3 516.3L132.7 537M152.9 468.8L146.7 475.8L147.6 479.4M132.7 530L130.1 547.6L130.1 573.9L128.3 595L126.5 617.9L127.4 631.9L130.1 640.7L134.4 649.5L136.2 658.3M6.2 660.9L15.8 660.1L31.6 653L49.2 647.8L66.8 643.4L77.3 644.2L86.1 646.9L93.1 644.2L105.4 641.6L130.1 640.7L147.6 640.7L158.2 644.2L168.7 649.5L177.5 653.9L186.3 655.7L200 655.7M86.1 646.9L91.4 656.5L98.4 665.3L109 672M6.2 616.1L11.4 623.1L14.1 635.4L11.4 646L15.8 660.1M200 624.9L191.6 635.4L187.2 646L185.4 655.7L182.8 663.6L175.7 672M180 220.5L197.6 210L215.1 198.5L222.2 189.8L241.5 182.7L267.9 173.9L292.5 166L313.6 160.8L334.7 159.9L355.7 150.2L368 146.7L380 144.9M365.4 130L366.3 140.5L371.6 151.1L380 159M460 198.5L470.5 212.6L481.1 228.4L486.4 233.7L502.2 239L511 235.4L522.4 237.2L535.6 226.7L547.9 216.1L555.8 207.3L565.4 195L576 181L590.1 163.4L593.6 159.9L614.7 151.1L621.7 146.7L635.7 149.3L646.3 149.3L660 141.4M482.8 138.8L491.6 137L516.2 137L521.5 142.3L535.6 150.2L549.6 158.1L560.2 158.1L572.5 159L583 161.6L593.6 159.9M602.4 130L609.4 137L613.8 147.6L621.7 146.7M503.9 239L497.8 253L495.1 265.3L491.6 272M522.4 237.2L528.5 246L535.6 249.5L537.3 263.6L537.3 272M620 146.7L630.5 148.5L642.8 150.2L658.7 143.2L669.2 135.3L679.8 130.9M658.7 143.2L671 152.8L673.6 165.1L683.3 172.2L686.8 182.7L692.1 188.9L702.6 190.6L715.8 188.9L739.5 182.7L760.6 181L769.4 176.6L795.7 173.1L806.3 175.7M715.8 188.9L721.9 200.3L734.2 216.1L744.8 216.1L757.1 231.9L760.6 242.5L764.1 256.5L765.9 272M714.9 272L725.4 258.3L739.5 253L753.6 244.2L760.6 240.7L778.2 231.9L795.7 225.8L806.3 222.3M739.5 253L741.3 261.8L750.1 268.8L753.6 272M620 320.6L637.6 312.7L655.1 300.4L672.7 289.9L690.3 281.1L704.4 276.7L718.4 269.7L725.4 260M620 361.1L637.6 362.8L663.9 368.1L690.3 369L707.9 371.6L729 370.7L750.1 373.4L758.8 369L771.1 362.8L787 356.7L799.3 346.1L806.3 339.1M739.5 260L750.1 270.5L771.1 282L783.4 291.6L794 300.4L806.3 308.3M764.1 260L769.4 277.6L771.1 282M620 414.3L627 421.4L637.6 428.4L646.4 438.9L663.9 451.2L681.5 460L707.9 466.2L732.5 467.9L760.6 472.3L785.2 483.8L797.5 486.4L806.3 493.4M627 421.4L632.3 430.1L631.4 444.2L628.8 465.3L630.5 486.4L629.7 504L634.1 521.5L641.1 537M639.3 429.3L634.1 437.2L631.4 444.2M460 364.6L477.6 362.8L495.1 361.1L512.7 355.8L530.3 354L544.4 351.4L556.7 351.4L565.4 347.9L574.2 347M574.2 347L583 349.6L593.6 352.3L605.9 353.1L614.7 359.3L628.7 361.9L644.5 363.7L660 367.2M537.3 260L539.1 270.5L543.5 279.3L544.4 291.6L551.4 302.2L555.8 307.5L556.7 314.5L561.9 319.8L569 321.5L572.5 330.3L577.8 337.3L581.3 344.4L583 349.6M583.9 293.4L581.3 300.4L576 307.5L572.5 318L569.8 325M583 349.6L588.3 342.6L593.6 335.6L600.6 330.3L609.4 323.3L623.4 318.9L635.7 315.4L646.3 307.5L660 299.5M575.1 348.8L576 340.8L581.3 335.6L590.1 334.7L594.4 340.8L595 351.4L591.8 358.4L584.8 361.9L577.8 360.2L575.1 354.9L575.1 348.8M583 349.6L581.3 358.4L572.5 367.2L563.7 374.2L556.7 383L551.4 395.3L547.9 402M583 349.6L583 360.2L590.1 367.2L597.1 376L602.4 386.5L605.9 402M496.9 260L486.4 279.3L477.6 293.4L467 311L460 323.3M552.3 395L546.1 405.5L537.3 414.3L525 428.4L518 438.9L511 448.6L495.1 458.3L477.6 465.3L460 472.3M605.9 395L611.1 405.5L626.1 421.4L633.1 431.9L630.5 447.7L628.7 474.1L629.6 496.9L633.1 518L641 537M626.1 421.4L635.7 424.9L644.5 433.7L648.9 443.3L660 451.2M639.3 429.3L633.1 437.2M460 621.4L475.8 616.1L495.1 616.5L514.5 616.1L533.8 624.9L551.4 628.4L565.4 633.7L581.3 640.7L593.6 639L609.4 640.7L627 642.5L642.8 645.1L653.3 645.1L660 647.8M638.4 530L646.3 542.3L650.7 561.6L655.1 582.7L658.6 596.8L660 603.8M180 479.1L197.6 475.5L232.7 474.7L258.2 473.8L271.4 469.4L283.7 465M258.2 473.8L250.3 491.4L246.8 503.7L236.2 517.7L236.2 526.5L228.3 535.3L216.9 549.4L214.3 570.4L209.9 591.5L202.8 607M380 565.2L364.5 577.5L348.7 588L331.1 596.8L315.3 602.1L308.3 607M380 393.3L366.3 399.4L352.2 400.3L341.7 404.7L332.9 414.4L320.6 426.7L308.3 437.2L299.5 447.8L292.5 458.3L283.7 465.3L266.1 471.5M180 356.4L183.5 368.7L182.6 386.2L180 395M180 655.8L190.5 656.7L211.6 649.6L241.5 642.6L262.6 644.4L285.4 640L299.5 633.8L305.7 627.7L310.1 622.4L320.6 624.1L338.2 625.9L347 630.3L361 632.1L368 638.2L380 637.3M380 565.3L362.8 579.3L343.4 591.6L332.9 597.8L318.8 601.3L308.3 607.5L305.7 618L305.7 627.7M216 560L215.1 574.1L208.1 595.1L201.1 611L192.3 633.8L185.3 651.4L180 665.4M395 300L398.5 310.5L399.4 326.4L402.1 343.9L401.2 358L402.9 370.3L405.6 380.8M474.1 300L465.3 314.1L456.5 328.1L442.5 338.7L428.4 347.5L419.6 356.2L414.4 365L410.8 373.8L405.6 380.8M414.4 367.7L428.4 364.1L442.5 362.4L456.5 364.1L470.6 364.1L488.2 361.5L505.7 358L516.3 355.4L530 354.5M405.6 380.8L396.8 384.4L388 386.1L382.7 391.4L373.9 396.7L367.8 398.8M414.4 365L407.3 368.5L398.5 370.3L391.5 379.1L382.7 391.4M405.6 380.8L402.9 394.9L407.3 405.4L410.8 416L417.9 428.3L423.1 442M418.8 430L424.1 442.3L429.4 456.4L436.4 466.9L439.9 472.2L434.7 482.7L427.6 498.5L423.2 509.1L413.6 521.4L403 537.2L392.5 553L381.9 565.3L371.4 572M439.9 472.2L450.5 473.1L461 472.2L469.8 467.8L480 465.1M398.6 235L396.9 245.5L393.4 256.1L396 275.4L396.9 291.2L395.1 300L398.6 314.1L399.5 333.4L402.1 349.2L403 361.5L403.9 368.6M480 291.2L473.3 301.8L466.3 312.3L459.3 324.6L448.7 333.4L438.2 342.2L427.6 349.2L420.6 358L415.3 365.1L413.6 368.6M392.7 100L380.4 110.5L369.9 122.8L366.4 135.1L368.1 143.9L375.1 156.2L387.5 165L401.5 165.9L417.3 162.4L428.8 158.9L431.4 147.5L435.8 133.4L435.8 112.3L427.9 106.2L417.3 102.6L401.5 100M340 159.8L350.5 151L368.1 146.6L382.2 142.2L392.7 141.3L399.8 135.1L405 132.5M370.8 100L381.3 108.8L392.7 117.6L400.6 122.8L405 132.5M416.4 100L410.3 110.5L409.4 117.6L413.8 124.6L405 132.5M405 132.5L410.3 136L422.6 133.4L436.7 131.6L456 133.4L473.6 136L480.6 136.4M405 132.5L410.3 140.4L419.1 149.2L427.9 158.9L438.4 172.1L445.4 182.6L447.2 187.9L456 193.1L461.3 199.3M405 132.5L405.9 142.2L401.5 156.2L400.6 165.9L397.1 179.1L396.2 198.4L397.1 223L398 242M638.5 530L646.4 544.1L651.6 565.1L656.9 588L662.2 605.6L672.7 624.9L683.3 639L693.8 646L700.8 656.5L707.9 663.6L711.4 672M620 641.6L634.1 643.4L651.6 646L669.2 651.3L686.8 653L700.8 658.3L711.4 660.9L725.4 660.1L739.5 661.8L753.6 659.2L767.6 655.7L778.2 654.8L785.2 653.9M805.4 537L802.8 547.6L801 561.6L794 577.5L787 589.8L784.3 600.3L786.1 616.1L787.8 631.9L787 642.5L785.2 653.9L788.7 660.1L793.1 668.8M785.2 642.5L779.1 647.8L778.2 656.5L780.8 665.3L785.2 672M704.4 660L711.4 668.8L716.7 679.3L721.1 695.1L725.4 707.5L734.2 719.8L741.3 730.3L745.7 744.4L748.3 765.4L753.6 779.5L755.3 791.8M778.2 660L779.9 666.2L793.1 667L797.5 674.1L802.8 686.4L805.4 696.9M330 625.5L347.6 630.8L365.1 637.8L379.2 637.8L388 631.6L403.8 622.8L421.4 618.5L444.2 616.7L453 620.2L465.3 621.1L475.9 616.7L488.2 615.8L505.7 616.7L516.3 616.7L530 621.1M392.7 100L397 98.8L401.5 100"/>
</g>
<g fill="#004466" stroke="#000" stroke-width="1" stroke-linejoin="round">
<path d="M6 806L6 705L10 705L13 702.5L17.5 701L23 698L28 698.5L30 701.5L26.5 705L28 708L35 707L45 706.5L47 704L48.5 706.5L46 714L46.7 717L50.5 718L52.5 726L59 724L62 727L69.5 728.5L71 726.5L72.5 730.5L74.7 734L76 739.5L80 742L84.4 740.3L88 742L93 743L96 747.3L101 748.2L105.4 750.8L106 753L105.5 759L113.5 759L113 753L114.2 749L121.3 743.8L126.5 741.2L131.8 740.3L135.3 743.8L140.6 745.6L147.6 750.8L148.5 754.4L150 759L160 759L158 748L157 740L153 733L149 727L150 721L156 722L160 728L166 731L172 735L178 738L183 742L186 745L195 748L206 752L215 757.7L218 760L241 759L240 754L234 754L231 749L227 742L217 742L214.4 738L206 738L200 735L197.5 730L192 728L190.5 724L186 721L182 717.6L190.5 714L187.7 710L196 704L200 700L201 699.8L201.9 696.2L208.9 697.1L208.1 694.5L207.2 689.2L204.5 686.6L204.5 682.2L206.3 678.7L205.4 675.6L203.7 676.9L203.2 680.4L201.9 681.3L198 683.9L196.6 689.2L196.2 692.7L194 694.9L188.7 694.5L186.1 691L185.7 687.9L182.6 688.3L179.5 688.8L177.3 686.1L176.4 683.1L179.1 680.4L183.5 680L186.1 680.9L184.8 679.1L189.6 674.7L194 669.4L195.3 667.7L199.3 666.4L203.7 666.8L207.2 665.5L208.9 661.1L212.5 658.5L216.8 655.4L215.5 654.1L212.9 653.2L212.9 651L217.7 650.5L218.6 653.2L219.5 655.4L221.2 655.8L226.5 653.6L231.8 651L237.9 648.3L240.6 647.9L240.6 645.3L252.4 645.3L252.9 647.9L257.3 649.7L261.7 652.3L265 652.3L266.1 652.3L273.1 654.9L280.2 654.9L283.7 650.5L289 647.9L296 650.5L301.3 651.4L303 655.8L306.5 653.1L305.7 639.1L306.5 630.3L310.1 623.3L313.6 621.9L319.7 624.1L320.6 635.6L322.4 644.4L326.7 647.9L329.4 653.1L333.8 657.5L334.7 660.5L345.2 659.3L343.4 652.3L346.1 657.5L351.4 651.4L355.7 652.3L357.5 647L362.8 644.4L359.3 649.6L355.7 656.7L366.3 654.9L366.3 651.4L371.6 649.6L375.1 644.4L377.7 647.9L380 651.4L375.7 651L391.5 648.3L407.3 647.1L421.4 647.8L435.4 650.1L449.5 654.5L463.6 660.6L475.9 667.7L484.7 673.8L493.4 680.8L502.2 687.9L507.5 691.4L512.8 695.8L515.4 703.7L515.8 710.3L526.4 710.3L537.8 707.7L543 701.5L547.5 701.5L546.6 707.7L552.7 705L561.5 698.9L570.3 692.7L577.3 690.1L580 684.8L584.4 682.2L586.1 676.9L591.4 675.1L595.8 672.5L599.3 676L605.4 674.3L612.5 674.3L616 678.7L623 682.2L630 685.7L637.1 691L642.4 698L645.9 705L651.1 709.4L656.4 712L657.3 719.1L656.4 724.4L660 727.9L667 733.1L672.2 738.4L675.7 743.7L679.3 749L682.8 754.2L683.7 763L685.9 757.5L699.2 757.5L702.7 764.5L705.6 770.2L707 777.2L711.9 781.4L714 785.6L713.3 792L713 806Z"/>
<path d="M370.4 652.7L373.9 647.5L377.5 643.1L375.7 632.5L378.3 632.5L381 637.8L385.4 637.8L387.1 630.8L389.8 631.6L388.9 639.5L393.3 642.2L398.5 643.9L389.8 646.6L382.7 648.3L375.7 651.8Z"/>
<path d="M417 643.1L421.4 644.8L427.5 639.5L431.1 638.3L431.9 642.2L439 643.1L447.8 640.1L453 642.2L454.8 647.5L451.3 649.2L446 646L439 648.3L430.2 646L423.1 647.8L417.9 646Z"/>
<path d="M474.1 657.1L479.4 658.9L482.9 658L488.2 660.6L493.4 656.2L497.8 652.7L495.2 658.9L489.1 663.3L484.7 665.9L486.4 669.4L490.8 672.1L497 675.6L502.2 679.1L508.4 679.4L504 682.6L498.7 679.1L491.7 675.6L484.7 670.3L480.3 665L475.9 662.4Z"/>
<path d="M343.2 652.7L347.6 656.2L351.1 651.8L356.4 649.2L358.1 644.8L362.5 643.9L359.9 649.2L354.6 654.5L347.6 658.9L344.1 657.1Z"/>
</g>
<g fill="#5d504b" stroke="#000" stroke-width="1"><path d="M15.8 718.9L24.6 716.6L32.5 719.2L39 721.8L36 726.2L31.6 730.1L26.4 728L19.3 722.7Z"/><path d="M65.8 742.4L72.6 739.5L79.3 741.4L81.7 747.2L80.8 751.1L76.4 749.2L71.6 747.7L67.7 745.8Z"/></g>
<g fill="#2b4564"><path d="M42.2 680.5L46.6 679.7L51 684.1L51.8 688.5L47.5 689.3L43.9 685.8Z"/><path d="M57.1 689.3L59.8 684.9L63.3 691.1L65.9 696.4L70.3 701.6L77.3 703.4L83.5 705.1L84.4 709.5L79.1 710.4L73.8 707.8L67.7 706L63.3 702.5L59.8 696.4Z"/><path d="M140.6 705.1L144.1 698.1L149.4 695.5L153.8 698.1L154.7 703.4L151.1 707.8L146.7 709.5L145 713.9L140.6 712.2Z"/></g>
<path d="M225.7 692.8h3.4v1.3h-3.4zM216.6 689.9h2.3v1.7h-2.3zM214.0 689.0h3.6v1.4h-3.6zM217.3 677.7h3.0v2.0h-3.0zM214.4 697.3h2.5v1.8h-2.5zM208.5 690.1h2.7v1.4h-2.7zM209.8 689.7h2.7v1.4h-2.7zM219.5 677.4h3.9v1.0h-3.9zM207.0 695.1h3.8v2.0h-3.8zM215.1 680.5h2.0v1.3h-2.0zM219.4 690.5h2.9v2.2h-2.9zM221.9 687.9h3.1v2.1h-3.1zM215.1 689.6h3.5v1.6h-3.5zM214.9 697.3h3.8v2.7h-3.8zM196.6 723.1h2.1v2.0h-2.1zM198.5 714.2h1.7v1.5h-1.7zM190.6 735.5h3.5v2.2h-3.5zM206.5 707.4h3.2v1.6h-3.2zM195.4 712.2h2.9v1.5h-2.9zM168.1 756.2h1.7v1.4h-1.7zM177.2 751.3h2.0v2.2h-2.0zM171.2 743.2h3.1v1.3h-3.1zM174.9 749.1h3.0v1.4h-3.0zM176.8 745.8h3.1v1.5h-3.1zM175.8 740.6h1.9v1.5h-1.9zM174.4 750.1h3.4v3.0h-3.4zM165.8 742.8h3.5v2.3h-3.5zM166.0 744.6h2.4v2.1h-2.4zM162.4 739.0h2.2v1.4h-2.2zM175.1 740.2h2.9v2.3h-2.9zM168.2 747.0h2.6v2.0h-2.6zM87.1 751.9h2.9v1.2h-2.9zM81.1 741.4h3.8v1.6h-3.8zM90.5 754.7h3.3v1.6h-3.3zM96.8 752.6h1.8v1.3h-1.8zM98.9 753.7h3.5v2.9h-3.5zM93.7 752.2h2.1v1.7h-2.1zM80.3 742.8h2.9v2.6h-2.9zM93.5 745.3h2.1v1.4h-2.1zM98.5 746.8h2.2v2.0h-2.2zM81.8 757.4h2.1v2.5h-2.1zM88.0 757.0h2.6v2.6h-2.6zM83.8 748.6h2.1v1.8h-2.1zM75.9 746.2h2.0v2.3h-2.0zM97.1 752.5h3.5v1.1h-3.5zM136.0 755.5h3.6v1.8h-3.6zM121.8 751.6h1.8v2.5h-1.8zM138.4 754.4h3.3v1.9h-3.3zM127.8 743.9h2.1v1.6h-2.1zM121.0 754.9h2.7v1.9h-2.7zM124.1 755.9h3.6v1.7h-3.6zM141.5 748.3h3.7v1.5h-3.7zM119.0 746.2h2.9v1.7h-2.9zM138.0 745.4h2.6v1.7h-2.6zM122.1 750.3h2.0v1.0h-2.0zM145.4 754.2h3.6v1.2h-3.6zM130.3 743.8h3.2v1.3h-3.2zM144.9 754.3h3.7v2.0h-3.7zM132.1 758.0h3.2v2.6h-3.2zM119.1 752.3h1.6v1.9h-1.6zM141.6 756.7h1.6v2.6h-1.6zM118.5 750.2h2.5v1.8h-2.5zM127.9 742.7h3.2v1.1h-3.2zM123.1 754.8h2.7v2.1h-2.7z" fill="#5d504b"/>
<path d="M210.5 691.6L209.5 690.3L210.3 688.9M215.8 691.8L215.0 690.4L215.8 689.0L215.4 687.5L213.9 686.9L213.9 685.3M214.0 672.5L215.4 673.2L216.4 672.0M224.9 689.0L225.7 687.6L227.3 687.3L228.7 686.7L229.8 687.9L229.3 689.4M207.2 676.9L208.6 677.7L208.6 679.3L209.0 680.9L208.0 682.1L206.7 683.1M217.3 686.7L215.7 686.7L215.3 685.2M220.4 677.9L221.9 678.5L223.4 677.8M224.1 692.6L225.3 691.6L226.9 691.7L228.5 691.4L229.1 690.0L228.9 688.4M212.6 703.7L211.2 704.5L211.4 706.1M218.8 673.1L218.7 674.7L220.3 675.2L220.6 676.8L221.7 678.0M213.7 688.6L213.2 687.1L214.4 686.1M216.7 687.5L217.1 689.1L218.3 690.0L219.9 690.2L221.4 689.6M212.2 685.6L213.4 686.6L213.9 688.2L215.0 689.3L215.3 690.9M227.2 681.0L225.6 681.5L225.1 683.0L223.6 683.8L222.2 683.0M211.1 700.3L210.9 698.8L209.6 697.8L209.5 696.2M210.5 678.7L210.4 677.1L211.9 676.6M220.5 680.1L221.7 679.0L223.3 678.6M225.4 688.2L226.9 688.6L227.5 690.1L227.8 691.7M224.9 684.2L226.0 685.4L227.3 686.2L228.6 687.2L228.6 688.8M215.7 694.8L215.7 693.2L214.5 692.3M215.0 706.2L213.9 707.4L212.4 707.9L210.8 708.4L209.8 709.6L209.5 711.2M210.2 674.5L211.6 675.3L211.5 676.9L210.5 678.1M211.9 695.9L211.0 697.2L211.2 698.8M224.8 689.2L225.5 690.6L224.5 691.9L225.1 693.4M210.5 681.9L211.7 683.0L212.6 684.3M214.2 699.2L212.8 700.0L212.0 701.4L210.4 701.6L209.4 700.3L209.5 698.7M216.1 673.2L214.6 673.8L213.7 675.1L213.4 676.7L212.4 678.0L211.2 679.0M213.3 678.9L213.6 680.5L214.4 681.8M206.8 678.4L206.0 677.1L204.5 677.4L203.4 676.2L201.9 676.9L200.3 677.0M222.5 683.3L221.9 684.8L221.3 686.3M221.0 674.6L219.8 673.5L218.4 672.9M211.0 688.7L212.2 687.7L213.8 687.6L215.4 687.8L216.3 686.5L217.5 685.4M207.1 675.6L208.4 676.6L208.2 678.2M216.1 697.1L217.4 697.9L217.8 699.5M216.8 697.7L217.0 696.2L218.4 695.5M209.1 674.8L208.6 673.3L209.2 671.8L209.4 670.2L208.9 668.7L208.0 667.3M213.1 687.1L212.1 685.7L213.2 684.5L213.9 683.1L214.9 681.8L216.1 680.8M208.6 686.4L208.4 688.0L206.8 688.4L205.2 688.8L203.8 689.3L202.2 689.0M209.3 681.6L209.6 680.1L211.0 679.4L212.6 679.0L214.0 679.7M218.7 693.0L218.0 691.6L217.2 690.2L216.0 689.2L214.4 689.5M213.3 683.6L213.5 685.2L214.7 686.1L215.8 687.4L215.1 688.8L213.9 689.9M222.9 674.5L221.7 675.6L222.1 677.2L221.9 678.8M220.5 673.3L221.9 674.2L223.4 674.7M221.8 675.1L220.6 673.9L219.4 673.0L219.0 671.4L217.9 670.2M205.7 683.9L207.2 684.2L208.8 684.7L209.9 683.6L210.2 682.0L211.2 680.8M207.6 703.9L208.3 705.4L209.5 706.4L210.8 707.4L211.6 708.7M223.8 675.9L222.4 676.7L221.0 677.5M206.4 682.6L205.1 681.7L205.3 680.1L206.2 678.7M208.3 683.9L207.4 682.6L206.4 681.3L204.9 680.7L203.6 681.5M206.6 697.8L205.0 698.0L203.9 699.1L203.1 700.5L201.5 700.6L201.2 702.2M216.6 680.9L215.1 680.4L213.5 680.1L212.7 678.7L211.1 679.0M208.5 693.2L207.1 694.0L206.7 695.5M214.6 698.8L215.9 697.9L217.5 698.3L219.0 698.9M208.9 678.4L209.8 679.8L209.3 681.3L207.8 681.6L207.0 680.2M213.8 691.9L214.4 690.4L215.6 689.3L214.9 687.9L213.3 687.5M219.6 675.9L219.6 677.5L219.9 679.1L221.2 679.9M217.2 673.3L215.6 673.6L214.5 674.7L213.0 675.3L212.5 676.8L212.3 678.4M212.9 697.0L214.4 696.3L215.9 696.7M212.9 701.0L214.4 700.5L215.2 699.1L215.1 697.5L216.2 696.4L217.0 695.0M216.2 672.8L214.7 672.4L214.5 670.8L215.2 669.3L215.4 667.8L214.9 666.2M217.2 693.5L218.4 692.5L219.3 691.1L220.9 691.1M219.6 677.0L219.7 678.6L221.2 678.9L222.8 679.1M210.0 675.4L211.4 676.3L212.8 675.6M206.2 698.2L207.6 697.4L208.7 698.5L209.9 699.6L210.9 700.8L212.4 700.2M212.3 674.0L213.7 673.2L215.3 673.1M216.1 678.8L216.0 680.4L216.0 682.0L216.6 683.5L216.6 685.1L217.0 686.6M222.3 694.7L223.6 695.7L225.0 695.0L226.2 693.9M212.7 696.5L212.0 697.9L211.0 699.2L209.5 698.9L207.9 699.1L206.4 699.7M210.3 700.1L210.1 701.6L208.9 702.7L207.4 702.0M206.0 678.2L207.5 677.6L209.1 677.7M207.2 680.5L206.1 679.4L206.5 677.9M221.9 684.0L222.4 685.5L221.2 686.6L220.5 688.1L220.7 689.7L221.2 691.2M223.9 679.6L225.5 679.7L226.0 678.2L225.3 676.8M217.9 687.1L216.6 686.3L215.6 685.0L214.1 685.6M223.5 693.5L224.9 692.7L226.2 691.8L226.5 690.2L227.9 689.5M219.2 695.1L219.9 693.7L221.2 692.8L222.8 693.0L224.2 692.3M226.7 688.0L228.0 688.9L228.5 690.5M206.8 684.5L208.3 684.8L209.6 685.8L210.5 687.1L212.1 687.3M212.7 687.5L211.9 688.9L212.5 690.4L213.9 691.1M215.7 697.6L214.1 697.1L214.1 695.5L214.0 693.9M222.8 686.7L223.9 687.8L225.3 686.9L226.7 687.7L227.8 686.6M223.0 677.1L222.7 675.6L221.2 674.9L220.6 673.5L220.8 671.9L222.4 671.7M213.6 677.8L212.3 678.7L210.8 678.2L209.2 678.6M215.7 703.9L214.1 704.0L212.5 704.1L212.1 705.6M213.2 706.8L211.8 707.6L212.3 709.1L213.2 710.5L214.5 711.4L215.7 710.4M217.6 675.4L217.9 676.9L219.2 677.9L220.5 677.0L221.6 675.8L223.0 675.1M223.6 680.9L223.7 679.3L225.1 678.4L226.5 677.8L227.3 676.4L226.7 674.9M215.8 696.0L215.8 694.4L216.4 692.9L216.2 691.3L214.6 691.0L213.5 692.1M224.1 675.7L222.7 674.9L221.2 674.3L221.4 672.7L220.1 671.7M212.2 690.8L213.8 691.2L215.1 692.1L216.3 691.0L217.7 690.2L219.2 689.6M216.2 682.1L217.4 681.0L216.8 679.5M215.3 683.2L213.9 682.5L212.3 682.8L211.5 681.4L212.6 680.2L213.0 678.7M214.0 682.2L214.0 683.7L212.5 684.2M222.0 697.1L221.4 695.6L222.2 694.3M211.2 689.4L209.9 690.3L208.6 691.3M208.9 677.4L209.0 675.8L209.8 674.4L209.1 673.0L207.5 673.2L206.2 672.4M209.1 678.8L210.3 677.8L210.1 676.2M209.9 700.0L211.3 700.8L212.7 700.1M208.3 676.6L209.6 677.6L210.8 676.5M213.5 677.1L214.7 676.1L216.3 676.5L217.9 676.8L218.9 678.0L219.8 679.3M224.6 687.9L223.0 687.8L221.5 687.5L220.8 686.1L219.2 685.7M224.5 678.5L224.6 676.9L225.9 676.0L225.9 674.4M218.9 674.0L220.5 674.3L221.5 673.1M214.3 692.5L212.7 692.3L211.1 692.0L209.5 691.9L208.6 693.2M218.8 683.6L217.4 684.5L215.8 684.4L214.7 683.3L214.4 681.7M212.9 696.9L214.0 695.7L213.6 694.2L213.1 692.6L213.7 691.1M212.8 695.2L213.4 693.7L213.1 692.1L214.1 690.9L213.7 689.3L213.9 687.7M217.6 694.0L218.3 695.4L217.0 696.4L216.1 697.7L216.5 699.3L216.7 700.9M225.3 687.5L223.7 687.6L222.3 688.2L221.1 689.3L220.1 690.6M225.4 679.5L225.7 681.1L224.4 682.0M217.3 698.5L217.9 697.1L219.1 696.1L218.9 694.5M225.2 685.6L226.6 684.8L226.5 683.2L225.2 682.3L225.4 680.7M214.9 700.7L213.3 700.9L212.7 702.3L213.3 703.8M219.6 693.1L220.8 694.2L220.0 695.6L218.6 696.4L218.8 698.0M215.2 699.1L216.8 699.0L217.5 700.4M219.5 675.4L220.2 673.9L219.5 672.5L218.4 671.3M218.2 675.1L217.1 676.2L215.7 675.4L214.9 674.0L214.1 672.6L212.6 672.2M211.9 704.4L210.3 704.9L209.1 703.9L208.1 702.6L208.1 701.0M217.1 688.1L218.1 686.8L219.7 686.9L220.8 685.8M207.4 688.4L206.0 689.2L204.4 688.9L202.9 689.3M210.7 703.7L210.0 702.2L209.0 701.0L207.4 701.1M210.8 681.5L211.2 683.0L212.3 684.1M209.0 678.1L208.9 679.7L210.1 680.7L210.4 682.3L211.1 683.7M217.4 693.5L217.4 695.1L217.2 696.7M215.5 672.6L214.2 671.7L212.6 671.9L211.5 670.8L212.3 669.4L212.5 667.9M209.1 697.8L207.6 697.2L206.2 696.6L205.9 695.0L205.6 693.4M217.4 703.1L216.4 701.9L214.8 701.8L214.0 703.2L212.6 703.8M217.7 682.9L219.0 683.9L219.0 685.5L217.9 686.7L217.8 688.3M221.9 684.6L220.3 684.9L219.5 686.2L217.9 686.4M221.4 683.7L221.6 682.1L221.3 680.5L219.9 679.7L218.4 679.2L217.0 678.5M216.1 679.3L216.7 680.7L218.3 680.9M213.9 692.0L214.6 693.5L216.0 694.3L215.6 695.9L216.8 697.0L216.1 698.4M216.0 687.6L217.0 686.4L218.6 686.2L219.2 687.6M220.3 680.9L218.8 680.6L217.8 681.9L216.4 682.5L214.8 682.0M210.2 688.5L210.9 689.9L210.9 691.5L211.8 692.8M216.7 685.4L218.2 685.0L219.7 684.3L220.5 682.9L220.3 681.3L221.7 680.5M223.2 676.7L224.5 677.7L225.4 679.0L226.0 680.5L224.8 681.5M213.2 676.2L214.8 675.7L216.3 676.3M208.4 691.6L206.8 691.6L206.2 693.1L207.4 694.2M220.7 675.4L220.4 673.9L220.3 672.3L221.0 670.8L221.4 669.3L220.4 668.0M224.0 674.5L224.4 676.1L224.8 677.6M212.5 707.0L211.2 706.2L209.9 705.2L210.3 703.7L211.6 702.7L213.1 702.2M214.0 686.2L215.6 686.4L216.2 685.0L214.9 684.0M212.8 679.1L212.0 680.4L210.5 681.0L208.9 681.5L207.5 682.3L206.7 683.6M216.5 675.6L215.0 675.1L213.8 676.1L212.5 675.1M208.9 685.2L210.3 684.5L211.8 685.1L212.5 686.5L212.1 688.1L213.5 688.8M216.0 672.5L215.6 674.0L214.2 674.8L212.7 674.3L211.2 674.7L209.6 674.7M214.3 695.4L212.7 695.4L211.5 694.5L210.3 693.4M222.7 690.3L224.0 691.1L223.6 692.7L225.0 693.4L226.2 692.3M214.7 697.6L214.0 699.0L212.4 698.9L210.9 699.5L209.5 700.2L207.9 700.3M209.7 675.5L208.2 675.8L207.3 677.2L207.2 678.8L208.7 679.4L210.2 678.9M218.4 694.0L218.4 695.6L217.0 696.2M215.4 687.5L213.9 687.1L213.0 688.4L211.5 689.0L210.0 688.4L208.4 688.4M221.7 681.8L220.8 683.1L221.8 684.3L223.1 685.3M224.4 693.8L222.9 693.5L221.3 693.3L220.6 694.8L219.7 696.1L220.2 697.6M207.2 701.4L206.3 702.7L205.1 703.8M226.8 682.5L227.9 683.7L229.5 683.4L231.0 684.0L232.2 685.0L233.4 686.1M212.9 691.9L214.4 691.3L215.6 692.3L217.2 692.2M210.1 705.8L211.5 705.0L213.1 705.5L213.6 707.0L215.0 707.7M219.8 701.4L219.4 702.9L220.8 703.8L222.4 703.7L223.3 702.4M217.8 676.2L219.4 675.7L220.4 674.5L221.9 675.0L223.3 674.3L224.5 675.3M212.2 695.9L213.8 695.9L214.9 697.0L214.9 698.6L216.0 699.8L216.0 701.4M219.0 676.4L219.5 677.9L221.1 677.9L222.3 679.0M219.0 674.5L217.4 674.0L216.7 672.5M215.1 699.6L216.5 700.3L216.8 701.8L218.0 702.9M224.5 679.1L223.1 678.4L223.3 676.8L222.7 675.3L222.4 673.7M206.7 683.0L205.5 684.0L203.9 683.8L202.5 684.7M206.2 685.6L205.6 684.2L204.9 682.7L203.4 683.1L201.9 683.7L200.5 684.5M220.0 698.7L218.9 697.5L217.4 698.0M206.9 684.0L207.8 682.6L208.7 681.3L210.3 681.8L211.6 681.0L213.2 681.0M222.1 694.3L223.1 693.1L224.6 692.6M222.4 687.7L220.9 688.4L220.8 690.0L219.8 691.2L218.2 691.2L217.3 689.9M211.5 680.4L213.0 680.8L214.4 680.0L215.7 681.0L216.9 682.1L218.5 682.3M212.9 699.0L211.5 698.4L210.6 697.0L210.2 695.5M214.3 706.5L214.1 708.1L215.6 708.6M224.0 681.1L223.1 679.7L223.3 678.1L224.7 677.4L225.7 678.6L227.2 678.2M223.0 686.2L224.5 686.8L224.6 688.4L225.7 689.6M219.4 680.6L220.0 682.0L219.2 683.5L217.9 684.3L218.5 685.8M211.7 694.5L210.3 695.2L210.5 696.8L210.4 698.4L211.0 699.9L211.4 701.5M205.9 677.7L206.7 676.3L207.6 675.0L208.7 673.8M220.6 683.5L220.3 681.9L221.4 680.7L222.6 679.7L222.6 678.1M211.1 683.0L212.2 684.2L213.6 683.6M220.9 687.2L222.0 686.1L222.2 684.5L221.8 683.0L221.1 681.5L221.1 679.9M213.2 690.3L214.5 689.3L215.1 687.8L214.2 686.5L212.8 685.6M221.9 680.8L221.5 682.4L221.2 683.9L219.6 684.0M225.3 693.1L226.9 693.1L228.5 692.6L229.4 691.3M213.8 692.6L213.8 694.2L212.7 695.4M218.2 701.7L217.1 702.9L215.5 703.0L214.7 704.4L214.6 706.0L216.0 706.7M227.7 683.6L226.8 682.2L226.8 680.6L226.3 679.1M223.9 695.5L224.3 697.0L224.0 698.6L222.8 699.6L221.5 698.6M207.6 692.6L208.2 691.1L206.9 690.1L206.8 688.5L207.2 687.0L207.9 685.6M212.1 694.3L211.7 692.7L210.3 692.1L210.6 690.6L211.9 689.6M220.5 681.4L218.9 681.5L217.8 680.3L216.4 681.1L214.9 681.7L213.4 682.3M225.4 694.5L226.5 693.3L227.9 692.5L229.3 693.2L230.8 693.7M209.5 696.5L209.5 694.9L210.8 694.1L212.4 693.6L213.5 692.5M218.3 694.6L217.1 693.5L215.9 694.5M204.6 705.6L204.3 704.1L204.0 702.5L202.4 702.4M193.9 732.2L194.4 733.8L194.7 735.4M191.9 729.6L190.3 729.4L189.5 730.7M194.5 723.5L193.4 724.7L192.8 726.2L194.0 727.2L195.6 727.0M186.9 727.7L188.0 726.6L189.6 727.1L190.6 728.3M189.9 731.7L189.8 733.3L188.5 734.1L187.1 733.2M194.0 729.6L193.4 728.2L194.5 727.0L193.7 725.7M209.2 707.0L209.7 705.5L211.0 704.5L211.5 703.0L213.0 702.5M186.8 731.6L188.4 731.4L188.8 729.8L188.1 728.4L186.5 728.7M191.3 725.0L191.1 723.4L190.4 722.0L188.9 721.3L187.5 722.2L186.1 722.8M189.3 726.1L187.9 726.8L187.2 728.3L185.9 729.2L185.7 730.8L184.8 732.1M189.1 717.7L187.8 716.8L187.6 715.2L186.2 714.5L185.4 713.1M202.3 720.5L201.4 719.2L200.7 717.8L201.2 716.2L200.8 714.7M202.5 721.0L204.0 721.6L205.6 721.7M195.0 724.9L195.9 726.2L196.0 727.8L194.7 728.7L194.6 730.3L196.0 731.0M193.9 716.8L192.7 718.0L192.4 719.5L193.5 720.6L193.0 722.2M202.8 699.6L201.3 699.1L199.7 698.9L199.2 700.4L197.8 701.2L196.8 702.5M190.4 729.8L190.1 728.2L189.2 726.8M200.3 709.8L199.3 708.5L199.4 706.9L198.2 705.8L197.9 704.2M184.2 730.3L185.8 730.2L187.0 729.2L188.0 727.9M204.5 699.8L206.0 700.4L206.2 702.0M205.7 710.0L206.7 708.7L208.2 708.9L208.7 710.5L210.1 711.1M186.2 729.8L187.6 730.6L189.2 730.5L190.8 730.3M185.9 731.2L186.7 732.6L185.5 733.6L183.9 733.8M204.5 718.0L204.9 716.4L206.5 716.5L207.5 717.8M203.6 700.9L203.3 702.4L203.9 703.9M192.0 712.2L191.6 713.7L190.8 715.1L189.8 716.3L188.2 715.9M190.8 733.5L189.2 733.2L189.1 731.6L190.3 730.5M196.9 704.9L197.4 706.4L198.7 707.4M207.7 709.6L207.6 711.2L206.1 711.4L204.8 712.4L203.6 711.3L202.7 710.0M197.4 724.6L195.9 724.0L194.4 724.7M196.7 707.8L195.8 709.2L196.7 710.5L198.2 709.9L199.8 710.0L200.6 708.6M197.7 703.5L197.6 701.9L196.7 700.6L195.6 699.4L196.4 698.0L196.8 696.5M198.4 708.7L199.9 708.2L201.5 708.7L202.8 707.7L204.3 708.1M201.9 717.8L203.2 718.7L204.4 717.7L205.9 717.0L207.4 716.5M199.6 722.6L199.6 721.0L198.8 719.6L199.9 718.4L201.5 718.3L203.0 717.6M203.8 718.1L204.5 716.6L205.2 715.2L205.1 713.6L204.3 712.2L202.9 711.5M189.8 735.6L189.8 734.0L189.2 732.6L189.2 731.0L187.6 730.6L186.0 730.3M195.1 723.1L194.6 724.7L194.4 726.2L193.6 727.6L194.6 728.8L195.6 730.1M197.1 705.0L196.0 703.8L196.9 702.5L197.9 701.2L199.4 700.9M161.4 744.4L161.2 746.0L160.2 747.2M178.3 743.9L177.2 742.8L177.5 741.2L179.0 740.7L180.0 739.4L179.7 737.8M169.7 742.2L171.2 741.7L172.7 741.3L174.2 741.7L175.6 740.9M182.5 743.5L183.3 744.9L183.1 746.5L184.5 747.3L184.5 748.9M165.4 736.8L163.9 736.4L163.7 734.8L162.9 733.4L163.2 731.9L162.1 730.7M151.7 731.2L151.8 732.8L150.6 733.8L149.0 733.3L147.6 734.1M170.9 737.3L169.6 736.3L168.1 736.0L167.4 734.6M158.5 727.9L159.2 729.3L160.8 729.2L162.1 730.1M165.1 734.6L166.6 735.1L168.2 734.6L168.9 736.0L168.7 737.6L167.1 738.1M163.9 755.2L165.3 756.0L165.7 757.5M162.9 739.6L164.3 738.9L165.9 738.5M163.5 740.3L165.1 740.4L166.6 739.6M163.2 742.9L162.0 744.1L161.5 745.6M170.4 734.4L172.0 734.2L173.3 733.1L174.8 733.7L174.8 735.3M181.2 747.1L181.2 745.5L179.6 745.0M174.9 741.0L173.9 742.3L172.4 742.7L171.2 741.6L171.6 740.1M157.1 728.9L158.1 727.6L159.7 727.3L159.9 725.7L158.4 725.0M171.1 740.8L172.5 740.1L173.7 741.1L174.7 742.4L173.7 743.7L173.1 745.2M159.3 747.8L157.7 748.0L156.1 748.4L154.6 748.6L154.1 750.1M171.3 750.2L171.5 751.8L171.3 753.4L170.9 754.9L169.5 755.7L168.0 755.1M156.8 744.4L158.4 744.5L159.3 743.2L160.4 742.0L161.9 741.5L162.9 742.8M175.5 750.8L176.6 752.0L176.1 753.5L174.7 754.1M172.1 752.2L173.0 753.5L172.8 755.1L173.9 756.3L173.0 757.6M164.3 756.7L165.0 755.3L165.6 753.8L164.6 752.5L165.5 751.2L165.9 749.6M161.8 751.2L161.6 749.6L162.4 748.2L161.2 747.1L160.0 746.1M159.7 748.3L161.0 749.2L162.5 748.6L163.9 747.9L164.9 749.1M179.4 743.1L181.0 743.3L181.5 744.8L182.9 745.5L184.4 746.2M166.4 737.3L168.0 737.1L169.0 735.9L169.4 734.3L171.0 734.3L171.7 732.9M153.2 723.3L152.7 721.8L151.2 721.2L149.7 721.7L148.1 721.6L147.1 722.8M152.7 731.1L151.9 729.7L150.3 729.5M172.1 741.4L172.6 739.9L171.2 739.0L170.4 737.6L168.9 738.1M156.0 726.1L157.5 725.5L158.2 724.0M165.9 746.6L165.3 745.1L163.9 744.3M173.4 746.6L174.9 747.1L176.3 746.2L176.5 744.7L176.2 743.1M165.4 746.8L164.2 745.7L164.4 744.2L166.0 744.0L167.1 742.9M160.0 732.0L158.9 733.1L157.3 733.0L155.7 732.7L154.1 732.4M158.2 737.2L157.8 738.7L156.7 739.9L157.5 741.3M160.1 751.6L159.1 750.3L159.6 748.8L161.1 748.5L162.7 748.9L164.3 748.6M156.3 736.8L155.6 738.3L156.0 739.8L157.5 740.5M168.0 746.6L166.8 745.5L166.5 744.0L167.0 742.4L166.7 740.8L165.3 740.1M163.6 746.8L164.5 748.2L163.6 749.5M176.5 746.3L177.5 745.0L178.9 745.6M182.8 748.2L184.3 747.7L185.2 749.0L186.7 748.5L187.3 747.0M175.8 750.8L176.5 752.2L176.8 753.8L178.0 754.9L177.5 756.4L176.0 756.8M184.5 747.9L184.7 749.4L183.4 750.2L181.9 749.6L180.3 750.0L179.4 751.3M164.1 747.0L165.6 746.4L167.2 746.3L168.4 745.4M169.7 749.5L168.8 750.8L167.3 750.3L165.8 749.7M170.9 754.1L172.2 755.0L173.8 755.2L174.3 753.7L173.3 752.4M167.8 736.7L168.6 735.3L170.0 734.5L171.3 733.6M159.8 745.9L161.3 746.2L161.9 744.7L162.2 743.1M156.4 729.8L157.1 731.2L158.7 731.6L160.1 732.4L161.6 731.8M166.2 748.5L167.8 748.2L167.8 746.6L166.3 746.1L165.6 744.7M156.4 735.5L155.7 736.9L155.9 738.4M158.5 731.3L156.9 731.3L155.5 730.5L154.3 729.5L154.1 727.9M167.0 742.1L165.4 741.8L164.2 740.8L162.7 740.3L161.5 741.4L161.5 743.0M177.9 741.3L178.8 742.6L180.4 742.1L181.6 741.1L183.2 741.0L184.7 740.3M168.6 749.1L168.2 747.6L167.9 746.0M173.2 751.4L172.7 749.9L173.3 748.4M153.3 732.1L152.4 733.4L150.9 732.8L150.0 731.5L150.1 729.9M161.6 755.8L161.9 754.2L160.9 753.0L159.3 753.2L158.4 754.5L159.1 756.0M167.1 734.3L165.9 735.2L164.4 734.6L164.0 733.0M181.3 748.0L180.3 749.2L179.0 750.3M162.0 734.0L163.5 733.5L164.0 732.0M166.5 754.2L165.0 754.5L163.6 753.7L162.0 753.8L160.4 754.3M166.4 750.0L164.8 750.4L163.2 750.6L162.3 749.3M168.7 733.6L169.9 732.5L171.4 732.0L172.1 730.5M151.7 722.3L151.2 720.8L152.2 719.6L153.7 719.1L154.6 717.8L155.4 716.4M170.4 745.9L168.9 746.4L168.5 747.9L166.9 748.3L165.5 747.6L164.2 746.6M166.6 754.7L166.0 756.2L166.8 757.6L166.8 759.2M170.2 750.5L171.0 749.1L171.5 747.6M168.4 756.5L168.8 758.1L168.1 759.5L166.5 759.8L165.8 761.3M178.4 742.4L180.0 742.2L181.5 742.6L182.3 741.2M174.2 737.9L175.6 738.7L176.3 740.2L177.8 740.5L179.4 740.6L181.0 740.7M96.9 754.1L98.3 755.1L99.4 756.2L101.0 756.3M88.5 744.7L89.7 745.7L91.2 746.4M96.5 749.2L97.8 748.3L99.0 747.3L100.6 747.5M74.5 747.7L76.1 748.0L76.7 746.6L75.5 745.5L73.9 745.4L73.3 746.9M87.5 751.6L85.9 751.7L85.6 753.2L86.9 754.1L88.3 754.9L89.4 756.1M103.4 751.3L104.9 751.7L106.0 752.9L107.6 753.4L109.1 753.2M87.7 754.2L89.1 753.4L90.7 753.4L92.0 754.2M77.4 751.8L76.0 751.1L74.4 751.5L73.3 750.4M84.5 742.2L85.6 743.3L86.9 744.3L86.4 745.9L85.3 747.0M101.8 758.0L100.6 756.9L99.3 757.7M99.9 749.2L98.5 748.3L97.3 747.3L97.1 745.7L97.3 744.2L96.2 743.0M82.8 750.6L83.4 749.2L83.8 747.6L85.1 746.6M87.9 751.5L86.3 751.4L85.2 750.2M77.5 745.2L78.9 746.0L80.3 746.8M103.2 754.4L104.3 753.3L105.9 753.5L106.4 752.0L105.2 750.9L103.6 751.2M85.0 749.7L85.0 751.3L84.0 752.6L83.9 754.2M83.8 745.8L84.0 744.3L82.8 743.1M86.8 753.9L88.1 753.0L89.1 751.7M89.1 757.2L88.0 758.3L87.1 759.6M96.5 746.7L94.9 746.4L93.6 745.5M79.7 755.0L80.5 753.6L81.5 752.4L80.9 750.9L79.4 750.4M92.5 746.8L91.3 747.8L89.8 748.1L88.3 747.6L86.7 747.3M81.7 745.0L80.4 745.9L79.4 747.2L80.1 748.6L79.2 749.9L78.7 751.5M88.6 747.9L87.6 746.6L86.0 746.8L85.6 748.3M86.6 742.7L87.7 741.5L87.4 739.9L86.0 739.3L85.2 737.9M74.1 744.1L74.5 742.6L73.6 741.3L72.1 740.8L72.2 739.2L71.0 738.2M90.3 748.6L91.8 748.1L93.3 747.5L94.9 747.3L95.7 746.0L95.2 744.4M89.1 744.0L89.4 742.4L90.6 741.4M82.0 754.2L83.4 753.5L84.6 754.6M81.1 746.8L81.3 748.3L80.0 749.3M80.6 747.9L79.1 748.6L77.8 747.6L78.4 746.2M100.2 750.8L98.7 750.2L97.8 748.9L97.4 747.4M80.8 753.4L79.3 752.7L77.7 752.6M89.4 754.0L87.9 753.6L86.3 753.3M78.3 741.2L76.8 740.7L75.3 740.1L74.4 741.4L73.2 742.5L71.8 743.3M72.8 746.1L71.2 746.3L69.6 746.3M79.2 753.6L78.7 752.1L78.8 750.5L79.3 748.9L78.9 747.4M77.0 748.5L76.7 750.1L75.2 750.6L74.8 752.2L73.7 753.3L72.8 754.6M94.2 751.3L94.0 752.9L94.9 754.3M90.2 754.8L91.7 755.1L93.3 755.1L94.9 755.0L96.4 754.4L97.0 752.9M101.7 756.3L102.9 757.4L103.0 759.0L103.6 760.5L105.2 760.6L106.3 761.7M88.0 744.1L89.2 743.0L89.8 741.5M93.6 756.3L92.7 755.0L91.1 755.1L89.6 755.8M80.9 754.6L82.5 754.8L83.0 756.3L84.2 757.4L85.7 757.1M96.0 746.3L97.6 746.3L97.9 747.9L99.1 749.0M81.5 755.6L80.1 754.9L79.7 753.3L78.1 753.2L76.6 753.8L75.2 753.0M140.8 750.9L140.5 749.3L141.8 748.4M132.9 750.9L132.2 749.4L132.1 747.8L133.7 747.4L134.8 748.5L134.7 750.1M119.6 746.3L118.3 745.3L116.9 744.7L115.4 745.4L114.8 746.8M136.2 752.7L137.0 751.3L138.3 750.5M124.0 744.7L125.0 746.0L126.4 745.3L126.6 743.7L126.0 742.2L124.4 741.8M123.5 751.7L122.1 751.1L120.7 751.9M119.1 746.1L118.1 747.4L117.8 749.0L116.6 750.0L115.2 750.8M116.3 755.7L116.2 754.1L117.5 753.2L119.0 752.7M125.2 751.5L123.9 750.7L122.8 751.8M134.9 757.2L136.0 756.0L136.9 754.7L138.5 754.5L139.4 755.8L140.2 757.2M131.1 753.0L132.6 752.7L134.1 753.2M117.6 756.4L118.2 757.9L119.2 759.1M130.2 754.3L128.8 753.5L127.3 753.1L125.7 753.4M125.7 747.6L125.0 746.2L125.6 744.7L125.3 743.1L124.1 742.1L124.2 740.5M127.9 754.1L126.3 754.0L125.5 752.6L124.3 751.6M121.1 747.8L122.7 747.5L123.3 749.0L124.6 749.9L125.0 751.4L125.0 753.0M135.0 754.2L135.8 752.8L135.3 751.3L134.6 749.8M134.2 750.9L132.8 751.7L131.2 751.7L129.8 750.9L128.2 750.9L127.9 749.4M128.3 742.6L127.9 741.1L128.3 739.5L128.2 737.9L129.7 737.3M121.8 746.4L121.3 747.9L120.0 748.7M147.3 752.8L148.9 752.8L149.5 754.3L151.1 754.2M146.0 755.2L145.0 754.0L143.5 754.7L142.3 753.7L140.8 753.1M129.1 750.5L130.4 749.5L130.0 747.9M131.8 745.9L130.2 746.0L129.5 744.5L129.0 743.0M124.5 752.8L125.9 753.5L127.4 754.1L128.0 755.6M142.9 751.7L142.1 750.3L141.8 748.8L143.2 748.0L144.5 748.9L144.0 750.3M141.4 749.1L142.1 747.7L143.6 747.2L144.7 746.1L144.1 744.6L143.3 743.2M144.6 750.1L146.1 750.6L147.3 751.6L148.9 751.9L150.1 752.9M143.0 756.1L143.0 757.7L142.9 759.3L144.2 760.3M130.5 756.4L131.9 757.2L133.3 758.0L133.5 759.6L134.4 760.9M123.2 751.5L124.0 752.9L123.2 754.2L123.9 755.6L124.1 757.2L124.4 758.8M115.7 756.1L114.3 755.2L113.2 754.0L111.7 753.4L111.2 751.9M114.5 754.1L114.9 752.6L113.8 751.4L112.3 751.8L110.8 752.2L109.3 751.7M132.2 749.2L130.7 748.6L129.2 749.2M125.6 741.3L124.2 742.1L122.8 742.8M131.4 749.5L133.0 749.5L133.6 751.0L133.9 752.6L135.0 753.7M123.7 743.1L125.0 744.0L125.0 745.6L123.6 746.4M136.3 752.0L135.0 753.0L133.7 753.8L132.1 753.8L130.5 753.4M138.0 754.4L137.1 755.7L137.3 757.3L138.9 757.3M139.6 750.1L141.0 750.9L142.1 752.1L141.2 753.5L140.0 754.6L140.2 756.2M122.2 747.9L123.8 747.7L125.4 748.2L126.5 749.3L128.0 749.9L128.5 751.4M133.4 752.6L133.1 751.1L132.0 749.9L130.6 749.2M124.1 756.4L125.7 756.5L126.2 754.9L126.8 753.5L128.0 752.4L129.6 752.8M114.4 750.3L115.9 749.8L117.3 749.1L117.1 747.5M128.2 752.6L128.9 751.2L130.5 751.5M122.9 754.0L124.3 754.8L124.8 756.3M125.8 748.3L126.4 749.8L127.7 750.8L128.1 752.4L128.8 753.8L129.1 755.4M144.8 756.9L145.8 755.6L147.2 756.3M125.9 752.5L127.2 753.4L127.0 755.0L125.7 756.0M126.6 756.6L127.4 755.2L128.6 754.2L130.2 754.2L131.5 755.2L133.0 754.6M133.0 747.4L133.8 748.8L135.4 748.8L136.7 749.6M123.8 757.0L125.3 757.6L126.8 757.1M126.9 750.4L125.7 749.3L124.2 749.9L122.8 750.6L123.1 752.2M141.1 747.4L142.6 746.8L143.8 745.7M143.7 755.4L142.9 754.0L143.9 752.7L144.8 751.4L144.3 749.9M134.5 747.6L132.9 747.2L131.7 746.2L130.4 747.0L129.0 747.9L128.7 749.5M141.4 753.0L140.6 751.6L139.3 750.7M123.8 747.2L125.0 746.3L125.2 744.7L126.7 744.4L127.4 742.9M136.1 753.2L134.5 753.5L133.6 752.2M135.4 752.8L134.1 753.6L133.1 754.9L131.6 754.4L130.4 753.2M129.1 757.0L127.7 756.2L127.5 754.6L128.0 753.1M212.2 740.3L213.4 741.4L215.0 741.3L216.3 740.4L217.7 739.6L217.6 738.0M212.4 740.3L210.8 740.1L210.5 738.5M209.5 742.3L208.2 741.4L208.8 739.8M229.0 755.4L229.8 754.1L230.0 752.5L228.7 751.6L227.1 752.1L225.6 752.5M226.8 749.3L225.2 749.5L223.8 750.3L222.3 750.6M220.8 747.4L221.6 746.0L223.0 745.4L224.0 744.1M200.5 735.8L202.1 736.3L203.7 736.0L204.7 737.3L205.7 738.5L207.3 738.2M206.9 737.1L205.7 736.1L205.4 734.5M214.9 740.8L215.5 739.3L217.0 738.9L218.2 740.0L218.8 741.5M212.2 744.4L213.8 744.6L215.4 744.4L216.8 745.0M209.6 740.9L209.2 742.5L207.8 743.4L206.2 743.2L205.3 744.5M223.8 751.2L223.7 749.6L223.5 748.1L224.4 746.7L225.8 746.1L227.4 746.2M212.2 744.0L213.7 743.5L215.0 744.5L216.5 745.0L217.5 743.8M221.5 752.2L220.4 751.0L219.5 749.7L220.5 748.5L220.2 747.0L218.7 746.6M219.5 740.5L219.6 738.9L219.6 737.3L218.8 736.0L217.2 736.3M228.1 755.5L229.0 754.1L230.6 753.8L231.8 752.7M219.9 742.6L220.3 741.1L219.5 739.7M214.1 746.4L213.0 745.2L213.3 743.7M255.5 663.2L254.5 664.4L254.8 666.0L256.1 666.9L257.2 668.0L258.6 668.9M250.7 663.4L250.7 665.0L249.2 665.5L248.2 666.7L249.1 668.0L248.9 669.6M251.7 663.0L250.1 662.5L248.5 662.3M249.2 663.7L249.0 665.3L250.3 666.3M236.8 664.3L238.1 663.3L238.9 661.9M240.7 664.9L239.4 665.9L238.0 666.6L236.7 667.5L235.5 666.4L234.2 665.5M237.8 663.7L237.1 662.3L235.8 661.4L234.5 662.4L233.2 663.2M249.5 665.0L248.1 665.8L246.5 666.1L244.9 666.0" fill="none" stroke="#000" stroke-width="1.1"/>
<path d="M806.2 570.3L802.8 572.9L801 579L803.6 584.1L801 589.3L802.8 594.5L800.2 599.7L802.8 604.8L801 611.7L802.4 618.6L800.7 625.5L802.8 632.4L801 637.6L802.8 642.8L806.2 644.5Z" fill="#004466" stroke="#000" stroke-width="1"/>
<path d="M801.1 573.8L798.9 575.2L797.4 576.8L796.3 578.3L794.7 579.3L793.6 579.9L792.6 580.7L790.4 581.7M801.5 577.1L799.2 578.2L797.4 578.0L796.6 578.8L795.7 578.6L794.5 578.1L792.9 578.7M802.3 580.3L801.1 580.5L800.3 580.1L798.4 580.6L796.8 582.4L795.8 582.5L793.8 583.2L793.0 584.1M800.0 583.6L797.8 584.0L795.5 585.6L794.7 585.6M802.5 586.9L801.1 588.1L799.6 589.0L798.5 590.2L797.2 590.4L796.3 590.8L794.1 590.6M801.8 590.2L801.0 591.6L799.9 592.5L798.4 592.4M801.9 593.4L800.5 593.8L799.0 595.8L798.2 597.5L795.9 598.4M802.8 596.7L801.6 597.1L799.4 598.2L798.5 600.2M800.3 600.0L799.5 601.0L797.4 601.4L796.5 601.3L794.6 600.8L793.2 601.8M800.0 603.3L798.5 604.2L796.3 604.0L795.2 605.8L793.1 605.9L792.0 607.2L789.7 607.1L787.4 608.8M801.5 606.6L800.7 606.2L799.0 606.3L797.0 606.7L795.6 608.5L794.0 609.2L791.7 611.2M800.0 609.8L798.4 611.4L796.6 611.6L794.3 611.5L793.5 611.6L792.0 611.2L790.9 611.5M801.4 613.1L800.5 612.9L799.0 613.1L797.0 613.9L794.7 614.8M802.5 616.4L800.3 617.6L797.9 617.1L796.1 617.7L794.1 617.9L791.7 617.5L790.1 618.9M802.4 619.7L800.5 619.4L798.1 619.7L797.2 620.3L796.3 621.9L794.0 621.4L792.4 620.9L790.5 621.2L789.7 620.8M799.9 622.9L797.5 624.6L795.6 625.0L793.6 625.9M801.0 626.2L800.1 627.6L799.2 628.5L797.7 628.5L795.8 629.2L794.0 631.0L792.8 630.4L791.5 631.6M800.3 629.5L798.3 629.8L796.0 630.5L794.8 630.9L793.6 632.0M802.1 632.8L799.9 633.2L798.2 633.4L797.2 634.1L795.1 635.7M801.9 636.0L799.7 635.7L798.2 637.5L796.1 637.9L794.4 639.1L792.5 640.7M801.6 639.3L800.7 638.8L798.5 638.3L796.5 639.2L795.2 640.6L794.4 640.4M801.1 642.6L799.0 642.7L797.0 644.2L794.6 643.9M800.0 645.9L798.1 647.4L795.8 648.5L794.7 649.2L793.6 648.6L792.1 649.9L791.0 650.0L789.6 651.2" fill="none" stroke="#000" stroke-width="1.4"/>
<path d="M789 647.9L786.4 653.1L785.5 656.6L787.6 663.4L786.4 667.8L783.8 673.8L785.5 679L787.6 684.1L791 688.4L792.4 692.8L793.3 700" fill="none" stroke="#000" stroke-width="4.2" stroke-linejoin="round"/>
<path d="M789 647.9L786.4 653.1L785.5 656.6L787.6 663.4L786.4 667.8L783.8 673.8L785.5 679L787.6 684.1L791 688.4L792.4 692.8L793.3 700" fill="none" stroke="#004466" stroke-width="2.2" stroke-linejoin="round"/>
<path d="M789 647.9L794.1 646.2L801 644.5" fill="none" stroke="#000" stroke-width="2"/>
<path d="M790.6 690L792 695.6L794.8 702.7L790.6 708.3L788.5 713.9L789.9 718.1L785 720.2L783.6 725.1L784.3 730.8" fill="none" stroke="#000" stroke-width="3.5" stroke-linejoin="round"/>
<path d="M790.6 690L792 695.6L794.8 702.7L790.6 708.3L788.5 713.9L789.9 718.1L785 720.2L783.6 725.1L784.3 730.8" fill="none" stroke="#004466" stroke-width="1.8" stroke-linejoin="round"/>
<path d="M784.3 730.8L788.5 735L790.6 740.6L796.2 745.5L796.2 750.5L792 754.7L789.2 751.9L788.5 747.6L785 743.4L783.6 736.4Z" fill="#2b4564"/>
<path d="M769.5 791.9L770.9 790.1L775.1 789.1L777.9 790.1L778.6 791.9Z" fill="#2b4564"/>
<g fill="none" stroke="#000" stroke-width="1.1" stroke-linejoin="round">
<path d="M6 105.4L154.7 105.4L156.4 111.6L160.8 115.1L159.9 123L154.7 129.2L149.4 131.8L143.2 140.6M201.9 6.2C202.8 7.7 203.9 8.2 205.4 12.3C206.9 16.5 208.1 18.6 208.1 22.8C208.1 27.0 206.9 26.6 205.4 29C203.9 31.4 202.6 30.3 201.9 32.5C201.2 34.7 201.7 36.0 202.8 37.8C203.9 39.5 205.0 37.5 206.3 39.5C207.6 41.5 206.6 42.8 208.1 45.7C209.6 48.6 210.5 48.4 212.5 51C214.5 53.6 214.0 54.0 216 56.2C218.0 58.4 218.7 60.0 220.4 59.8C222.2 59.6 221.5 57.2 223 55.4C224.5 53.6 224.3 51.2 226.5 52.7C228.7 54.2 230.7 57.1 231.8 61.5C232.9 65.9 232.2 66.8 230.9 70.3C229.6 73.8 226.5 73.0 226.5 75.6C226.5 78.2 231.1 78.6 230.9 80.8C230.7 83.0 226.3 82.2 225.7 84.4C225.0 86.6 228.3 86.8 228.3 89.6C228.3 92.4 227.2 93.4 225.7 95.8C224.1 98.2 224.1 99.3 222.1 99.3C220.1 99.3 219.8 97.5 217.8 95.8C215.8 94.0 215.8 91.6 214.2 92.3C212.6 93.0 212.9 95.1 211.6 98.4C210.3 101.7 210.6 103.2 209 105.4C207.4 107.6 206.9 107.6 205.4 107.2C203.9 106.8 203.0 105.5 202.8 103.7C202.6 102.0 205.0 101.8 204.6 100.2C204.2 98.7 202.9 97.5 201.1 97.5C199.3 97.5 198.2 98.7 197.5 100.2C196.8 101.8 197.3 102.4 198.4 103.7C199.5 105.0 201.2 103.2 201.9 105.4C202.6 107.6 202.2 109.8 201.1 112.5C200.0 115.2 198.8 113.8 197.5 116C196.2 118.2 194.9 119.1 195.8 121.3C196.7 123.5 201.3 123.3 201.1 124.8C200.9 126.3 198.0 127.0 194.9 127.4C191.8 127.8 189.7 125.4 188.8 126.5C187.9 127.6 189.7 129.4 191.4 131.8C193.2 134.2 195.8 133.6 195.8 136.2C195.8 138.8 192.5 140.6 191.4 142M226.5 52.7L230.9 46.6L237.1 41.3L244.1 39.5L249.4 42.2L256.4 45.7L263.4 48.3L268.7 51L274 53.6L279.3 53.6L283.7 48.3L282.8 43.1L277.5 37.8L276.6 31.6L279.3 26.4L283.7 22.8L291.6 22L300 19.3M280 23.7L288.8 21.1L299.3 18.5L308.1 17.6L309 11.4L304.6 6.2M280 40.4L283.5 46.6L280 52.7M209 104.9L280 105.1L311.6 105.1L309 89.6L325.7 91.4L355.6 91.7L403 91L420.6 91.4L445.2 92.3L480 93.1M460 93.1L512.7 94L572.5 95.8L635.7 96.7L660 97M635.7 96.7L642.8 91.4L653.3 88.8L660 87M620 97L635.8 96.7L690.3 96.7L765.9 96.3L778.2 94.6L787 94.9L806.3 98.1M635.8 96.3L648.1 89.6L660.4 86.1L676.2 82.6L681.5 73.8L695.6 69.4L697.3 61.5L706.1 57.1L707.9 49.2L720.2 42.2L734.2 35.1L743 29.9L753.6 21.1L760.6 14.9L765.9 13.2M748.3 6.2L753.6 11.4L765.9 13.2L764.1 19.3L765.9 26.4L772.9 32.5L779.1 35.1L783.4 40.4L788.7 42.2L797.5 39.5L806.3 34.3M787 94.9L783.4 100.2L784.3 107.2L780.8 112.5L781.7 118.6L774.7 117.8L767.6 121.3L762.4 131.8L758.8 138.8L750.1 138L743 135.3L734.2 138.8L729.8 142M154.7 130L145.9 137L137.1 149.3L187.2 149.3M191.6 130C192.9 131.8 197.5 133.5 196.8 137C196.1 140.5 191.3 141.0 188.9 144.1C186.5 147.2 186.3 146.2 187.2 149.3C188.1 152.4 193.3 153.5 192.4 156.4C191.5 159.3 185.2 158.4 183.7 160.8C182.2 163.2 186.3 166.0 186.3 166L171.4 171.3C171.4 171.3 168.5 174.2 169.6 176.6C170.7 179.0 175.2 178.6 175.7 181C176.1 183.4 172.1 183.6 171.4 186.2C170.8 188.8 174.9 190.4 173.1 191.5C171.3 192.6 167.4 189.3 164.3 190.6C161.2 191.9 161.0 193.9 160.8 196.8C160.6 199.7 164.9 201.2 163.4 202.1C161.9 203.0 157.3 199.9 154.7 200.3C152.1 200.7 151.8 202.1 152.9 203.8C154.0 205.6 158.7 205.1 159.1 207.3C159.5 209.5 154.7 209.9 154.7 212.6C154.7 215.2 158.4 215.3 159.1 217.9C159.8 220.5 156.9 220.9 157.3 223.1C157.7 225.3 161.9 225.4 160.8 226.7C159.7 228.0 155.3 226.7 152.9 228.4C150.5 230.2 153.5 231.9 151.1 233.7C148.7 235.4 145.2 234.1 143.2 235.4C141.2 236.7 142.1 236.8 143.2 239C144.3 241.2 147.4 241.1 147.6 244.2C147.8 247.3 146.7 249.1 144.1 251.3C141.5 253.5 139.9 253.9 137.1 253C134.2 252.1 134.4 248.2 132.7 247.8C130.9 247.4 130.3 249.1 130.1 251.3C129.9 253.5 132.9 255.2 131.8 256.5C130.7 257.8 126.4 255.2 125.7 256.5C125.0 257.8 129.9 259.6 129.2 261.8C128.5 264.0 123.2 263.6 123 265.3C122.8 267.1 127.9 267.1 128.3 268.8C128.8 270.5 125.7 271.2 124.8 272M128.3 260C129.0 261.8 131.6 264.4 130.9 267C130.2 269.6 127.7 268.1 125.7 270.5C123.7 272.9 123.0 274.5 123 276.7C123.0 278.9 125.9 277.8 125.7 279.3C125.5 280.8 122.5 280.2 122.1 282.8C121.6 285.4 125.4 287.2 123.9 289.9C122.4 292.5 118.4 291.2 116 293.4C113.6 295.6 115.8 298.3 114.2 298.7C112.7 299.1 110.7 294.2 109.8 295.1C108.9 296.0 112.2 300.2 110.7 302.2C109.2 304.2 106.1 301.8 103.7 303.1C101.3 304.4 100.7 305.5 101.1 307.5C101.5 309.5 105.2 309.2 105.4 311C105.6 312.8 104.3 314.1 101.9 314.5C99.5 314.9 96.7 314.4 95.8 312.7C94.9 310.9 98.6 306.6 98.4 307.5C98.2 308.4 94.2 313.1 94.9 316.2C95.6 319.3 100.0 317.6 101.1 319.8C102.2 322.0 101.7 323.0 99.3 325C96.9 327.0 94.9 326.4 91.4 327.7C87.9 329.0 84.8 329.4 85.2 330.3C85.6 331.2 92.4 329.4 93.1 331.2C93.8 332.9 89.4 334.4 87.9 337.3C86.4 340.2 85.7 340.4 87 342.6C88.3 344.8 92.2 344.4 93.1 346.1C94.0 347.9 93.1 349.4 90.5 349.6C87.9 349.8 85.2 346.6 82.6 347C80.0 347.4 79.1 349.0 80 351.4C80.9 353.8 85.9 354.9 86.1 356.7C86.3 358.4 83.4 358.8 80.8 358.4C78.2 357.9 76.9 354.4 75.6 354.9C74.3 355.3 74.1 358.4 75.6 360.2C77.1 361.9 81.7 360.4 81.7 361.9C81.7 363.4 77.1 363.6 75.6 366.3C74.1 369.0 73.8 370.5 75.6 372.5C77.3 374.5 79.8 372.9 82.6 374.2C85.4 375.5 86.8 375.6 87 377.8C87.2 380.0 85.9 382.1 83.5 383C81.1 383.9 79.3 383.1 77.3 381.3C75.3 379.6 74.7 375.6 75.6 376C76.5 376.4 79.5 379.5 80.8 383C82.1 386.5 79.2 387.9 80.8 390.1C82.3 392.3 85.7 390.3 87 391.8C88.3 393.3 87.2 395.8 86.1 396.2C85.0 396.6 82.8 392.2 82.6 393.6C82.4 395.1 84.5 399.9 85.2 402M6 415.2L78.2 415.2M86.1 395C85.7 396.8 86.6 399.8 84.4 402C82.2 404.2 79.1 402.0 77.3 403.8C75.5 405.6 76.2 406.9 77.3 409.1C78.4 411.3 81.5 410.4 81.7 412.6C81.9 414.8 79.7 415.2 78.2 417.8C76.7 420.4 74.9 421.3 75.6 423.1C76.2 424.9 78.2 425.3 80.8 424.9C83.4 424.5 85.4 423.4 86.1 421.4C86.8 419.4 83.3 416.1 83.5 417C83.7 417.9 87.2 421.6 87 424.9C86.8 428.2 84.6 427.5 82.6 430.1C80.6 432.7 78.2 432.8 79.1 435.4C80.0 438.0 83.9 438.0 86.1 440.7C88.3 443.4 89.0 444.2 87.9 446C86.8 447.8 83.5 445.9 81.7 447.7C79.9 449.4 78.8 452.1 80.8 453C82.8 453.9 86.9 450.5 89.6 451.2C92.2 451.9 92.7 454.3 91.4 455.6C90.1 456.9 86.6 454.9 84.4 456.5C82.2 458.1 81.7 459.6 82.6 461.8C83.5 464.0 84.8 464.0 87.9 465.3C91.0 466.6 93.2 465.4 94.9 467.1C96.7 468.9 93.6 471.2 94.9 472.3C96.2 473.4 99.3 470.1 100.2 471.4C101.1 472.7 100.2 475.2 98.4 477.6C96.6 480.0 94.8 478.9 93.1 481.1C91.3 483.3 94.0 485.3 91.4 486.4C88.8 487.5 85.9 484.4 82.6 485.5C79.3 486.6 78.7 488.1 78.2 490.8C77.8 493.5 78.4 495.0 80.8 496.1C83.2 497.2 85.5 496.5 87.9 495.2C90.3 493.9 90.5 489.9 90.5 490.8C90.5 491.7 90.3 496.3 87.9 498.7C85.5 501.1 81.2 499.1 80.8 500.4C80.3 501.7 85.6 502.2 86.1 504C86.5 505.8 84.8 505.8 82.6 507.5C80.4 509.2 79.9 508.4 77.3 511C74.7 513.6 74.9 516.0 72.1 518C69.2 520.0 67.9 517.1 65.9 518.9C63.9 520.7 62.5 523.4 64.1 525.1C65.6 526.9 70.5 525.0 72.1 525.9C73.6 526.8 72.5 527.5 70.3 528.6C68.1 529.7 65.5 528.2 63.3 530.3C61.1 532.4 62.0 535.3 61.5 537M62.4 530C62.2 532.0 63.0 536.1 61.5 537.9C60.0 539.6 58.2 536.4 56.2 537C54.2 537.6 52.7 539.0 53.6 540.5C54.5 542.0 59.1 541.0 59.8 543.2C60.4 545.4 58.0 546.4 56.2 549.3C54.4 552.1 54.7 552.4 52.7 554.6C50.7 556.8 48.7 556.1 48.3 558.1C47.9 560.1 49.0 562.0 51 562.5C53.0 563.0 55.8 559.2 56.2 559.9C56.6 560.5 53.8 562.5 52.7 565.1C51.6 567.7 54.0 568.9 51.8 570.4C49.6 571.9 45.0 569.5 43.9 571.3C42.8 573.1 47.5 574.6 47.5 577.5C47.5 580.4 43.5 580.1 43.9 582.7C44.3 585.3 49.0 585.0 49.2 588C49.4 591.0 44.8 594.5 44.8 594.5L186.3 594.5C186.3 594.5 185.4 599.3 183.7 603.8C181.9 608.3 180.9 608.2 179.3 612.6C177.8 617.0 177.1 617.0 177.5 621.4C177.9 625.8 179.2 626.2 181 630.2C182.8 634.2 182.5 634.1 184.5 637.2C186.5 640.3 187.4 639.0 188.9 642.5C190.4 646.0 189.6 647.3 190.7 651.3C191.8 655.2 192.2 654.3 193.3 658.3C194.4 662.2 194.2 663.7 195.1 667.1C196.0 670.5 196.4 670.8 196.8 672M143 238.2L180 238.4L299.5 238.4L299.5 237.2L380 237.6M299.5 238.4L303 244.2L307.4 246.9L306.5 260.1L304.8 272M380 237.6L460 239.1L660 239.1M492.5 239.1L497.8 272M588.3 239.1L590.1 217.9L595.3 214.4L600.6 216.1L607.6 214.4L610.3 209.1L611.1 200.3L618.2 195L628.7 188.9L641 186.2L648.9 188L660 180.1M620 192.4C622.6 191.3 625.2 189.6 630.5 188C635.8 186.4 636.5 186.2 641.1 186.2C645.7 186.2 644.2 189.5 649 188C653.8 186.5 654.9 183.8 660.4 180.1C665.9 176.4 666.1 176.2 671 173.1C675.9 170.0 675.6 168.9 679.8 167.8C684.0 166.7 684.4 170.2 687.7 168.7C691.0 167.1 691.6 164.7 692.9 161.6C694.2 158.5 690.9 158.4 692.9 156.4C694.9 154.4 697.5 155.7 700.8 153.7C704.1 151.7 703.0 151.1 706.1 148.5C709.2 145.9 710.5 143.9 713.1 143.2C715.8 142.5 716.0 144.1 716.7 145.8C717.4 147.6 714.9 148.4 715.8 150.2C716.7 151.9 717.4 153.5 720.2 152.8C723.1 152.2 724.1 150.9 727.2 147.6C730.3 144.3 728.5 142.5 732.5 139.7C736.5 136.8 738.6 136.9 743 136.2C747.4 135.5 747.5 136.1 750.1 137C752.8 137.9 751.4 139.5 753.6 139.7C755.8 139.9 756.6 140.3 758.8 137.9C761.0 135.5 761.5 132.0 762.4 130M620 239.3L679.8 238.4L690.3 234.6L702.6 231.9L709.6 227.5L720.2 224.9L730.7 220.5L741.3 220.5L760.6 221.4L806.3 223.1M679.8 238.4L676.2 244.2L667.5 251.3L663.1 256.5L660.4 263.6L663.9 268.8L669.2 272M660.4 260C660.6 261.3 658.6 262.2 661.3 265.3C663.9 268.4 666.4 268.8 671 272.3C675.6 275.8 676.3 276.5 679.8 279.3C683.3 282.1 681.5 282.6 685 283.7C688.5 284.8 690.7 282.1 693.8 283.7C696.9 285.2 695.1 286.1 697.3 289.9C699.5 293.6 700.4 294.3 702.6 298.7C704.8 303.1 704.4 303.6 706.1 307.5C707.9 311.4 707.4 311.0 709.6 314.5C711.8 318.0 712.7 317.6 714.9 321.5C717.1 325.4 715.3 326.8 718.4 330.3C721.5 333.8 722.8 333.0 727.2 335.6C731.6 338.2 732.0 337.3 736 340.8C740.0 344.3 740.4 345.2 743 349.6C745.6 354.0 743.9 354.9 746.5 358.4C749.1 361.9 750.3 361.7 753.6 363.7C756.9 365.7 756.6 363.7 759.7 366.3C762.8 368.9 764.4 370.0 765.9 374.2C767.4 378.4 764.6 379.0 765.9 383C767.2 387.0 769.4 387.0 771.1 390.1C772.9 393.2 770.9 393.1 772.9 395.3C774.9 397.5 777.5 397.1 779.1 398.8C780.7 400.5 779.1 401.2 779.1 402M773.8 395L779.1 398.5L779.9 402.9L788.7 408.2L797.5 413.5L799.3 421.4L803.7 430.1L804.5 438.9L806.3 442.5M497.8 272L499.5 277.6L507.5 321.5L512.7 355.8L520.6 402M519.8 395L525 428.4L527.7 437.2L532.1 449.5L537.3 460L540 467.1L537.3 475L546.1 481.1L539.1 487.3L533.8 493.4L532.9 501.3M532.9 538.8L533.8 547.6L531.2 561.6L529.4 575.7L535.6 586.2L538.2 595L540.8 602.1M340 594.5L460 594.5L537.3 594.5M547.9 620L583 621.7L618.2 624L660 626.3L720 630.7L743.3 631.5M743.3 631.6L745.9 646.2L747.6 650.5L757.1 650.5L758.8 642.8L759.7 632.4L757.1 622.1L758.8 613.4L764.8 610L770 611.7L778.6 615.2L786.4 616.9L795.9 619.5M307.2 246.6L298.6 330L284.6 465L281.9 482.6L279.8 510.7L280.2 535.3L281.9 570.4L283.7 607M344.3 594.5L341.7 607M281.6 560L283.7 595.1L285.4 648.8M344.3 594.6L345.2 600.4L341.7 606.6L348.7 614.5L355.7 620.6L359.3 626.8L355.7 635.6L357.5 642.6L361.9 645.2M344.3 594.6L380 594.6M186.2 594.6L183.5 603.9L180 612.7M180 631.2L187.9 640.8L190.5 651.4L194.1 660.2L197.6 666.3"/>
<path d="M237.3 719.8L233.8 725.1M227.7 729.5L223.3 731.3M512.3 712.1L508.8 706.8L507 698L507.9 694.5M521.1 711.7L528.1 713.8L533.4 720L542.2 715.6L552.7 710.3L559.8 705.9M561.5 702.4L570.3 698.9M330 663.3L344.1 659.8L359.9 655.4L375.7 651L391.5 648.3L407.3 647.1M334.7 661.1L324.1 662.5L312.7 664M292.5 661.9L308.3 661.1M257.3 661.1L267.9 662.8L274.9 663.7L285.4 665.4M228.3 662.4L231.8 663L235.3 661.5L232.7 665.5M241.4 664.6L245 664.2L249.4 662M257.3 661.5L260.8 660.7L264.3 661.5M204.5 669.9L207.2 670.8L208.9 670.3L208.1 672.1M225.6 669.9L228.3 668.6M226.5 673L228.3 673.4M249.4 678.2L252.9 682.2L254.6 689.2L252.9 699.8L248.5 708.5M245.4 696.2L247.6 693.6L250.7 692.7L249.8 697.1M241.4 701.5L242.8 698"/>
</g>
<g fill="none" stroke="#dcdcdc" stroke-width="0.75">
<circle cx="407" cy="407" r="159.5"/>
<circle cx="407" cy="407" r="279.5"/>
<circle cx="407" cy="407" r="399.5"/>
<circle cx="407" cy="407" r="519.5"/>
</g>
<circle cx="407" cy="407" r="39.5" fill="none" stroke="#e00000" stroke-width="1.2"/>
<rect x="395" y="5.5" width="23" height="4" fill="#5d504b"/>
<text x="405.5" y="11.3" text-anchor="middle" font-family="Liberation Sans, sans-serif" font-size="9.8" fill="#f4f48c" textLength="21.5" lengthAdjust="spacingAndGlyphs" stroke="#3a2f2c" stroke-width="0.4" paint-order="stroke">313</text>
<rect x="395" y="125.5" width="23" height="4" fill="#5d504b"/>
<text x="405.5" y="131.3" text-anchor="middle" font-family="Liberation Sans, sans-serif" font-size="9.8" fill="#f4f48c" textLength="21.5" lengthAdjust="spacingAndGlyphs" stroke="#3a2f2c" stroke-width="0.4" paint-order="stroke">219</text>
<rect x="395" y="245.5" width="23" height="4" fill="#5d504b"/>
<text x="405.5" y="251.3" text-anchor="middle" font-family="Liberation Sans, sans-serif" font-size="9.8" fill="#f4f48c" textLength="21.5" lengthAdjust="spacingAndGlyphs" stroke="#3a2f2c" stroke-width="0.4" paint-order="stroke">125</text>
<rect x="398.5" y="365.5" width="16" height="4" fill="#5d504b"/>
<text x="405.5" y="371.3" text-anchor="middle" font-family="Liberation Sans, sans-serif" font-size="9.8" fill="#f4f48c" textLength="12.5" lengthAdjust="spacingAndGlyphs" stroke="#3a2f2c" stroke-width="0.4" paint-order="stroke">31</text>
</svg>
<div id="legend"></div>
<div id="copy"></div>
<svg style="position:absolute;left:0;top:0" width="800" height="800" viewBox="6 6 800 800" fill="none" stroke-width="1.1">
<g stroke="#00e8f0"><circle cx="60.5" cy="780.5" r="4"/><path d="M58 780.5h5M82 780.5h7.5M107.7 780.5h5M110.2 778v5M131.7 780.5h7.5M135.5 776.8v7.5"/><circle cx="110.2" cy="780.5" r="4"/></g>
<g stroke="#f0f000"><circle cx="60.5" cy="793.5" r="4"/><path d="M58 793.5h5M82 793.5h7.5M107.7 793.5h5M110.2 791v5M131.7 793.5h7.5M135.5 789.8v7.5"/><circle cx="110.2" cy="793.5" r="4"/></g>
</svg>

</div>
<div class="panel" style="top:8px;height:318px"></div>
<div class="panel" style="top:333px;height:113px"></div>
<div class="panel" style="top:454px;height:347px"></div>
<div class="btn" style="left:819px;top:16px;width:58px;height:18px;background:#5a0000"></div>
<div class="btn" style="left:883px;top:16px;width:58px;height:18px;background:#333"></div>
<div class="btn" style="left:994px;top:16px;width:128px;height:18px;background:#333"></div>
<div class="btn" style="left:821px;top:64px;width:82px;height:16px"></div>
<div class="btn" style="left:931px;top:64px;width:82px;height:16px"></div>
<div class="btn" style="left:1041px;top:64px;width:82px;height:16px"></div>
<div class="hr" style="left:821px;top:217px;width:303px"></div>
<div class="hr" style="left:821px;top:358px;width:302px"></div>
<div class="bar" style="left:925px;top:227px"></div>
<div class="bar" style="left:1028px;top:227px"></div>
<div class="bar" style="left:925px;top:281px"></div>
<div class="bar" style="left:1028px;top:281px"></div>
<svg style="position:absolute;left:812px;top:530px" width="320" height="260" viewBox="812 530 320 260" shape-rendering="crispEdges"><g stroke="#c0c0c0" stroke-width="1" fill="none"><path d="M1088.5 542V778.5M822 777.5H1089"/><path d="M1083 542.5H1088"/><path d="M1085 581.5H1088"/><path d="M1083 620.5H1088"/><path d="M1085 660.5H1088"/><path d="M1083 699.5H1088"/><path d="M1085 738.5H1088"/><path d="M1083 777.5H1088"/><path d="M822.5 774V777"/><path d="M866.5 774V777"/><path d="M910.5 774V777"/><path d="M955.5 774V777"/><path d="M999.5 774V777"/><path d="M1044.5 774V777"/><path d="M1088.5 774V777"/></g></svg>
<div class="t b" style="left:824.4px;top:20.24px;font-size:12px;color:#d4d4d4;transform:scaleX(1.0932)">STRIKE</div>
<div class="t b" style="left:890.4px;top:20.24px;font-size:12px;color:#c8c8c8;transform:scaleX(1.1624)">NOISE</div>
<div class="t b" style="left:998.6px;top:20.44px;font-size:12px;color:#fff;transform:scaleX(1.1861)">Bng 167°</div>
<div class="t b" style="left:1075.3px;top:20.44px;font-size:12px;color:#00fa00;transform:scaleX(1.2585)">379mi</div>
<div class="t" style="left:829.1px;top:66.63px;font-size:11.3px;color:#f0f0f0;transform:scaleX(1.1766)">Strikes/min</div>
<div class="t" style="left:943.6px;top:66.63px;font-size:11.3px;color:#f0f0f0;transform:scaleX(1.1333)">Close/min</div>
<div class="t" style="left:1050.5px;top:66.63px;font-size:11.3px;color:#f0f0f0;transform:scaleX(1.1171)">Noises/min</div>
<div class="t b" style="left:882.86px;top:86.97px;font-size:29.8px;color:#fff;transform:scaleX(1.28)">0</div>
<div class="t b" style="left:992.51px;top:86.97px;font-size:29.8px;color:#fff;transform:scaleX(1.2933)">0</div>
<div class="t b" style="left:1102.11px;top:86.97px;font-size:29.8px;color:#b4b4b4;transform:scaleX(1.2867)">0</div>
<div class="t" style="left:826.1px;top:133.02px;font-size:12.5px;color:#fff;transform:scaleX(1.1249)">Total Strikes</div>
<div class="t" style="left:944.5px;top:133.02px;font-size:12.5px;color:#fff;transform:scaleX(1.0989)">Total Close</div>
<div class="t" style="left:1047.9px;top:133.02px;font-size:12.5px;color:#c8c8c8;transform:scaleX(1.1012)">Total Noises</div>
<div class="t" style="left:895.0px;top:151.22px;font-size:12.5px;color:#fff;transform:scaleX(1.1143)">0</div>
<div class="t" style="left:1005.0px;top:151.22px;font-size:12.5px;color:#fff;transform:scaleX(1.1143)">0</div>
<div class="t" style="left:1114.6px;top:151.22px;font-size:12.5px;color:#d8d8d8;transform:scaleX(1.1429)">4</div>
<div class="t" style="left:819.93px;top:205.12px;font-size:12.5px;color:#c0c0c0;transform:scaleX(1.1683)">Lightning type distribution</div>
<div class="t b" style="left:821.0px;top:226.94px;font-size:12px;color:#fff;transform:scaleX(1.0699)">Cloud-ground</div>
<div class="t b" style="left:821.0px;top:281.04px;font-size:12px;color:#fff;transform:scaleX(1.1028)">Intracloud</div>
<div class="t" style="left:912.5px;top:226.52px;font-size:12.5px;color:#fff;transform:scaleX(1.2143)">+</div>
<div class="t b" style="left:979.4px;top:226.94px;font-size:12px;color:#fff;transform:scaleX(1.1825)">0%</div>
<div class="t b" style="left:1015.3px;top:226.94px;font-size:12px;color:#fff;transform:scaleX(1.1714)">–</div>
<div class="t b" style="left:1082.0px;top:226.94px;font-size:12px;color:#fff;transform:scaleX(1.2391)">0%</div>
<div class="t" style="left:912.5px;top:280.62px;font-size:12.5px;color:#fff;transform:scaleX(1.2143)">+</div>
<div class="t b" style="left:979.4px;top:281.04px;font-size:12px;color:#fff;transform:scaleX(1.1825)">0%</div>
<div class="t b" style="left:1015.3px;top:281.04px;font-size:12px;color:#fff;transform:scaleX(1.1714)">–</div>
<div class="t b" style="left:1082.0px;top:281.04px;font-size:12px;color:#fff;transform:scaleX(1.2391)">0%</div>
<div class="t b" style="left:821.0px;top:251.14px;font-size:12px;color:#c8c8c8;transform:scaleX(1.0965)">Count</div>
<div class="t b" style="left:924.6px;top:251.14px;font-size:12px;color:#fff;transform:scaleX(1.2)">0</div>
<div class="t b" style="left:1027.8px;top:251.14px;font-size:12px;color:#fff;transform:scaleX(1.2)">0</div>
<div class="t b" style="left:821.0px;top:305.14px;font-size:12px;color:#c8c8c8;transform:scaleX(1.0965)">Count</div>
<div class="t b" style="left:924.6px;top:305.14px;font-size:12px;color:#fff;transform:scaleX(1.2)">0</div>
<div class="t b" style="left:1027.8px;top:305.14px;font-size:12px;color:#fff;transform:scaleX(1.2)">0</div>
<div class="t b" style="left:821.07px;top:339.76px;font-size:16px;color:#00fa00;transform:scaleX(1.2774)">1/30/2026 1:04:52 AM</div>
<div class="t" style="left:821.3px;top:377.92px;font-size:12.5px;color:#fff;transform:scaleX(1.0725)">Squelch</div>
<div class="t" style="left:909.9px;top:377.92px;font-size:12.5px;color:#fff;transform:scaleX(0.9143)">0</div>
<div class="t" style="left:980.88px;top:377.92px;font-size:12.5px;color:#fff;transform:scaleX(1.1204)">Upload</div>
<div class="t" style="left:1060.18px;top:377.92px;font-size:12.5px;color:#c8c8c8;transform:scaleX(1.1156)">Disabled</div>
<div class="t" style="left:820.18px;top:397.82px;font-size:12.5px;color:#fff;transform:scaleX(1.1219)">Persistence</div>
<div class="t" style="left:909.9px;top:397.82px;font-size:12.5px;color:#fff;transform:scaleX(1.0861)">90 min</div>
<div class="t" style="left:981.6px;top:397.82px;font-size:12.5px;color:#fff;transform:scaleX(1.1254)">Capture</div>
<div class="t" style="left:1060.94px;top:397.82px;font-size:12.5px;color:#00fa00;transform:scaleX(1.0569)">Active</div>
<div class="t" style="left:820.2px;top:417.62px;font-size:12.5px;color:#fff;transform:scaleX(1.098)">Range</div>
<div class="t" style="left:909.9px;top:417.62px;font-size:12.5px;color:#fff;transform:scaleX(1.1105)">313 mi</div>
<div class="t" style="left:980.7px;top:417.62px;font-size:12.5px;color:#fff;transform:scaleX(1.0593)">Receiver</div>
<div class="t" style="left:1060.46px;top:417.62px;font-size:12.5px;color:#00fa00;transform:scaleX(1.1357)">Enabled</div>
<div class="t" style="left:820.04px;top:464.82px;font-size:12.5px;color:#c8c8c8;transform:scaleX(1.1313)">Uptime</div>
<div class="t" style="left:909.9px;top:464.82px;font-size:12.5px;color:#fff;transform:scaleX(1.139)">444:49</div>
<div class="t" style="left:981.02px;top:464.82px;font-size:12.5px;color:#c8c8c8;transform:scaleX(1.1203)">Peak time</div>
<div class="t" style="left:1060.18px;top:464.82px;font-size:12.5px;color:#c8c8c8;transform:scaleX(1.1203)">Plot</div>
<div class="t" style="left:820.15px;top:487.72px;font-size:12.5px;color:#c8c8c8;transform:scaleX(1.1455)">Peak rate</div>
<div class="t" style="left:909.9px;top:487.72px;font-size:12.5px;color:#fff;transform:scaleX(1.0975)">0/min</div>
<div class="t" style="left:981.53px;top:487.72px;font-size:12.5px;color:#fff;transform:scaleX(1.1026)">1:04 AM</div>
<div class="t" style="left:1061.3px;top:487.72px;font-size:12.5px;color:#fff;transform:scaleX(1.1)">Strike</div>
<div class="t" style="left:823.0px;top:517.62px;font-size:12.5px;color:#c8c8c8;transform:scaleX(1.1126)">Trend graph</div>
<div class="t" style="left:908.7px;top:517.62px;font-size:12.5px;color:#fff;transform:scaleX(1.0967)">60 min</div>
<div class="t" style="left:820.5px;top:783.89px;font-size:11px;color:#c8c8c8;transform:scaleX(0.9903)">60</div>
<div class="t" style="left:864.7px;top:783.89px;font-size:11px;color:#c8c8c8;transform:scaleX(0.9903)">50</div>
<div class="t" style="left:909.0px;top:783.89px;font-size:11px;color:#c8c8c8;transform:scaleX(0.9903)">40</div>
<div class="t" style="left:953.5px;top:783.89px;font-size:11px;color:#c8c8c8;transform:scaleX(0.9903)">30</div>
<div class="t" style="left:997.0px;top:783.89px;font-size:11px;color:#c8c8c8;transform:scaleX(0.9903)">20</div>
<div class="t" style="left:1041.53px;top:783.89px;font-size:11px;color:#c8c8c8;transform:scaleX(1.0803)">10</div>
<div class="t" style="left:1087.6px;top:783.89px;font-size:11px;color:#c8c8c8;transform:scaleX(1.0)">0</div>
<div class="t" style="left:1100.6px;top:783.89px;font-size:11px;color:#c8c8c8;transform:scaleX(0.9939)">min</div>
<div class="t" style="left:1092.0px;top:537.39px;font-size:11px;color:#c8c8c8;transform:scaleX(1.0976)">30</div>
<div class="t" style="left:1092.0px;top:615.19px;font-size:11px;color:#c8c8c8;transform:scaleX(1.0976)">20</div>
<div class="t" style="left:1091.1px;top:693.89px;font-size:11px;color:#c8c8c8;transform:scaleX(1.2165)">10</div>
<div class="t" style="left:13.3px;top:762.87px;font-size:10.2px;color:#f0f0f0;transform:scaleX(0.9161)">Symbols</div>
<div class="t" style="left:53.3px;top:762.87px;font-size:10.2px;color:#f0f0f0;transform:scaleX(0.88)">-CG</div>
<div class="t" style="left:78.2px;top:762.87px;font-size:10.2px;color:#f0f0f0;transform:scaleX(1.0285)">-IC</div>
<div class="t" style="left:99.4px;top:762.87px;font-size:10.2px;color:#f0f0f0;transform:scaleX(0.9011)">+CG</div>
<div class="t" style="left:124.2px;top:762.87px;font-size:10.2px;color:#f0f0f0;transform:scaleX(1.0647)">+IC</div>
<div class="t" style="left:153.2px;top:762.87px;font-size:10.2px;color:#c4c8d0;transform:scaleX(0.8898)">Strike age color codes</div>
<div class="t" style="left:13.6px;top:775.67px;font-size:10.2px;color:#f0f0f0;transform:scaleX(0.8383)">Recent</div>
<div class="t" style="left:13.6px;top:788.57px;font-size:10.2px;color:#f0f0f0;transform:scaleX(0.8834)">Old</div>
<div class="t" style="left:152.48px;top:775.67px;font-size:10.2px;color:#e8e000;transform:scaleX(1.0095)">15+</div>
<div class="t" style="left:187.86px;top:775.67px;font-size:10.2px;color:#e8b000;transform:scaleX(0.997)">30+</div>
<div class="t" style="left:223.4px;top:775.67px;font-size:10.2px;color:#e89000;transform:scaleX(0.8943)">45+</div>
<div class="t" style="left:152.48px;top:788.57px;font-size:10.2px;color:#e87800;transform:scaleX(1.0095)">60+</div>
<div class="t" style="left:187.86px;top:788.57px;font-size:10.2px;color:#e85800;transform:scaleX(0.997)">75+</div>
<div class="t" style="left:223.4px;top:788.57px;font-size:10.2px;color:#e03000;transform:scaleX(0.8943)">90+</div>
<div class="t" style="left:689.2px;top:793.27px;font-size:10.2px;color:#fff;transform:scaleX(0.916)">©2005 Astrogenic Systems</div>
</body></html>
